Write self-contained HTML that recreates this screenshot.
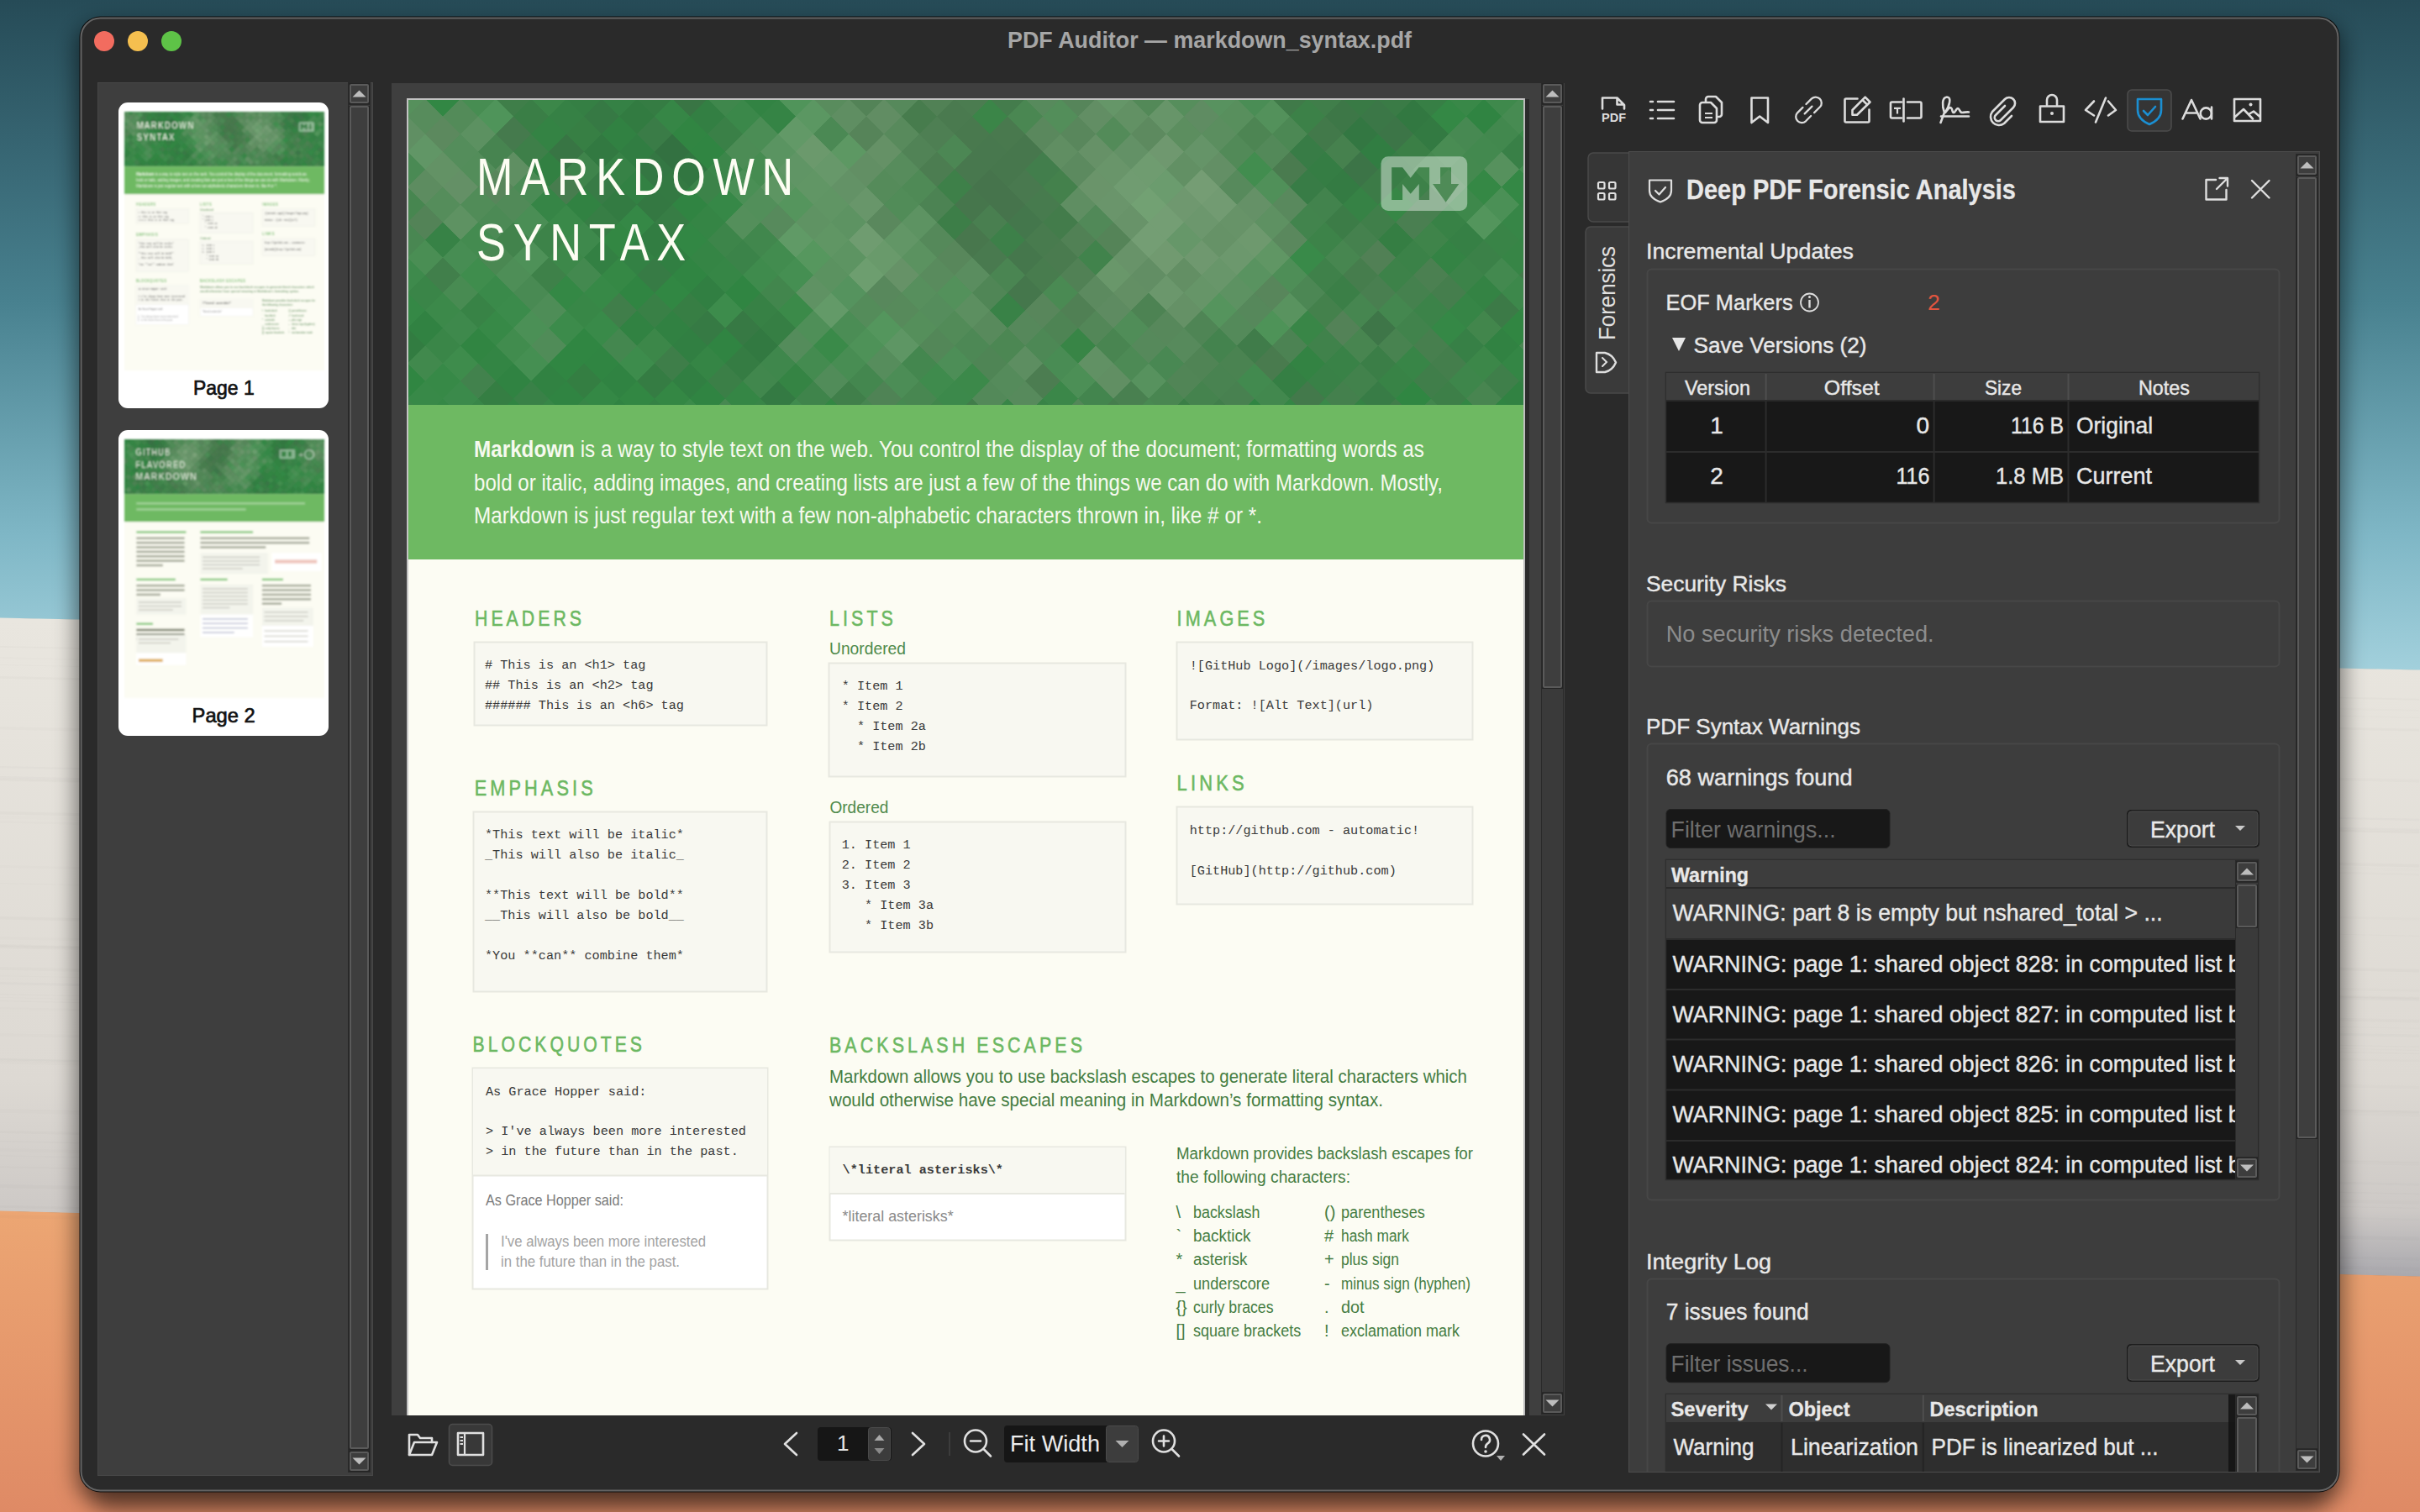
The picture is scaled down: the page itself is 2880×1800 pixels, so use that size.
<!DOCTYPE html><html><head><meta charset="utf-8"><style>html,body{margin:0;padding:0;width:2880px;height:1800px;overflow:hidden;background:#2a5562}svg{display:block;font-family:"Liberation Sans",sans-serif}</style></head><body>
<svg width="2880" height="1800" viewBox="0 0 2880 1800">
<defs>
<linearGradient id="wgTop" x1="0" y1="0" x2="0" y2="1">
<stop offset="0" stop-color="#264b57"/><stop offset="0.45" stop-color="#48818f"/><stop offset="0.8" stop-color="#7fb7c6"/><stop offset="1" stop-color="#a2d0dc"/></linearGradient>
<linearGradient id="wgMid" x1="0" y1="0" x2="0" y2="1">
<stop offset="0" stop-color="#e9e6df"/><stop offset="0.7" stop-color="#ddd9d3"/><stop offset="0.9" stop-color="#cdc9c6"/><stop offset="1" stop-color="#a9a8ad"/></linearGradient>
<linearGradient id="wgBot" x1="0" y1="0" x2="0" y2="1">
<stop offset="0" stop-color="#eca673"/><stop offset="1" stop-color="#df8a65"/></linearGradient>
<filter id="shadow" x="-10%" y="-10%" width="120%" height="120%"><feGaussianBlur stdDeviation="13"/></filter>
<filter id="thblur" x="-5%" y="-5%" width="110%" height="110%"><feGaussianBlur stdDeviation="4.5"/></filter>
<clipPath id="hdrclip"><rect x="0" y="0" width="1329" height="364"/></clipPath>
<clipPath id="viewclip"><rect x="485" y="118" width="1328" height="1567"/></clipPath>
<clipPath id="panelclip"><rect x="1939" y="181" width="822" height="1571"/></clipPath>
<clipPath id="th1"><rect x="0" y="0" width="238" height="308"/></clipPath>
<clipPath id="warnclip"><rect x="1983" y="1057" width="677" height="348"/></clipPath>
</defs>
<path d="M0 0H2880V798L0 736z" fill="url(#wgTop)"/>
<path d="M0 735.5L2880 797.5V1520L0 1442z" fill="url(#wgMid)"/>
<path d="M0 1441.5L2880 1519.5V1800H0z" fill="url(#wgBot)"/>
<rect x="0" y="927" width="2880" height="2.1" fill="#6a6060" fill-opacity="0.019" transform="rotate(1.25 0 927)"/>
<rect x="0" y="1183" width="2880" height="1.2" fill="#6a6060" fill-opacity="0.021" transform="rotate(1.25 0 1183)"/>
<rect x="0" y="769" width="2880" height="1.8" fill="#6a6060" fill-opacity="0.025" transform="rotate(1.25 0 769)"/>
<rect x="0" y="924" width="2880" height="2.4" fill="#6a6060" fill-opacity="0.028" transform="rotate(1.25 0 924)"/>
<rect x="0" y="1346" width="2880" height="2.9" fill="#6a6060" fill-opacity="0.018" transform="rotate(1.25 0 1346)"/>
<rect x="0" y="865" width="2880" height="3.6" fill="#6a6060" fill-opacity="0.021" transform="rotate(1.25 0 865)"/>
<rect x="0" y="1126" width="2880" height="3.0" fill="#6a6060" fill-opacity="0.023" transform="rotate(1.25 0 1126)"/>
<rect x="0" y="805" width="2880" height="2.8" fill="#6a6060" fill-opacity="0.023" transform="rotate(1.25 0 805)"/>
<rect x="0" y="971" width="2880" height="3.6" fill="#6a6060" fill-opacity="0.009" transform="rotate(1.25 0 971)"/>
<rect x="0" y="1091" width="2880" height="3.6" fill="#6a6060" fill-opacity="0.022" transform="rotate(1.25 0 1091)"/>
<rect x="0" y="1260" width="2880" height="2.2" fill="#6a6060" fill-opacity="0.026" transform="rotate(1.25 0 1260)"/>
<rect x="0" y="1321" width="2880" height="3.8" fill="#6a6060" fill-opacity="0.017" transform="rotate(1.25 0 1321)"/>
<rect x="0" y="1375" width="2880" height="1.4" fill="#6a6060" fill-opacity="0.010" transform="rotate(1.25 0 1375)"/>
<rect x="0" y="912" width="2880" height="2.3" fill="#6a6060" fill-opacity="0.027" transform="rotate(1.25 0 912)"/>
<rect x="0" y="1199" width="2880" height="2.5" fill="#6a6060" fill-opacity="0.014" transform="rotate(1.25 0 1199)"/>
<rect x="0" y="1030" width="2880" height="2.8" fill="#6a6060" fill-opacity="0.015" transform="rotate(1.25 0 1030)"/>
<rect x="0" y="1169" width="2880" height="3.0" fill="#6a6060" fill-opacity="0.026" transform="rotate(1.25 0 1169)"/>
<rect x="0" y="1410" width="2880" height="4.0" fill="#6a6060" fill-opacity="0.025" transform="rotate(1.25 0 1410)"/>
<rect x="0" y="1230" width="2880" height="3.6" fill="#6a6060" fill-opacity="0.011" transform="rotate(1.25 0 1230)"/>
<rect x="0" y="1435" width="2880" height="2.7" fill="#6a6060" fill-opacity="0.026" transform="rotate(1.25 0 1435)"/>
<rect x="0" y="1260" width="2880" height="3.5" fill="#6a6060" fill-opacity="0.012" transform="rotate(1.25 0 1260)"/>
<rect x="0" y="1161" width="2880" height="1.2" fill="#6a6060" fill-opacity="0.014" transform="rotate(1.25 0 1161)"/>
<rect x="0" y="1358" width="2880" height="1.3" fill="#6a6060" fill-opacity="0.028" transform="rotate(1.25 0 1358)"/>
<rect x="0" y="1320" width="2880" height="1.5" fill="#6a6060" fill-opacity="0.016" transform="rotate(1.25 0 1320)"/>
<rect x="0" y="966" width="2880" height="3.6" fill="#6a6060" fill-opacity="0.023" transform="rotate(1.25 0 966)"/>
<rect x="0" y="791" width="2880" height="1.1" fill="#6a6060" fill-opacity="0.020" transform="rotate(1.25 0 791)"/>
<rect x="0" y="1263" width="2880" height="3.6" fill="#6a6060" fill-opacity="0.015" transform="rotate(1.25 0 1263)"/>
<rect x="0" y="1446" width="2880" height="4.0" fill="#6a6060" fill-opacity="0.018" transform="rotate(1.25 0 1446)"/>
<rect x="0" y="977" width="2880" height="2.8" fill="#6a6060" fill-opacity="0.010" transform="rotate(1.25 0 977)"/>
<rect x="0" y="782" width="2880" height="2.2" fill="#6a6060" fill-opacity="0.012" transform="rotate(1.25 0 782)"/>
<rect x="0" y="1187" width="2880" height="1.1" fill="#6a6060" fill-opacity="0.011" transform="rotate(1.25 0 1187)"/>
<rect x="0" y="1367" width="2880" height="3.9" fill="#6a6060" fill-opacity="0.014" transform="rotate(1.25 0 1367)"/>
<rect x="0" y="1388" width="2880" height="2.4" fill="#6a6060" fill-opacity="0.016" transform="rotate(1.25 0 1388)"/>
<rect x="0" y="1124" width="2880" height="2.8" fill="#6a6060" fill-opacity="0.021" transform="rotate(1.25 0 1124)"/>
<rect x="0" y="1151" width="2880" height="3.8" fill="#6a6060" fill-opacity="0.020" transform="rotate(1.25 0 1151)"/>
<rect x="0" y="1115" width="2880" height="3.2" fill="#6a6060" fill-opacity="0.017" transform="rotate(1.25 0 1115)"/>
<rect x="0" y="926" width="2880" height="3.9" fill="#6a6060" fill-opacity="0.014" transform="rotate(1.25 0 926)"/>
<rect x="0" y="1125" width="2880" height="1.0" fill="#6a6060" fill-opacity="0.019" transform="rotate(1.25 0 1125)"/>
<rect x="0" y="1051" width="2880" height="1.1" fill="#6a6060" fill-opacity="0.020" transform="rotate(1.25 0 1051)"/>
<rect x="0" y="1191" width="2880" height="1.2" fill="#6a6060" fill-opacity="0.021" transform="rotate(1.25 0 1191)"/>
<rect x="90" y="28" width="2699" height="1758" rx="28" fill="#000" fill-opacity="0.5" filter="url(#shadow)"/>
<rect x="110" y="1740" width="2660" height="60" rx="20" fill="#000" fill-opacity="0.35" filter="url(#shadow)"/>
<defs><g id="pg1"><rect x="0" y="0" width="1329" height="1720" fill="#fcfcf3"/>
<g clip-path="url(#hdrclip)">
<rect x="0" y="0" width="1329" height="364" fill="#3a8546"/>
<path d="M-42 -21l21 -21l21 21l-21 21z" fill="#3e864b" stroke="#3e864b" stroke-width="0.8"/>
<path d="M0 -21l21 -21l21 21l-21 21z" fill="#3f894c" stroke="#3f894c" stroke-width="0.8"/>
<path d="M42 -21l21 -21l21 21l-21 21z" fill="#3b8648" stroke="#3b8648" stroke-width="0.8"/>
<path d="M84 -21l21 -21l21 21l-21 21z" fill="#498a53" stroke="#498a53" stroke-width="0.8"/>
<path d="M126 -21l21 -21l21 21l-21 21z" fill="#40884c" stroke="#40884c" stroke-width="0.8"/>
<path d="M168 -21l21 -21l21 21l-21 21z" fill="#348344" stroke="#348344" stroke-width="0.8"/>
<path d="M210 -21l21 -21l21 21l-21 21z" fill="#377544" stroke="#377544" stroke-width="0.8"/>
<path d="M252 -21l21 -21l21 21l-21 21z" fill="#347d43" stroke="#347d43" stroke-width="0.8"/>
<path d="M294 -21l21 -21l21 21l-21 21z" fill="#327641" stroke="#327641" stroke-width="0.8"/>
<path d="M336 -21l21 -21l21 21l-21 21z" fill="#317e42" stroke="#317e42" stroke-width="0.8"/>
<path d="M378 -21l21 -21l21 21l-21 21z" fill="#3c894a" stroke="#3c894a" stroke-width="0.8"/>
<path d="M420 -21l21 -21l21 21l-21 21z" fill="#478e53" stroke="#478e53" stroke-width="0.8"/>
<path d="M462 -21l21 -21l21 21l-21 21z" fill="#528d59" stroke="#528d59" stroke-width="0.8"/>
<path d="M504 -21l21 -21l21 21l-21 21z" fill="#568459" stroke="#568459" stroke-width="0.8"/>
<path d="M546 -21l21 -21l21 21l-21 21z" fill="#5a885d" stroke="#5a885d" stroke-width="0.8"/>
<path d="M588 -21l21 -21l21 21l-21 21z" fill="#45814e" stroke="#45814e" stroke-width="0.8"/>
<path d="M630 -21l21 -21l21 21l-21 21z" fill="#477e4e" stroke="#477e4e" stroke-width="0.8"/>
<path d="M672 -21l21 -21l21 21l-21 21z" fill="#4e8154" stroke="#4e8154" stroke-width="0.8"/>
<path d="M714 -21l21 -21l21 21l-21 21z" fill="#42824d" stroke="#42824d" stroke-width="0.8"/>
<path d="M756 -21l21 -21l21 21l-21 21z" fill="#548358" stroke="#548358" stroke-width="0.8"/>
<path d="M798 -21l21 -21l21 21l-21 21z" fill="#528758" stroke="#528758" stroke-width="0.8"/>
<path d="M840 -21l21 -21l21 21l-21 21z" fill="#54915c" stroke="#54915c" stroke-width="0.8"/>
<path d="M882 -21l21 -21l21 21l-21 21z" fill="#5c8a5f" stroke="#5c8a5f" stroke-width="0.8"/>
<path d="M924 -21l21 -21l21 21l-21 21z" fill="#40814b" stroke="#40814b" stroke-width="0.8"/>
<path d="M966 -21l21 -21l21 21l-21 21z" fill="#44874e" stroke="#44874e" stroke-width="0.8"/>
<path d="M1008 -21l21 -21l21 21l-21 21z" fill="#43844e" stroke="#43844e" stroke-width="0.8"/>
<path d="M1050 -21l21 -21l21 21l-21 21z" fill="#3e7748" stroke="#3e7748" stroke-width="0.8"/>
<path d="M1092 -21l21 -21l21 21l-21 21z" fill="#3f7c49" stroke="#3f7c49" stroke-width="0.8"/>
<path d="M1134 -21l21 -21l21 21l-21 21z" fill="#3a8147" stroke="#3a8147" stroke-width="0.8"/>
<path d="M1176 -21l21 -21l21 21l-21 21z" fill="#318242" stroke="#318242" stroke-width="0.8"/>
<path d="M1218 -21l21 -21l21 21l-21 21z" fill="#328744" stroke="#328744" stroke-width="0.8"/>
<path d="M1260 -21l21 -21l21 21l-21 21z" fill="#308442" stroke="#308442" stroke-width="0.8"/>
<path d="M1302 -21l21 -21l21 21l-21 21z" fill="#318242" stroke="#318242" stroke-width="0.8"/>
<path d="M1344 -21l21 -21l21 21l-21 21z" fill="#3c8b4b" stroke="#3c8b4b" stroke-width="0.8"/>
<path d="M-63 0l21 -21l21 21l-21 21z" fill="#368245" stroke="#368245" stroke-width="0.8"/>
<path d="M-21 0l21 -21l21 21l-21 21z" fill="#56905c" stroke="#56905c" stroke-width="0.8"/>
<path d="M21 0l21 -21l21 21l-21 21z" fill="#328744" stroke="#328744" stroke-width="0.8"/>
<path d="M63 0l21 -21l21 21l-21 21z" fill="#478d52" stroke="#478d52" stroke-width="0.8"/>
<path d="M105 0l21 -21l21 21l-21 21z" fill="#3f7e49" stroke="#3f7e49" stroke-width="0.8"/>
<path d="M147 0l21 -21l21 21l-21 21z" fill="#3c8749" stroke="#3c8749" stroke-width="0.8"/>
<path d="M189 0l21 -21l21 21l-21 21z" fill="#357f44" stroke="#357f44" stroke-width="0.8"/>
<path d="M231 0l21 -21l21 21l-21 21z" fill="#358145" stroke="#358145" stroke-width="0.8"/>
<path d="M273 0l21 -21l21 21l-21 21z" fill="#357c43" stroke="#357c43" stroke-width="0.8"/>
<path d="M315 0l21 -21l21 21l-21 21z" fill="#397544" stroke="#397544" stroke-width="0.8"/>
<path d="M357 0l21 -21l21 21l-21 21z" fill="#3f874c" stroke="#3f874c" stroke-width="0.8"/>
<path d="M399 0l21 -21l21 21l-21 21z" fill="#328343" stroke="#328343" stroke-width="0.8"/>
<path d="M441 0l21 -21l21 21l-21 21z" fill="#50945a" stroke="#50945a" stroke-width="0.8"/>
<path d="M483 0l21 -21l21 21l-21 21z" fill="#598c5d" stroke="#598c5d" stroke-width="0.8"/>
<path d="M525 0l21 -21l21 21l-21 21z" fill="#538357" stroke="#538357" stroke-width="0.8"/>
<path d="M567 0l21 -21l21 21l-21 21z" fill="#56895b" stroke="#56895b" stroke-width="0.8"/>
<path d="M609 0l21 -21l21 21l-21 21z" fill="#518155" stroke="#518155" stroke-width="0.8"/>
<path d="M651 0l21 -21l21 21l-21 21z" fill="#4b7c50" stroke="#4b7c50" stroke-width="0.8"/>
<path d="M693 0l21 -21l21 21l-21 21z" fill="#447c4c" stroke="#447c4c" stroke-width="0.8"/>
<path d="M735 0l21 -21l21 21l-21 21z" fill="#578a5c" stroke="#578a5c" stroke-width="0.8"/>
<path d="M777 0l21 -21l21 21l-21 21z" fill="#56855a" stroke="#56855a" stroke-width="0.8"/>
<path d="M819 0l21 -21l21 21l-21 21z" fill="#659668" stroke="#659668" stroke-width="0.8"/>
<path d="M861 0l21 -21l21 21l-21 21z" fill="#538958" stroke="#538958" stroke-width="0.8"/>
<path d="M903 0l21 -21l21 21l-21 21z" fill="#568e5c" stroke="#568e5c" stroke-width="0.8"/>
<path d="M945 0l21 -21l21 21l-21 21z" fill="#58925f" stroke="#58925f" stroke-width="0.8"/>
<path d="M987 0l21 -21l21 21l-21 21z" fill="#4a8d55" stroke="#4a8d55" stroke-width="0.8"/>
<path d="M1029 0l21 -21l21 21l-21 21z" fill="#407a49" stroke="#407a49" stroke-width="0.8"/>
<path d="M1071 0l21 -21l21 21l-21 21z" fill="#407e4a" stroke="#407e4a" stroke-width="0.8"/>
<path d="M1113 0l21 -21l21 21l-21 21z" fill="#397a45" stroke="#397a45" stroke-width="0.8"/>
<path d="M1155 0l21 -21l21 21l-21 21z" fill="#3a7b46" stroke="#3a7b46" stroke-width="0.8"/>
<path d="M1197 0l21 -21l21 21l-21 21z" fill="#377f45" stroke="#377f45" stroke-width="0.8"/>
<path d="M1239 0l21 -21l21 21l-21 21z" fill="#398848" stroke="#398848" stroke-width="0.8"/>
<path d="M1281 0l21 -21l21 21l-21 21z" fill="#3f894c" stroke="#3f894c" stroke-width="0.8"/>
<path d="M1323 0l21 -21l21 21l-21 21z" fill="#488e53" stroke="#488e53" stroke-width="0.8"/>
<path d="M-42 21l21 -21l21 21l-21 21z" fill="#438a4f" stroke="#438a4f" stroke-width="0.8"/>
<path d="M0 21l21 -21l21 21l-21 21z" fill="#578c5c" stroke="#578c5c" stroke-width="0.8"/>
<path d="M42 21l21 -21l21 21l-21 21z" fill="#538b59" stroke="#538b59" stroke-width="0.8"/>
<path d="M84 21l21 -21l21 21l-21 21z" fill="#4f945a" stroke="#4f945a" stroke-width="0.8"/>
<path d="M126 21l21 -21l21 21l-21 21z" fill="#3a7e46" stroke="#3a7e46" stroke-width="0.8"/>
<path d="M168 21l21 -21l21 21l-21 21z" fill="#368145" stroke="#368145" stroke-width="0.8"/>
<path d="M210 21l21 -21l21 21l-21 21z" fill="#367944" stroke="#367944" stroke-width="0.8"/>
<path d="M252 21l21 -21l21 21l-21 21z" fill="#327b41" stroke="#327b41" stroke-width="0.8"/>
<path d="M294 21l21 -21l21 21l-21 21z" fill="#368646" stroke="#368646" stroke-width="0.8"/>
<path d="M336 21l21 -21l21 21l-21 21z" fill="#337f43" stroke="#337f43" stroke-width="0.8"/>
<path d="M378 21l21 -21l21 21l-21 21z" fill="#3b884a" stroke="#3b884a" stroke-width="0.8"/>
<path d="M420 21l21 -21l21 21l-21 21z" fill="#358445" stroke="#358445" stroke-width="0.8"/>
<path d="M462 21l21 -21l21 21l-21 21z" fill="#5b9762" stroke="#5b9762" stroke-width="0.8"/>
<path d="M504 21l21 -21l21 21l-21 21z" fill="#5f8e62" stroke="#5f8e62" stroke-width="0.8"/>
<path d="M546 21l21 -21l21 21l-21 21z" fill="#618d63" stroke="#618d63" stroke-width="0.8"/>
<path d="M588 21l21 -21l21 21l-21 21z" fill="#477c4d" stroke="#477c4d" stroke-width="0.8"/>
<path d="M630 21l21 -21l21 21l-21 21z" fill="#4a7a4f" stroke="#4a7a4f" stroke-width="0.8"/>
<path d="M672 21l21 -21l21 21l-21 21z" fill="#3b8548" stroke="#3b8548" stroke-width="0.8"/>
<path d="M714 21l21 -21l21 21l-21 21z" fill="#4a8752" stroke="#4a8752" stroke-width="0.8"/>
<path d="M756 21l21 -21l21 21l-21 21z" fill="#538e5a" stroke="#538e5a" stroke-width="0.8"/>
<path d="M798 21l21 -21l21 21l-21 21z" fill="#628e64" stroke="#628e64" stroke-width="0.8"/>
<path d="M840 21l21 -21l21 21l-21 21z" fill="#629164" stroke="#629164" stroke-width="0.8"/>
<path d="M882 21l21 -21l21 21l-21 21z" fill="#679569" stroke="#679569" stroke-width="0.8"/>
<path d="M924 21l21 -21l21 21l-21 21z" fill="#5f8c62" stroke="#5f8c62" stroke-width="0.8"/>
<path d="M966 21l21 -21l21 21l-21 21z" fill="#588f5d" stroke="#588f5d" stroke-width="0.8"/>
<path d="M1008 21l21 -21l21 21l-21 21z" fill="#53915b" stroke="#53915b" stroke-width="0.8"/>
<path d="M1050 21l21 -21l21 21l-21 21z" fill="#3c8148" stroke="#3c8148" stroke-width="0.8"/>
<path d="M1092 21l21 -21l21 21l-21 21z" fill="#3d7747" stroke="#3d7747" stroke-width="0.8"/>
<path d="M1134 21l21 -21l21 21l-21 21z" fill="#3b7747" stroke="#3b7747" stroke-width="0.8"/>
<path d="M1176 21l21 -21l21 21l-21 21z" fill="#327841" stroke="#327841" stroke-width="0.8"/>
<path d="M1218 21l21 -21l21 21l-21 21z" fill="#348845" stroke="#348845" stroke-width="0.8"/>
<path d="M1260 21l21 -21l21 21l-21 21z" fill="#308442" stroke="#308442" stroke-width="0.8"/>
<path d="M1302 21l21 -21l21 21l-21 21z" fill="#478b52" stroke="#478b52" stroke-width="0.8"/>
<path d="M1344 21l21 -21l21 21l-21 21z" fill="#408d4e" stroke="#408d4e" stroke-width="0.8"/>
<path d="M-63 42l21 -21l21 21l-21 21z" fill="#3f8d4d" stroke="#3f8d4d" stroke-width="0.8"/>
<path d="M-21 42l21 -21l21 21l-21 21z" fill="#608f63" stroke="#608f63" stroke-width="0.8"/>
<path d="M21 42l21 -21l21 21l-21 21z" fill="#5c895e" stroke="#5c895e" stroke-width="0.8"/>
<path d="M63 42l21 -21l21 21l-21 21z" fill="#5c9161" stroke="#5c9161" stroke-width="0.8"/>
<path d="M105 42l21 -21l21 21l-21 21z" fill="#457a4d" stroke="#457a4d" stroke-width="0.8"/>
<path d="M147 42l21 -21l21 21l-21 21z" fill="#348344" stroke="#348344" stroke-width="0.8"/>
<path d="M189 42l21 -21l21 21l-21 21z" fill="#377f44" stroke="#377f44" stroke-width="0.8"/>
<path d="M231 42l21 -21l21 21l-21 21z" fill="#318142" stroke="#318142" stroke-width="0.8"/>
<path d="M273 42l21 -21l21 21l-21 21z" fill="#3a7c47" stroke="#3a7c47" stroke-width="0.8"/>
<path d="M315 42l21 -21l21 21l-21 21z" fill="#318542" stroke="#318542" stroke-width="0.8"/>
<path d="M357 42l21 -21l21 21l-21 21z" fill="#3a8047" stroke="#3a8047" stroke-width="0.8"/>
<path d="M399 42l21 -21l21 21l-21 21z" fill="#4b8d55" stroke="#4b8d55" stroke-width="0.8"/>
<path d="M441 42l21 -21l21 21l-21 21z" fill="#629967" stroke="#629967" stroke-width="0.8"/>
<path d="M483 42l21 -21l21 21l-21 21z" fill="#4b8954" stroke="#4b8954" stroke-width="0.8"/>
<path d="M525 42l21 -21l21 21l-21 21z" fill="#568459" stroke="#568459" stroke-width="0.8"/>
<path d="M567 42l21 -21l21 21l-21 21z" fill="#588a5c" stroke="#588a5c" stroke-width="0.8"/>
<path d="M609 42l21 -21l21 21l-21 21z" fill="#4e7f53" stroke="#4e7f53" stroke-width="0.8"/>
<path d="M651 42l21 -21l21 21l-21 21z" fill="#49794e" stroke="#49794e" stroke-width="0.8"/>
<path d="M693 42l21 -21l21 21l-21 21z" fill="#49794e" stroke="#49794e" stroke-width="0.8"/>
<path d="M735 42l21 -21l21 21l-21 21z" fill="#5a885d" stroke="#5a885d" stroke-width="0.8"/>
<path d="M777 42l21 -21l21 21l-21 21z" fill="#59875c" stroke="#59875c" stroke-width="0.8"/>
<path d="M819 42l21 -21l21 21l-21 21z" fill="#538b59" stroke="#538b59" stroke-width="0.8"/>
<path d="M861 42l21 -21l21 21l-21 21z" fill="#5d8a5f" stroke="#5d8a5f" stroke-width="0.8"/>
<path d="M903 42l21 -21l21 21l-21 21z" fill="#5c8e5f" stroke="#5c8e5f" stroke-width="0.8"/>
<path d="M945 42l21 -21l21 21l-21 21z" fill="#5b8e5f" stroke="#5b8e5f" stroke-width="0.8"/>
<path d="M987 42l21 -21l21 21l-21 21z" fill="#4d8553" stroke="#4d8553" stroke-width="0.8"/>
<path d="M1029 42l21 -21l21 21l-21 21z" fill="#4c8854" stroke="#4c8854" stroke-width="0.8"/>
<path d="M1071 42l21 -21l21 21l-21 21z" fill="#42794a" stroke="#42794a" stroke-width="0.8"/>
<path d="M1113 42l21 -21l21 21l-21 21z" fill="#337742" stroke="#337742" stroke-width="0.8"/>
<path d="M1155 42l21 -21l21 21l-21 21z" fill="#3c7547" stroke="#3c7547" stroke-width="0.8"/>
<path d="M1197 42l21 -21l21 21l-21 21z" fill="#337a42" stroke="#337a42" stroke-width="0.8"/>
<path d="M1239 42l21 -21l21 21l-21 21z" fill="#478952" stroke="#478952" stroke-width="0.8"/>
<path d="M1281 42l21 -21l21 21l-21 21z" fill="#42884e" stroke="#42884e" stroke-width="0.8"/>
<path d="M1323 42l21 -21l21 21l-21 21z" fill="#388a48" stroke="#388a48" stroke-width="0.8"/>
<path d="M-42 63l21 -21l21 21l-21 21z" fill="#40874d" stroke="#40874d" stroke-width="0.8"/>
<path d="M0 63l21 -21l21 21l-21 21z" fill="#619666" stroke="#619666" stroke-width="0.8"/>
<path d="M42 63l21 -21l21 21l-21 21z" fill="#548d5b" stroke="#548d5b" stroke-width="0.8"/>
<path d="M84 63l21 -21l21 21l-21 21z" fill="#478450" stroke="#478450" stroke-width="0.8"/>
<path d="M126 63l21 -21l21 21l-21 21z" fill="#3e7f49" stroke="#3e7f49" stroke-width="0.8"/>
<path d="M168 63l21 -21l21 21l-21 21z" fill="#387544" stroke="#387544" stroke-width="0.8"/>
<path d="M210 63l21 -21l21 21l-21 21z" fill="#327941" stroke="#327941" stroke-width="0.8"/>
<path d="M252 63l21 -21l21 21l-21 21z" fill="#317d42" stroke="#317d42" stroke-width="0.8"/>
<path d="M294 63l21 -21l21 21l-21 21z" fill="#337141" stroke="#337141" stroke-width="0.8"/>
<path d="M336 63l21 -21l21 21l-21 21z" fill="#308542" stroke="#308542" stroke-width="0.8"/>
<path d="M378 63l21 -21l21 21l-21 21z" fill="#4c8c55" stroke="#4c8c55" stroke-width="0.8"/>
<path d="M420 63l21 -21l21 21l-21 21z" fill="#5a9461" stroke="#5a9461" stroke-width="0.8"/>
<path d="M462 63l21 -21l21 21l-21 21z" fill="#6b996c" stroke="#6b996c" stroke-width="0.8"/>
<path d="M504 63l21 -21l21 21l-21 21z" fill="#5d9863" stroke="#5d9863" stroke-width="0.8"/>
<path d="M546 63l21 -21l21 21l-21 21z" fill="#659166" stroke="#659166" stroke-width="0.8"/>
<path d="M588 63l21 -21l21 21l-21 21z" fill="#518356" stroke="#518356" stroke-width="0.8"/>
<path d="M630 63l21 -21l21 21l-21 21z" fill="#4c8754" stroke="#4c8754" stroke-width="0.8"/>
<path d="M672 63l21 -21l21 21l-21 21z" fill="#48784e" stroke="#48784e" stroke-width="0.8"/>
<path d="M714 63l21 -21l21 21l-21 21z" fill="#47774d" stroke="#47774d" stroke-width="0.8"/>
<path d="M756 63l21 -21l21 21l-21 21z" fill="#608e62" stroke="#608e62" stroke-width="0.8"/>
<path d="M798 63l21 -21l21 21l-21 21z" fill="#669167" stroke="#669167" stroke-width="0.8"/>
<path d="M840 63l21 -21l21 21l-21 21z" fill="#639166" stroke="#639166" stroke-width="0.8"/>
<path d="M882 63l21 -21l21 21l-21 21z" fill="#6f986f" stroke="#6f986f" stroke-width="0.8"/>
<path d="M924 63l21 -21l21 21l-21 21z" fill="#659468" stroke="#659468" stroke-width="0.8"/>
<path d="M966 63l21 -21l21 21l-21 21z" fill="#528a58" stroke="#528a58" stroke-width="0.8"/>
<path d="M1008 63l21 -21l21 21l-21 21z" fill="#538959" stroke="#538959" stroke-width="0.8"/>
<path d="M1050 63l21 -21l21 21l-21 21z" fill="#387c46" stroke="#387c46" stroke-width="0.8"/>
<path d="M1092 63l21 -21l21 21l-21 21z" fill="#46814e" stroke="#46814e" stroke-width="0.8"/>
<path d="M1134 63l21 -21l21 21l-21 21z" fill="#317d42" stroke="#317d42" stroke-width="0.8"/>
<path d="M1176 63l21 -21l21 21l-21 21z" fill="#3b7f46" stroke="#3b7f46" stroke-width="0.8"/>
<path d="M1218 63l21 -21l21 21l-21 21z" fill="#498c53" stroke="#498c53" stroke-width="0.8"/>
<path d="M1260 63l21 -21l21 21l-21 21z" fill="#43894f" stroke="#43894f" stroke-width="0.8"/>
<path d="M1302 63l21 -21l21 21l-21 21z" fill="#398047" stroke="#398047" stroke-width="0.8"/>
<path d="M1344 63l21 -21l21 21l-21 21z" fill="#398a48" stroke="#398a48" stroke-width="0.8"/>
<path d="M-63 84l21 -21l21 21l-21 21z" fill="#5b8d5f" stroke="#5b8d5f" stroke-width="0.8"/>
<path d="M-21 84l21 -21l21 21l-21 21z" fill="#4a8a54" stroke="#4a8a54" stroke-width="0.8"/>
<path d="M21 84l21 -21l21 21l-21 21z" fill="#639265" stroke="#639265" stroke-width="0.8"/>
<path d="M63 84l21 -21l21 21l-21 21z" fill="#538d5a" stroke="#538d5a" stroke-width="0.8"/>
<path d="M105 84l21 -21l21 21l-21 21z" fill="#5f8f62" stroke="#5f8f62" stroke-width="0.8"/>
<path d="M147 84l21 -21l21 21l-21 21z" fill="#328042" stroke="#328042" stroke-width="0.8"/>
<path d="M189 84l21 -21l21 21l-21 21z" fill="#3f844b" stroke="#3f844b" stroke-width="0.8"/>
<path d="M231 84l21 -21l21 21l-21 21z" fill="#378246" stroke="#378246" stroke-width="0.8"/>
<path d="M273 84l21 -21l21 21l-21 21z" fill="#347743" stroke="#347743" stroke-width="0.8"/>
<path d="M315 84l21 -21l21 21l-21 21z" fill="#327641" stroke="#327641" stroke-width="0.8"/>
<path d="M357 84l21 -21l21 21l-21 21z" fill="#3c864a" stroke="#3c864a" stroke-width="0.8"/>
<path d="M399 84l21 -21l21 21l-21 21z" fill="#468c51" stroke="#468c51" stroke-width="0.8"/>
<path d="M441 84l21 -21l21 21l-21 21z" fill="#609565" stroke="#609565" stroke-width="0.8"/>
<path d="M483 84l21 -21l21 21l-21 21z" fill="#67986a" stroke="#67986a" stroke-width="0.8"/>
<path d="M525 84l21 -21l21 21l-21 21z" fill="#628f64" stroke="#628f64" stroke-width="0.8"/>
<path d="M567 84l21 -21l21 21l-21 21z" fill="#578c5c" stroke="#578c5c" stroke-width="0.8"/>
<path d="M609 84l21 -21l21 21l-21 21z" fill="#4c7d51" stroke="#4c7d51" stroke-width="0.8"/>
<path d="M651 84l21 -21l21 21l-21 21z" fill="#48784e" stroke="#48784e" stroke-width="0.8"/>
<path d="M693 84l21 -21l21 21l-21 21z" fill="#47774d" stroke="#47774d" stroke-width="0.8"/>
<path d="M735 84l21 -21l21 21l-21 21z" fill="#427e4c" stroke="#427e4c" stroke-width="0.8"/>
<path d="M777 84l21 -21l21 21l-21 21z" fill="#5c8a5f" stroke="#5c8a5f" stroke-width="0.8"/>
<path d="M819 84l21 -21l21 21l-21 21z" fill="#69956a" stroke="#69956a" stroke-width="0.8"/>
<path d="M861 84l21 -21l21 21l-21 21z" fill="#6f9c70" stroke="#6f9c70" stroke-width="0.8"/>
<path d="M903 84l21 -21l21 21l-21 21z" fill="#629064" stroke="#629064" stroke-width="0.8"/>
<path d="M945 84l21 -21l21 21l-21 21z" fill="#638f65" stroke="#638f65" stroke-width="0.8"/>
<path d="M987 84l21 -21l21 21l-21 21z" fill="#428d4f" stroke="#428d4f" stroke-width="0.8"/>
<path d="M1029 84l21 -21l21 21l-21 21z" fill="#4a7b4f" stroke="#4a7b4f" stroke-width="0.8"/>
<path d="M1071 84l21 -21l21 21l-21 21z" fill="#357d44" stroke="#357d44" stroke-width="0.8"/>
<path d="M1113 84l21 -21l21 21l-21 21z" fill="#3c7447" stroke="#3c7447" stroke-width="0.8"/>
<path d="M1155 84l21 -21l21 21l-21 21z" fill="#397d46" stroke="#397d46" stroke-width="0.8"/>
<path d="M1197 84l21 -21l21 21l-21 21z" fill="#468850" stroke="#468850" stroke-width="0.8"/>
<path d="M1239 84l21 -21l21 21l-21 21z" fill="#44894f" stroke="#44894f" stroke-width="0.8"/>
<path d="M1281 84l21 -21l21 21l-21 21z" fill="#56915d" stroke="#56915d" stroke-width="0.8"/>
<path d="M1323 84l21 -21l21 21l-21 21z" fill="#448f51" stroke="#448f51" stroke-width="0.8"/>
<path d="M-42 105l21 -21l21 21l-21 21z" fill="#518a58" stroke="#518a58" stroke-width="0.8"/>
<path d="M0 105l21 -21l21 21l-21 21z" fill="#5d8c60" stroke="#5d8c60" stroke-width="0.8"/>
<path d="M42 105l21 -21l21 21l-21 21z" fill="#649066" stroke="#649066" stroke-width="0.8"/>
<path d="M84 105l21 -21l21 21l-21 21z" fill="#58865b" stroke="#58865b" stroke-width="0.8"/>
<path d="M126 105l21 -21l21 21l-21 21z" fill="#4b8b55" stroke="#4b8b55" stroke-width="0.8"/>
<path d="M168 105l21 -21l21 21l-21 21z" fill="#477c4e" stroke="#477c4e" stroke-width="0.8"/>
<path d="M210 105l21 -21l21 21l-21 21z" fill="#387b46" stroke="#387b46" stroke-width="0.8"/>
<path d="M252 105l21 -21l21 21l-21 21z" fill="#328143" stroke="#328143" stroke-width="0.8"/>
<path d="M294 105l21 -21l21 21l-21 21z" fill="#347942" stroke="#347942" stroke-width="0.8"/>
<path d="M336 105l21 -21l21 21l-21 21z" fill="#3c8349" stroke="#3c8349" stroke-width="0.8"/>
<path d="M378 105l21 -21l21 21l-21 21z" fill="#4a8f55" stroke="#4a8f55" stroke-width="0.8"/>
<path d="M420 105l21 -21l21 21l-21 21z" fill="#5d9562" stroke="#5d9562" stroke-width="0.8"/>
<path d="M462 105l21 -21l21 21l-21 21z" fill="#619665" stroke="#619665" stroke-width="0.8"/>
<path d="M504 105l21 -21l21 21l-21 21z" fill="#639266" stroke="#639266" stroke-width="0.8"/>
<path d="M546 105l21 -21l21 21l-21 21z" fill="#558b5a" stroke="#558b5a" stroke-width="0.8"/>
<path d="M588 105l21 -21l21 21l-21 21z" fill="#4f8a56" stroke="#4f8a56" stroke-width="0.8"/>
<path d="M630 105l21 -21l21 21l-21 21z" fill="#3e8049" stroke="#3e8049" stroke-width="0.8"/>
<path d="M672 105l21 -21l21 21l-21 21z" fill="#46744c" stroke="#46744c" stroke-width="0.8"/>
<path d="M714 105l21 -21l21 21l-21 21z" fill="#49794f" stroke="#49794f" stroke-width="0.8"/>
<path d="M756 105l21 -21l21 21l-21 21z" fill="#44814c" stroke="#44814c" stroke-width="0.8"/>
<path d="M798 105l21 -21l21 21l-21 21z" fill="#6a946a" stroke="#6a946a" stroke-width="0.8"/>
<path d="M840 105l21 -21l21 21l-21 21z" fill="#709c71" stroke="#709c71" stroke-width="0.8"/>
<path d="M882 105l21 -21l21 21l-21 21z" fill="#6b9c6e" stroke="#6b9c6e" stroke-width="0.8"/>
<path d="M924 105l21 -21l21 21l-21 21z" fill="#759d74" stroke="#759d74" stroke-width="0.8"/>
<path d="M966 105l21 -21l21 21l-21 21z" fill="#578a5c" stroke="#578a5c" stroke-width="0.8"/>
<path d="M1008 105l21 -21l21 21l-21 21z" fill="#509059" stroke="#509059" stroke-width="0.8"/>
<path d="M1050 105l21 -21l21 21l-21 21z" fill="#387c46" stroke="#387c46" stroke-width="0.8"/>
<path d="M1092 105l21 -21l21 21l-21 21z" fill="#347b43" stroke="#347b43" stroke-width="0.8"/>
<path d="M1134 105l21 -21l21 21l-21 21z" fill="#3c7b47" stroke="#3c7b47" stroke-width="0.8"/>
<path d="M1176 105l21 -21l21 21l-21 21z" fill="#3d8149" stroke="#3d8149" stroke-width="0.8"/>
<path d="M1218 105l21 -21l21 21l-21 21z" fill="#4f8b57" stroke="#4f8b57" stroke-width="0.8"/>
<path d="M1260 105l21 -21l21 21l-21 21z" fill="#358845" stroke="#358845" stroke-width="0.8"/>
<path d="M1302 105l21 -21l21 21l-21 21z" fill="#348845" stroke="#348845" stroke-width="0.8"/>
<path d="M1344 105l21 -21l21 21l-21 21z" fill="#378847" stroke="#378847" stroke-width="0.8"/>
<path d="M-63 126l21 -21l21 21l-21 21z" fill="#418d4f" stroke="#418d4f" stroke-width="0.8"/>
<path d="M-21 126l21 -21l21 21l-21 21z" fill="#478650" stroke="#478650" stroke-width="0.8"/>
<path d="M21 126l21 -21l21 21l-21 21z" fill="#558d5b" stroke="#558d5b" stroke-width="0.8"/>
<path d="M63 126l21 -21l21 21l-21 21z" fill="#518c58" stroke="#518c58" stroke-width="0.8"/>
<path d="M105 126l21 -21l21 21l-21 21z" fill="#518a58" stroke="#518a58" stroke-width="0.8"/>
<path d="M147 126l21 -21l21 21l-21 21z" fill="#368546" stroke="#368546" stroke-width="0.8"/>
<path d="M189 126l21 -21l21 21l-21 21z" fill="#318242" stroke="#318242" stroke-width="0.8"/>
<path d="M231 126l21 -21l21 21l-21 21z" fill="#337b42" stroke="#337b42" stroke-width="0.8"/>
<path d="M273 126l21 -21l21 21l-21 21z" fill="#347842" stroke="#347842" stroke-width="0.8"/>
<path d="M315 126l21 -21l21 21l-21 21z" fill="#308442" stroke="#308442" stroke-width="0.8"/>
<path d="M357 126l21 -21l21 21l-21 21z" fill="#368847" stroke="#368847" stroke-width="0.8"/>
<path d="M399 126l21 -21l21 21l-21 21z" fill="#528f5a" stroke="#528f5a" stroke-width="0.8"/>
<path d="M441 126l21 -21l21 21l-21 21z" fill="#55955d" stroke="#55955d" stroke-width="0.8"/>
<path d="M483 126l21 -21l21 21l-21 21z" fill="#609564" stroke="#609564" stroke-width="0.8"/>
<path d="M525 126l21 -21l21 21l-21 21z" fill="#68966a" stroke="#68966a" stroke-width="0.8"/>
<path d="M567 126l21 -21l21 21l-21 21z" fill="#518c58" stroke="#518c58" stroke-width="0.8"/>
<path d="M609 126l21 -21l21 21l-21 21z" fill="#4c8353" stroke="#4c8353" stroke-width="0.8"/>
<path d="M651 126l21 -21l21 21l-21 21z" fill="#46764c" stroke="#46764c" stroke-width="0.8"/>
<path d="M693 126l21 -21l21 21l-21 21z" fill="#46744c" stroke="#46744c" stroke-width="0.8"/>
<path d="M735 126l21 -21l21 21l-21 21z" fill="#477b4e" stroke="#477b4e" stroke-width="0.8"/>
<path d="M777 126l21 -21l21 21l-21 21z" fill="#5f8e62" stroke="#5f8e62" stroke-width="0.8"/>
<path d="M819 126l21 -21l21 21l-21 21z" fill="#6a956b" stroke="#6a956b" stroke-width="0.8"/>
<path d="M861 126l21 -21l21 21l-21 21z" fill="#72a173" stroke="#72a173" stroke-width="0.8"/>
<path d="M903 126l21 -21l21 21l-21 21z" fill="#6f986f" stroke="#6f986f" stroke-width="0.8"/>
<path d="M945 126l21 -21l21 21l-21 21z" fill="#729b72" stroke="#729b72" stroke-width="0.8"/>
<path d="M987 126l21 -21l21 21l-21 21z" fill="#659167" stroke="#659167" stroke-width="0.8"/>
<path d="M1029 126l21 -21l21 21l-21 21z" fill="#59895d" stroke="#59895d" stroke-width="0.8"/>
<path d="M1071 126l21 -21l21 21l-21 21z" fill="#42834d" stroke="#42834d" stroke-width="0.8"/>
<path d="M1113 126l21 -21l21 21l-21 21z" fill="#368245" stroke="#368245" stroke-width="0.8"/>
<path d="M1155 126l21 -21l21 21l-21 21z" fill="#378746" stroke="#378746" stroke-width="0.8"/>
<path d="M1197 126l21 -21l21 21l-21 21z" fill="#488050" stroke="#488050" stroke-width="0.8"/>
<path d="M1239 126l21 -21l21 21l-21 21z" fill="#3e884b" stroke="#3e884b" stroke-width="0.8"/>
<path d="M1281 126l21 -21l21 21l-21 21z" fill="#4b9056" stroke="#4b9056" stroke-width="0.8"/>
<path d="M1323 126l21 -21l21 21l-21 21z" fill="#358545" stroke="#358545" stroke-width="0.8"/>
<path d="M-42 147l21 -21l21 21l-21 21z" fill="#4d8a55" stroke="#4d8a55" stroke-width="0.8"/>
<path d="M0 147l21 -21l21 21l-21 21z" fill="#538357" stroke="#538357" stroke-width="0.8"/>
<path d="M42 147l21 -21l21 21l-21 21z" fill="#5e9262" stroke="#5e9262" stroke-width="0.8"/>
<path d="M84 147l21 -21l21 21l-21 21z" fill="#4c8a55" stroke="#4c8a55" stroke-width="0.8"/>
<path d="M126 147l21 -21l21 21l-21 21z" fill="#4a8e55" stroke="#4a8e55" stroke-width="0.8"/>
<path d="M168 147l21 -21l21 21l-21 21z" fill="#3a8949" stroke="#3a8949" stroke-width="0.8"/>
<path d="M210 147l21 -21l21 21l-21 21z" fill="#377e45" stroke="#377e45" stroke-width="0.8"/>
<path d="M252 147l21 -21l21 21l-21 21z" fill="#358846" stroke="#358846" stroke-width="0.8"/>
<path d="M294 147l21 -21l21 21l-21 21z" fill="#377d45" stroke="#377d45" stroke-width="0.8"/>
<path d="M336 147l21 -21l21 21l-21 21z" fill="#358545" stroke="#358545" stroke-width="0.8"/>
<path d="M378 147l21 -21l21 21l-21 21z" fill="#548f5b" stroke="#548f5b" stroke-width="0.8"/>
<path d="M420 147l21 -21l21 21l-21 21z" fill="#578a5c" stroke="#578a5c" stroke-width="0.8"/>
<path d="M462 147l21 -21l21 21l-21 21z" fill="#5f9363" stroke="#5f9363" stroke-width="0.8"/>
<path d="M504 147l21 -21l21 21l-21 21z" fill="#5d9362" stroke="#5d9362" stroke-width="0.8"/>
<path d="M546 147l21 -21l21 21l-21 21z" fill="#5a885d" stroke="#5a885d" stroke-width="0.8"/>
<path d="M588 147l21 -21l21 21l-21 21z" fill="#5d9362" stroke="#5d9362" stroke-width="0.8"/>
<path d="M630 147l21 -21l21 21l-21 21z" fill="#3d7e48" stroke="#3d7e48" stroke-width="0.8"/>
<path d="M672 147l21 -21l21 21l-21 21z" fill="#497f50" stroke="#497f50" stroke-width="0.8"/>
<path d="M714 147l21 -21l21 21l-21 21z" fill="#44774c" stroke="#44774c" stroke-width="0.8"/>
<path d="M756 147l21 -21l21 21l-21 21z" fill="#437c4b" stroke="#437c4b" stroke-width="0.8"/>
<path d="M798 147l21 -21l21 21l-21 21z" fill="#518958" stroke="#518958" stroke-width="0.8"/>
<path d="M840 147l21 -21l21 21l-21 21z" fill="#689369" stroke="#689369" stroke-width="0.8"/>
<path d="M882 147l21 -21l21 21l-21 21z" fill="#749e74" stroke="#749e74" stroke-width="0.8"/>
<path d="M924 147l21 -21l21 21l-21 21z" fill="#6c976d" stroke="#6c976d" stroke-width="0.8"/>
<path d="M966 147l21 -21l21 21l-21 21z" fill="#679368" stroke="#679368" stroke-width="0.8"/>
<path d="M1008 147l21 -21l21 21l-21 21z" fill="#5e9162" stroke="#5e9162" stroke-width="0.8"/>
<path d="M1050 147l21 -21l21 21l-21 21z" fill="#42844d" stroke="#42844d" stroke-width="0.8"/>
<path d="M1092 147l21 -21l21 21l-21 21z" fill="#3c7c47" stroke="#3c7c47" stroke-width="0.8"/>
<path d="M1134 147l21 -21l21 21l-21 21z" fill="#407f4a" stroke="#407f4a" stroke-width="0.8"/>
<path d="M1176 147l21 -21l21 21l-21 21z" fill="#4a7f51" stroke="#4a7f51" stroke-width="0.8"/>
<path d="M1218 147l21 -21l21 21l-21 21z" fill="#388246" stroke="#388246" stroke-width="0.8"/>
<path d="M1260 147l21 -21l21 21l-21 21z" fill="#53955c" stroke="#53955c" stroke-width="0.8"/>
<path d="M1302 147l21 -21l21 21l-21 21z" fill="#378647" stroke="#378647" stroke-width="0.8"/>
<path d="M1344 147l21 -21l21 21l-21 21z" fill="#3a8648" stroke="#3a8648" stroke-width="0.8"/>
<path d="M-63 168l21 -21l21 21l-21 21z" fill="#3c8549" stroke="#3c8549" stroke-width="0.8"/>
<path d="M-21 168l21 -21l21 21l-21 21z" fill="#498752" stroke="#498752" stroke-width="0.8"/>
<path d="M21 168l21 -21l21 21l-21 21z" fill="#378246" stroke="#378246" stroke-width="0.8"/>
<path d="M63 168l21 -21l21 21l-21 21z" fill="#448b50" stroke="#448b50" stroke-width="0.8"/>
<path d="M105 168l21 -21l21 21l-21 21z" fill="#42834c" stroke="#42834c" stroke-width="0.8"/>
<path d="M147 168l21 -21l21 21l-21 21z" fill="#3d8349" stroke="#3d8349" stroke-width="0.8"/>
<path d="M189 168l21 -21l21 21l-21 21z" fill="#3e894c" stroke="#3e894c" stroke-width="0.8"/>
<path d="M231 168l21 -21l21 21l-21 21z" fill="#338743" stroke="#338743" stroke-width="0.8"/>
<path d="M273 168l21 -21l21 21l-21 21z" fill="#327d42" stroke="#327d42" stroke-width="0.8"/>
<path d="M315 168l21 -21l21 21l-21 21z" fill="#328744" stroke="#328744" stroke-width="0.8"/>
<path d="M357 168l21 -21l21 21l-21 21z" fill="#3d854a" stroke="#3d854a" stroke-width="0.8"/>
<path d="M399 168l21 -21l21 21l-21 21z" fill="#41874d" stroke="#41874d" stroke-width="0.8"/>
<path d="M441 168l21 -21l21 21l-21 21z" fill="#609a66" stroke="#609a66" stroke-width="0.8"/>
<path d="M483 168l21 -21l21 21l-21 21z" fill="#609664" stroke="#609664" stroke-width="0.8"/>
<path d="M525 168l21 -21l21 21l-21 21z" fill="#6f9c70" stroke="#6f9c70" stroke-width="0.8"/>
<path d="M567 168l21 -21l21 21l-21 21z" fill="#629666" stroke="#629666" stroke-width="0.8"/>
<path d="M609 168l21 -21l21 21l-21 21z" fill="#55895a" stroke="#55895a" stroke-width="0.8"/>
<path d="M651 168l21 -21l21 21l-21 21z" fill="#48774d" stroke="#48774d" stroke-width="0.8"/>
<path d="M693 168l21 -21l21 21l-21 21z" fill="#3d8049" stroke="#3d8049" stroke-width="0.8"/>
<path d="M735 168l21 -21l21 21l-21 21z" fill="#487b4e" stroke="#487b4e" stroke-width="0.8"/>
<path d="M777 168l21 -21l21 21l-21 21z" fill="#518155" stroke="#518155" stroke-width="0.8"/>
<path d="M819 168l21 -21l21 21l-21 21z" fill="#558458" stroke="#558458" stroke-width="0.8"/>
<path d="M861 168l21 -21l21 21l-21 21z" fill="#749e74" stroke="#749e74" stroke-width="0.8"/>
<path d="M903 168l21 -21l21 21l-21 21z" fill="#669769" stroke="#669769" stroke-width="0.8"/>
<path d="M945 168l21 -21l21 21l-21 21z" fill="#669267" stroke="#669267" stroke-width="0.8"/>
<path d="M987 168l21 -21l21 21l-21 21z" fill="#6e996e" stroke="#6e996e" stroke-width="0.8"/>
<path d="M1029 168l21 -21l21 21l-21 21z" fill="#5a885d" stroke="#5a885d" stroke-width="0.8"/>
<path d="M1071 168l21 -21l21 21l-21 21z" fill="#3d8349" stroke="#3d8349" stroke-width="0.8"/>
<path d="M1113 168l21 -21l21 21l-21 21z" fill="#45814e" stroke="#45814e" stroke-width="0.8"/>
<path d="M1155 168l21 -21l21 21l-21 21z" fill="#357e43" stroke="#357e43" stroke-width="0.8"/>
<path d="M1197 168l21 -21l21 21l-21 21z" fill="#3f844a" stroke="#3f844a" stroke-width="0.8"/>
<path d="M1239 168l21 -21l21 21l-21 21z" fill="#368045" stroke="#368045" stroke-width="0.8"/>
<path d="M1281 168l21 -21l21 21l-21 21z" fill="#398447" stroke="#398447" stroke-width="0.8"/>
<path d="M1323 168l21 -21l21 21l-21 21z" fill="#358645" stroke="#358645" stroke-width="0.8"/>
<path d="M-42 189l21 -21l21 21l-21 21z" fill="#3f824b" stroke="#3f824b" stroke-width="0.8"/>
<path d="M0 189l21 -21l21 21l-21 21z" fill="#4a8e54" stroke="#4a8e54" stroke-width="0.8"/>
<path d="M42 189l21 -21l21 21l-21 21z" fill="#478d53" stroke="#478d53" stroke-width="0.8"/>
<path d="M84 189l21 -21l21 21l-21 21z" fill="#4a8852" stroke="#4a8852" stroke-width="0.8"/>
<path d="M126 189l21 -21l21 21l-21 21z" fill="#4e9158" stroke="#4e9158" stroke-width="0.8"/>
<path d="M168 189l21 -21l21 21l-21 21z" fill="#3d884a" stroke="#3d884a" stroke-width="0.8"/>
<path d="M210 189l21 -21l21 21l-21 21z" fill="#338043" stroke="#338043" stroke-width="0.8"/>
<path d="M252 189l21 -21l21 21l-21 21z" fill="#338144" stroke="#338144" stroke-width="0.8"/>
<path d="M294 189l21 -21l21 21l-21 21z" fill="#317f42" stroke="#317f42" stroke-width="0.8"/>
<path d="M336 189l21 -21l21 21l-21 21z" fill="#358545" stroke="#358545" stroke-width="0.8"/>
<path d="M378 189l21 -21l21 21l-21 21z" fill="#3b8349" stroke="#3b8349" stroke-width="0.8"/>
<path d="M420 189l21 -21l21 21l-21 21z" fill="#428c4f" stroke="#428c4f" stroke-width="0.8"/>
<path d="M462 189l21 -21l21 21l-21 21z" fill="#56975e" stroke="#56975e" stroke-width="0.8"/>
<path d="M504 189l21 -21l21 21l-21 21z" fill="#5d9462" stroke="#5d9462" stroke-width="0.8"/>
<path d="M546 189l21 -21l21 21l-21 21z" fill="#699a6b" stroke="#699a6b" stroke-width="0.8"/>
<path d="M588 189l21 -21l21 21l-21 21z" fill="#5b9260" stroke="#5b9260" stroke-width="0.8"/>
<path d="M630 189l21 -21l21 21l-21 21z" fill="#58875b" stroke="#58875b" stroke-width="0.8"/>
<path d="M672 189l21 -21l21 21l-21 21z" fill="#497a4f" stroke="#497a4f" stroke-width="0.8"/>
<path d="M714 189l21 -21l21 21l-21 21z" fill="#45774c" stroke="#45774c" stroke-width="0.8"/>
<path d="M756 189l21 -21l21 21l-21 21z" fill="#4a7b4f" stroke="#4a7b4f" stroke-width="0.8"/>
<path d="M798 189l21 -21l21 21l-21 21z" fill="#41834c" stroke="#41834c" stroke-width="0.8"/>
<path d="M840 189l21 -21l21 21l-21 21z" fill="#689369" stroke="#689369" stroke-width="0.8"/>
<path d="M882 189l21 -21l21 21l-21 21z" fill="#719a70" stroke="#719a70" stroke-width="0.8"/>
<path d="M924 189l21 -21l21 21l-21 21z" fill="#6f986f" stroke="#6f986f" stroke-width="0.8"/>
<path d="M966 189l21 -21l21 21l-21 21z" fill="#6c986d" stroke="#6c986d" stroke-width="0.8"/>
<path d="M1008 189l21 -21l21 21l-21 21z" fill="#609664" stroke="#609664" stroke-width="0.8"/>
<path d="M1050 189l21 -21l21 21l-21 21z" fill="#398a49" stroke="#398a49" stroke-width="0.8"/>
<path d="M1092 189l21 -21l21 21l-21 21z" fill="#478650" stroke="#478650" stroke-width="0.8"/>
<path d="M1134 189l21 -21l21 21l-21 21z" fill="#518055" stroke="#518055" stroke-width="0.8"/>
<path d="M1176 189l21 -21l21 21l-21 21z" fill="#3b8248" stroke="#3b8248" stroke-width="0.8"/>
<path d="M1218 189l21 -21l21 21l-21 21z" fill="#348344" stroke="#348344" stroke-width="0.8"/>
<path d="M1260 189l21 -21l21 21l-21 21z" fill="#3b8148" stroke="#3b8148" stroke-width="0.8"/>
<path d="M1302 189l21 -21l21 21l-21 21z" fill="#378546" stroke="#378546" stroke-width="0.8"/>
<path d="M1344 189l21 -21l21 21l-21 21z" fill="#388346" stroke="#388346" stroke-width="0.8"/>
<path d="M-63 210l21 -21l21 21l-21 21z" fill="#388848" stroke="#388848" stroke-width="0.8"/>
<path d="M-21 210l21 -21l21 21l-21 21z" fill="#3e8a4c" stroke="#3e8a4c" stroke-width="0.8"/>
<path d="M21 210l21 -21l21 21l-21 21z" fill="#417f4b" stroke="#417f4b" stroke-width="0.8"/>
<path d="M63 210l21 -21l21 21l-21 21z" fill="#3f8d4d" stroke="#3f8d4d" stroke-width="0.8"/>
<path d="M105 210l21 -21l21 21l-21 21z" fill="#4e8e57" stroke="#4e8e57" stroke-width="0.8"/>
<path d="M147 210l21 -21l21 21l-21 21z" fill="#3e8149" stroke="#3e8149" stroke-width="0.8"/>
<path d="M189 210l21 -21l21 21l-21 21z" fill="#43894f" stroke="#43894f" stroke-width="0.8"/>
<path d="M231 210l21 -21l21 21l-21 21z" fill="#358845" stroke="#358845" stroke-width="0.8"/>
<path d="M273 210l21 -21l21 21l-21 21z" fill="#377b45" stroke="#377b45" stroke-width="0.8"/>
<path d="M315 210l21 -21l21 21l-21 21z" fill="#308542" stroke="#308542" stroke-width="0.8"/>
<path d="M357 210l21 -21l21 21l-21 21z" fill="#368646" stroke="#368646" stroke-width="0.8"/>
<path d="M399 210l21 -21l21 21l-21 21z" fill="#3f8b4d" stroke="#3f8b4d" stroke-width="0.8"/>
<path d="M441 210l21 -21l21 21l-21 21z" fill="#458f52" stroke="#458f52" stroke-width="0.8"/>
<path d="M483 210l21 -21l21 21l-21 21z" fill="#5b9260" stroke="#5b9260" stroke-width="0.8"/>
<path d="M525 210l21 -21l21 21l-21 21z" fill="#6d9e6f" stroke="#6d9e6f" stroke-width="0.8"/>
<path d="M567 210l21 -21l21 21l-21 21z" fill="#669267" stroke="#669267" stroke-width="0.8"/>
<path d="M609 210l21 -21l21 21l-21 21z" fill="#598b5d" stroke="#598b5d" stroke-width="0.8"/>
<path d="M651 210l21 -21l21 21l-21 21z" fill="#5a8d5f" stroke="#5a8d5f" stroke-width="0.8"/>
<path d="M693 210l21 -21l21 21l-21 21z" fill="#4a8552" stroke="#4a8552" stroke-width="0.8"/>
<path d="M735 210l21 -21l21 21l-21 21z" fill="#487c4e" stroke="#487c4e" stroke-width="0.8"/>
<path d="M777 210l21 -21l21 21l-21 21z" fill="#518155" stroke="#518155" stroke-width="0.8"/>
<path d="M819 210l21 -21l21 21l-21 21z" fill="#69976a" stroke="#69976a" stroke-width="0.8"/>
<path d="M861 210l21 -21l21 21l-21 21z" fill="#628e64" stroke="#628e64" stroke-width="0.8"/>
<path d="M903 210l21 -21l21 21l-21 21z" fill="#638f64" stroke="#638f64" stroke-width="0.8"/>
<path d="M945 210l21 -21l21 21l-21 21z" fill="#68966a" stroke="#68966a" stroke-width="0.8"/>
<path d="M987 210l21 -21l21 21l-21 21z" fill="#599360" stroke="#599360" stroke-width="0.8"/>
<path d="M1029 210l21 -21l21 21l-21 21z" fill="#4e8e57" stroke="#4e8e57" stroke-width="0.8"/>
<path d="M1071 210l21 -21l21 21l-21 21z" fill="#3f814a" stroke="#3f814a" stroke-width="0.8"/>
<path d="M1113 210l21 -21l21 21l-21 21z" fill="#467d4d" stroke="#467d4d" stroke-width="0.8"/>
<path d="M1155 210l21 -21l21 21l-21 21z" fill="#3d8249" stroke="#3d8249" stroke-width="0.8"/>
<path d="M1197 210l21 -21l21 21l-21 21z" fill="#4b8051" stroke="#4b8051" stroke-width="0.8"/>
<path d="M1239 210l21 -21l21 21l-21 21z" fill="#3c8349" stroke="#3c8349" stroke-width="0.8"/>
<path d="M1281 210l21 -21l21 21l-21 21z" fill="#43894f" stroke="#43894f" stroke-width="0.8"/>
<path d="M1323 210l21 -21l21 21l-21 21z" fill="#427a4a" stroke="#427a4a" stroke-width="0.8"/>
<path d="M-42 231l21 -21l21 21l-21 21z" fill="#469052" stroke="#469052" stroke-width="0.8"/>
<path d="M0 231l21 -21l21 21l-21 21z" fill="#3a8548" stroke="#3a8548" stroke-width="0.8"/>
<path d="M42 231l21 -21l21 21l-21 21z" fill="#488b52" stroke="#488b52" stroke-width="0.8"/>
<path d="M84 231l21 -21l21 21l-21 21z" fill="#3a8a4a" stroke="#3a8a4a" stroke-width="0.8"/>
<path d="M126 231l21 -21l21 21l-21 21z" fill="#498a53" stroke="#498a53" stroke-width="0.8"/>
<path d="M168 231l21 -21l21 21l-21 21z" fill="#348845" stroke="#348845" stroke-width="0.8"/>
<path d="M210 231l21 -21l21 21l-21 21z" fill="#378947" stroke="#378947" stroke-width="0.8"/>
<path d="M252 231l21 -21l21 21l-21 21z" fill="#308542" stroke="#308542" stroke-width="0.8"/>
<path d="M294 231l21 -21l21 21l-21 21z" fill="#318743" stroke="#318743" stroke-width="0.8"/>
<path d="M336 231l21 -21l21 21l-21 21z" fill="#317f42" stroke="#317f42" stroke-width="0.8"/>
<path d="M378 231l21 -21l21 21l-21 21z" fill="#308542" stroke="#308542" stroke-width="0.8"/>
<path d="M420 231l21 -21l21 21l-21 21z" fill="#42864d" stroke="#42864d" stroke-width="0.8"/>
<path d="M462 231l21 -21l21 21l-21 21z" fill="#5f9263" stroke="#5f9263" stroke-width="0.8"/>
<path d="M504 231l21 -21l21 21l-21 21z" fill="#55935e" stroke="#55935e" stroke-width="0.8"/>
<path d="M546 231l21 -21l21 21l-21 21z" fill="#58885c" stroke="#58885c" stroke-width="0.8"/>
<path d="M588 231l21 -21l21 21l-21 21z" fill="#578f5d" stroke="#578f5d" stroke-width="0.8"/>
<path d="M630 231l21 -21l21 21l-21 21z" fill="#53915b" stroke="#53915b" stroke-width="0.8"/>
<path d="M672 231l21 -21l21 21l-21 21z" fill="#508656" stroke="#508656" stroke-width="0.8"/>
<path d="M714 231l21 -21l21 21l-21 21z" fill="#45774c" stroke="#45774c" stroke-width="0.8"/>
<path d="M756 231l21 -21l21 21l-21 21z" fill="#4a8a53" stroke="#4a8a53" stroke-width="0.8"/>
<path d="M798 231l21 -21l21 21l-21 21z" fill="#5c8a5f" stroke="#5c8a5f" stroke-width="0.8"/>
<path d="M840 231l21 -21l21 21l-21 21z" fill="#638f64" stroke="#638f64" stroke-width="0.8"/>
<path d="M882 231l21 -21l21 21l-21 21z" fill="#6b976c" stroke="#6b976c" stroke-width="0.8"/>
<path d="M924 231l21 -21l21 21l-21 21z" fill="#669568" stroke="#669568" stroke-width="0.8"/>
<path d="M966 231l21 -21l21 21l-21 21z" fill="#5d9262" stroke="#5d9262" stroke-width="0.8"/>
<path d="M1008 231l21 -21l21 21l-21 21z" fill="#58865b" stroke="#58865b" stroke-width="0.8"/>
<path d="M1050 231l21 -21l21 21l-21 21z" fill="#4c8754" stroke="#4c8754" stroke-width="0.8"/>
<path d="M1092 231l21 -21l21 21l-21 21z" fill="#3b7f47" stroke="#3b7f47" stroke-width="0.8"/>
<path d="M1134 231l21 -21l21 21l-21 21z" fill="#497f50" stroke="#497f50" stroke-width="0.8"/>
<path d="M1176 231l21 -21l21 21l-21 21z" fill="#45814e" stroke="#45814e" stroke-width="0.8"/>
<path d="M1218 231l21 -21l21 21l-21 21z" fill="#457e4d" stroke="#457e4d" stroke-width="0.8"/>
<path d="M1260 231l21 -21l21 21l-21 21z" fill="#348344" stroke="#348344" stroke-width="0.8"/>
<path d="M1302 231l21 -21l21 21l-21 21z" fill="#3d884b" stroke="#3d884b" stroke-width="0.8"/>
<path d="M1344 231l21 -21l21 21l-21 21z" fill="#308542" stroke="#308542" stroke-width="0.8"/>
<path d="M-63 252l21 -21l21 21l-21 21z" fill="#358345" stroke="#358345" stroke-width="0.8"/>
<path d="M-21 252l21 -21l21 21l-21 21z" fill="#358846" stroke="#358846" stroke-width="0.8"/>
<path d="M21 252l21 -21l21 21l-21 21z" fill="#3c894a" stroke="#3c894a" stroke-width="0.8"/>
<path d="M63 252l21 -21l21 21l-21 21z" fill="#388346" stroke="#388346" stroke-width="0.8"/>
<path d="M105 252l21 -21l21 21l-21 21z" fill="#3b8b4b" stroke="#3b8b4b" stroke-width="0.8"/>
<path d="M147 252l21 -21l21 21l-21 21z" fill="#4e8d57" stroke="#4e8d57" stroke-width="0.8"/>
<path d="M189 252l21 -21l21 21l-21 21z" fill="#388747" stroke="#388747" stroke-width="0.8"/>
<path d="M231 252l21 -21l21 21l-21 21z" fill="#407e4a" stroke="#407e4a" stroke-width="0.8"/>
<path d="M273 252l21 -21l21 21l-21 21z" fill="#398046" stroke="#398046" stroke-width="0.8"/>
<path d="M315 252l21 -21l21 21l-21 21z" fill="#377e44" stroke="#377e44" stroke-width="0.8"/>
<path d="M357 252l21 -21l21 21l-21 21z" fill="#3d8c4c" stroke="#3d8c4c" stroke-width="0.8"/>
<path d="M399 252l21 -21l21 21l-21 21z" fill="#378145" stroke="#378145" stroke-width="0.8"/>
<path d="M441 252l21 -21l21 21l-21 21z" fill="#3b8a49" stroke="#3b8a49" stroke-width="0.8"/>
<path d="M483 252l21 -21l21 21l-21 21z" fill="#639a68" stroke="#639a68" stroke-width="0.8"/>
<path d="M525 252l21 -21l21 21l-21 21z" fill="#548c5a" stroke="#548c5a" stroke-width="0.8"/>
<path d="M567 252l21 -21l21 21l-21 21z" fill="#578a5b" stroke="#578a5b" stroke-width="0.8"/>
<path d="M609 252l21 -21l21 21l-21 21z" fill="#558d5c" stroke="#558d5c" stroke-width="0.8"/>
<path d="M651 252l21 -21l21 21l-21 21z" fill="#5c8f60" stroke="#5c8f60" stroke-width="0.8"/>
<path d="M693 252l21 -21l21 21l-21 21z" fill="#398247" stroke="#398247" stroke-width="0.8"/>
<path d="M735 252l21 -21l21 21l-21 21z" fill="#58865b" stroke="#58865b" stroke-width="0.8"/>
<path d="M777 252l21 -21l21 21l-21 21z" fill="#508054" stroke="#508054" stroke-width="0.8"/>
<path d="M819 252l21 -21l21 21l-21 21z" fill="#5e8b61" stroke="#5e8b61" stroke-width="0.8"/>
<path d="M861 252l21 -21l21 21l-21 21z" fill="#4d8353" stroke="#4d8353" stroke-width="0.8"/>
<path d="M903 252l21 -21l21 21l-21 21z" fill="#659166" stroke="#659166" stroke-width="0.8"/>
<path d="M945 252l21 -21l21 21l-21 21z" fill="#55945d" stroke="#55945d" stroke-width="0.8"/>
<path d="M987 252l21 -21l21 21l-21 21z" fill="#56885b" stroke="#56885b" stroke-width="0.8"/>
<path d="M1029 252l21 -21l21 21l-21 21z" fill="#59935f" stroke="#59935f" stroke-width="0.8"/>
<path d="M1071 252l21 -21l21 21l-21 21z" fill="#44814c" stroke="#44814c" stroke-width="0.8"/>
<path d="M1113 252l21 -21l21 21l-21 21z" fill="#468650" stroke="#468650" stroke-width="0.8"/>
<path d="M1155 252l21 -21l21 21l-21 21z" fill="#44874f" stroke="#44874f" stroke-width="0.8"/>
<path d="M1197 252l21 -21l21 21l-21 21z" fill="#3c8349" stroke="#3c8349" stroke-width="0.8"/>
<path d="M1239 252l21 -21l21 21l-21 21z" fill="#368546" stroke="#368546" stroke-width="0.8"/>
<path d="M1281 252l21 -21l21 21l-21 21z" fill="#3c7a47" stroke="#3c7a47" stroke-width="0.8"/>
<path d="M1323 252l21 -21l21 21l-21 21z" fill="#338744" stroke="#338744" stroke-width="0.8"/>
<path d="M-42 273l21 -21l21 21l-21 21z" fill="#3a8448" stroke="#3a8448" stroke-width="0.8"/>
<path d="M0 273l21 -21l21 21l-21 21z" fill="#318242" stroke="#318242" stroke-width="0.8"/>
<path d="M42 273l21 -21l21 21l-21 21z" fill="#3e894c" stroke="#3e894c" stroke-width="0.8"/>
<path d="M84 273l21 -21l21 21l-21 21z" fill="#378947" stroke="#378947" stroke-width="0.8"/>
<path d="M126 273l21 -21l21 21l-21 21z" fill="#4b9056" stroke="#4b9056" stroke-width="0.8"/>
<path d="M168 273l21 -21l21 21l-21 21z" fill="#3c8b4b" stroke="#3c8b4b" stroke-width="0.8"/>
<path d="M210 273l21 -21l21 21l-21 21z" fill="#398a49" stroke="#398a49" stroke-width="0.8"/>
<path d="M252 273l21 -21l21 21l-21 21z" fill="#318242" stroke="#318242" stroke-width="0.8"/>
<path d="M294 273l21 -21l21 21l-21 21z" fill="#318142" stroke="#318142" stroke-width="0.8"/>
<path d="M336 273l21 -21l21 21l-21 21z" fill="#367a44" stroke="#367a44" stroke-width="0.8"/>
<path d="M378 273l21 -21l21 21l-21 21z" fill="#377944" stroke="#377944" stroke-width="0.8"/>
<path d="M420 273l21 -21l21 21l-21 21z" fill="#367f44" stroke="#367f44" stroke-width="0.8"/>
<path d="M462 273l21 -21l21 21l-21 21z" fill="#4f8f58" stroke="#4f8f58" stroke-width="0.8"/>
<path d="M504 273l21 -21l21 21l-21 21z" fill="#4b8d55" stroke="#4b8d55" stroke-width="0.8"/>
<path d="M546 273l21 -21l21 21l-21 21z" fill="#54965d" stroke="#54965d" stroke-width="0.8"/>
<path d="M588 273l21 -21l21 21l-21 21z" fill="#558f5b" stroke="#558f5b" stroke-width="0.8"/>
<path d="M630 273l21 -21l21 21l-21 21z" fill="#528b58" stroke="#528b58" stroke-width="0.8"/>
<path d="M672 273l21 -21l21 21l-21 21z" fill="#588a5c" stroke="#588a5c" stroke-width="0.8"/>
<path d="M714 273l21 -21l21 21l-21 21z" fill="#56885b" stroke="#56885b" stroke-width="0.8"/>
<path d="M756 273l21 -21l21 21l-21 21z" fill="#4e8454" stroke="#4e8454" stroke-width="0.8"/>
<path d="M798 273l21 -21l21 21l-21 21z" fill="#538758" stroke="#538758" stroke-width="0.8"/>
<path d="M840 273l21 -21l21 21l-21 21z" fill="#508d58" stroke="#508d58" stroke-width="0.8"/>
<path d="M882 273l21 -21l21 21l-21 21z" fill="#57885b" stroke="#57885b" stroke-width="0.8"/>
<path d="M924 273l21 -21l21 21l-21 21z" fill="#4f8555" stroke="#4f8555" stroke-width="0.8"/>
<path d="M966 273l21 -21l21 21l-21 21z" fill="#548a5a" stroke="#548a5a" stroke-width="0.8"/>
<path d="M1008 273l21 -21l21 21l-21 21z" fill="#4e9358" stroke="#4e9358" stroke-width="0.8"/>
<path d="M1050 273l21 -21l21 21l-21 21z" fill="#398647" stroke="#398647" stroke-width="0.8"/>
<path d="M1092 273l21 -21l21 21l-21 21z" fill="#538257" stroke="#538257" stroke-width="0.8"/>
<path d="M1134 273l21 -21l21 21l-21 21z" fill="#3e7648" stroke="#3e7648" stroke-width="0.8"/>
<path d="M1176 273l21 -21l21 21l-21 21z" fill="#41834c" stroke="#41834c" stroke-width="0.8"/>
<path d="M1218 273l21 -21l21 21l-21 21z" fill="#358846" stroke="#358846" stroke-width="0.8"/>
<path d="M1260 273l21 -21l21 21l-21 21z" fill="#42864c" stroke="#42864c" stroke-width="0.8"/>
<path d="M1302 273l21 -21l21 21l-21 21z" fill="#318642" stroke="#318642" stroke-width="0.8"/>
<path d="M1344 273l21 -21l21 21l-21 21z" fill="#368946" stroke="#368946" stroke-width="0.8"/>
<path d="M-63 294l21 -21l21 21l-21 21z" fill="#328744" stroke="#328744" stroke-width="0.8"/>
<path d="M-21 294l21 -21l21 21l-21 21z" fill="#327c41" stroke="#327c41" stroke-width="0.8"/>
<path d="M21 294l21 -21l21 21l-21 21z" fill="#3a8648" stroke="#3a8648" stroke-width="0.8"/>
<path d="M63 294l21 -21l21 21l-21 21z" fill="#318542" stroke="#318542" stroke-width="0.8"/>
<path d="M105 294l21 -21l21 21l-21 21z" fill="#418c4e" stroke="#418c4e" stroke-width="0.8"/>
<path d="M147 294l21 -21l21 21l-21 21z" fill="#508c58" stroke="#508c58" stroke-width="0.8"/>
<path d="M189 294l21 -21l21 21l-21 21z" fill="#308642" stroke="#308642" stroke-width="0.8"/>
<path d="M231 294l21 -21l21 21l-21 21z" fill="#44874f" stroke="#44874f" stroke-width="0.8"/>
<path d="M273 294l21 -21l21 21l-21 21z" fill="#3c8749" stroke="#3c8749" stroke-width="0.8"/>
<path d="M315 294l21 -21l21 21l-21 21z" fill="#317f42" stroke="#317f42" stroke-width="0.8"/>
<path d="M357 294l21 -21l21 21l-21 21z" fill="#308442" stroke="#308442" stroke-width="0.8"/>
<path d="M399 294l21 -21l21 21l-21 21z" fill="#327941" stroke="#327941" stroke-width="0.8"/>
<path d="M441 294l21 -21l21 21l-21 21z" fill="#548c5b" stroke="#548c5b" stroke-width="0.8"/>
<path d="M483 294l21 -21l21 21l-21 21z" fill="#3a8a49" stroke="#3a8a49" stroke-width="0.8"/>
<path d="M525 294l21 -21l21 21l-21 21z" fill="#4e9258" stroke="#4e9258" stroke-width="0.8"/>
<path d="M567 294l21 -21l21 21l-21 21z" fill="#5e9664" stroke="#5e9664" stroke-width="0.8"/>
<path d="M609 294l21 -21l21 21l-21 21z" fill="#538758" stroke="#538758" stroke-width="0.8"/>
<path d="M651 294l21 -21l21 21l-21 21z" fill="#4d8855" stroke="#4d8855" stroke-width="0.8"/>
<path d="M693 294l21 -21l21 21l-21 21z" fill="#4c8753" stroke="#4c8753" stroke-width="0.8"/>
<path d="M735 294l21 -21l21 21l-21 21z" fill="#4d8855" stroke="#4d8855" stroke-width="0.8"/>
<path d="M777 294l21 -21l21 21l-21 21z" fill="#388546" stroke="#388546" stroke-width="0.8"/>
<path d="M819 294l21 -21l21 21l-21 21z" fill="#498551" stroke="#498551" stroke-width="0.8"/>
<path d="M861 294l21 -21l21 21l-21 21z" fill="#56895b" stroke="#56895b" stroke-width="0.8"/>
<path d="M903 294l21 -21l21 21l-21 21z" fill="#578a5c" stroke="#578a5c" stroke-width="0.8"/>
<path d="M945 294l21 -21l21 21l-21 21z" fill="#44834e" stroke="#44834e" stroke-width="0.8"/>
<path d="M987 294l21 -21l21 21l-21 21z" fill="#407c4a" stroke="#407c4a" stroke-width="0.8"/>
<path d="M1029 294l21 -21l21 21l-21 21z" fill="#4c8353" stroke="#4c8353" stroke-width="0.8"/>
<path d="M1071 294l21 -21l21 21l-21 21z" fill="#40824b" stroke="#40824b" stroke-width="0.8"/>
<path d="M1113 294l21 -21l21 21l-21 21z" fill="#488550" stroke="#488550" stroke-width="0.8"/>
<path d="M1155 294l21 -21l21 21l-21 21z" fill="#488350" stroke="#488350" stroke-width="0.8"/>
<path d="M1197 294l21 -21l21 21l-21 21z" fill="#477f4e" stroke="#477f4e" stroke-width="0.8"/>
<path d="M1239 294l21 -21l21 21l-21 21z" fill="#378046" stroke="#378046" stroke-width="0.8"/>
<path d="M1281 294l21 -21l21 21l-21 21z" fill="#318242" stroke="#318242" stroke-width="0.8"/>
<path d="M1323 294l21 -21l21 21l-21 21z" fill="#4b8753" stroke="#4b8753" stroke-width="0.8"/>
<path d="M-42 315l21 -21l21 21l-21 21z" fill="#348444" stroke="#348444" stroke-width="0.8"/>
<path d="M0 315l21 -21l21 21l-21 21z" fill="#41894d" stroke="#41894d" stroke-width="0.8"/>
<path d="M42 315l21 -21l21 21l-21 21z" fill="#3e8c4c" stroke="#3e8c4c" stroke-width="0.8"/>
<path d="M84 315l21 -21l21 21l-21 21z" fill="#338544" stroke="#338544" stroke-width="0.8"/>
<path d="M126 315l21 -21l21 21l-21 21z" fill="#458f52" stroke="#458f52" stroke-width="0.8"/>
<path d="M168 315l21 -21l21 21l-21 21z" fill="#308642" stroke="#308642" stroke-width="0.8"/>
<path d="M210 315l21 -21l21 21l-21 21z" fill="#308542" stroke="#308542" stroke-width="0.8"/>
<path d="M252 315l21 -21l21 21l-21 21z" fill="#3d8c4c" stroke="#3d8c4c" stroke-width="0.8"/>
<path d="M294 315l21 -21l21 21l-21 21z" fill="#3e7e49" stroke="#3e7e49" stroke-width="0.8"/>
<path d="M336 315l21 -21l21 21l-21 21z" fill="#358545" stroke="#358545" stroke-width="0.8"/>
<path d="M378 315l21 -21l21 21l-21 21z" fill="#357c43" stroke="#357c43" stroke-width="0.8"/>
<path d="M420 315l21 -21l21 21l-21 21z" fill="#3f874c" stroke="#3f874c" stroke-width="0.8"/>
<path d="M462 315l21 -21l21 21l-21 21z" fill="#448b50" stroke="#448b50" stroke-width="0.8"/>
<path d="M504 315l21 -21l21 21l-21 21z" fill="#488d53" stroke="#488d53" stroke-width="0.8"/>
<path d="M546 315l21 -21l21 21l-21 21z" fill="#568d5c" stroke="#568d5c" stroke-width="0.8"/>
<path d="M588 315l21 -21l21 21l-21 21z" fill="#44874f" stroke="#44874f" stroke-width="0.8"/>
<path d="M630 315l21 -21l21 21l-21 21z" fill="#4d8e57" stroke="#4d8e57" stroke-width="0.8"/>
<path d="M672 315l21 -21l21 21l-21 21z" fill="#4f8555" stroke="#4f8555" stroke-width="0.8"/>
<path d="M714 315l21 -21l21 21l-21 21z" fill="#5d8e61" stroke="#5d8e61" stroke-width="0.8"/>
<path d="M756 315l21 -21l21 21l-21 21z" fill="#498c54" stroke="#498c54" stroke-width="0.8"/>
<path d="M798 315l21 -21l21 21l-21 21z" fill="#619164" stroke="#619164" stroke-width="0.8"/>
<path d="M840 315l21 -21l21 21l-21 21z" fill="#4d8a55" stroke="#4d8a55" stroke-width="0.8"/>
<path d="M882 315l21 -21l21 21l-21 21z" fill="#498853" stroke="#498853" stroke-width="0.8"/>
<path d="M924 315l21 -21l21 21l-21 21z" fill="#508455" stroke="#508455" stroke-width="0.8"/>
<path d="M966 315l21 -21l21 21l-21 21z" fill="#4a8351" stroke="#4a8351" stroke-width="0.8"/>
<path d="M1008 315l21 -21l21 21l-21 21z" fill="#497b4e" stroke="#497b4e" stroke-width="0.8"/>
<path d="M1050 315l21 -21l21 21l-21 21z" fill="#338343" stroke="#338343" stroke-width="0.8"/>
<path d="M1092 315l21 -21l21 21l-21 21z" fill="#398247" stroke="#398247" stroke-width="0.8"/>
<path d="M1134 315l21 -21l21 21l-21 21z" fill="#3b7e47" stroke="#3b7e47" stroke-width="0.8"/>
<path d="M1176 315l21 -21l21 21l-21 21z" fill="#388547" stroke="#388547" stroke-width="0.8"/>
<path d="M1218 315l21 -21l21 21l-21 21z" fill="#447e4c" stroke="#447e4c" stroke-width="0.8"/>
<path d="M1260 315l21 -21l21 21l-21 21z" fill="#3c8749" stroke="#3c8749" stroke-width="0.8"/>
<path d="M1302 315l21 -21l21 21l-21 21z" fill="#348645" stroke="#348645" stroke-width="0.8"/>
<path d="M1344 315l21 -21l21 21l-21 21z" fill="#378346" stroke="#378346" stroke-width="0.8"/>
<path d="M-63 336l21 -21l21 21l-21 21z" fill="#308642" stroke="#308642" stroke-width="0.8"/>
<path d="M-21 336l21 -21l21 21l-21 21z" fill="#308642" stroke="#308642" stroke-width="0.8"/>
<path d="M21 336l21 -21l21 21l-21 21z" fill="#378947" stroke="#378947" stroke-width="0.8"/>
<path d="M63 336l21 -21l21 21l-21 21z" fill="#42824d" stroke="#42824d" stroke-width="0.8"/>
<path d="M105 336l21 -21l21 21l-21 21z" fill="#308342" stroke="#308342" stroke-width="0.8"/>
<path d="M147 336l21 -21l21 21l-21 21z" fill="#318242" stroke="#318242" stroke-width="0.8"/>
<path d="M189 336l21 -21l21 21l-21 21z" fill="#347e42" stroke="#347e42" stroke-width="0.8"/>
<path d="M231 336l21 -21l21 21l-21 21z" fill="#308342" stroke="#308342" stroke-width="0.8"/>
<path d="M273 336l21 -21l21 21l-21 21z" fill="#357c43" stroke="#357c43" stroke-width="0.8"/>
<path d="M315 336l21 -21l21 21l-21 21z" fill="#317f42" stroke="#317f42" stroke-width="0.8"/>
<path d="M357 336l21 -21l21 21l-21 21z" fill="#3b7f47" stroke="#3b7f47" stroke-width="0.8"/>
<path d="M399 336l21 -21l21 21l-21 21z" fill="#41874d" stroke="#41874d" stroke-width="0.8"/>
<path d="M441 336l21 -21l21 21l-21 21z" fill="#358444" stroke="#358444" stroke-width="0.8"/>
<path d="M483 336l21 -21l21 21l-21 21z" fill="#518c59" stroke="#518c59" stroke-width="0.8"/>
<path d="M525 336l21 -21l21 21l-21 21z" fill="#44874f" stroke="#44874f" stroke-width="0.8"/>
<path d="M567 336l21 -21l21 21l-21 21z" fill="#4c8d56" stroke="#4c8d56" stroke-width="0.8"/>
<path d="M609 336l21 -21l21 21l-21 21z" fill="#3f8b4d" stroke="#3f8b4d" stroke-width="0.8"/>
<path d="M651 336l21 -21l21 21l-21 21z" fill="#3c894a" stroke="#3c894a" stroke-width="0.8"/>
<path d="M693 336l21 -21l21 21l-21 21z" fill="#558b5b" stroke="#558b5b" stroke-width="0.8"/>
<path d="M735 336l21 -21l21 21l-21 21z" fill="#4c7d51" stroke="#4c7d51" stroke-width="0.8"/>
<path d="M777 336l21 -21l21 21l-21 21z" fill="#4c8f56" stroke="#4c8f56" stroke-width="0.8"/>
<path d="M819 336l21 -21l21 21l-21 21z" fill="#618f63" stroke="#618f63" stroke-width="0.8"/>
<path d="M861 336l21 -21l21 21l-21 21z" fill="#57925e" stroke="#57925e" stroke-width="0.8"/>
<path d="M903 336l21 -21l21 21l-21 21z" fill="#518556" stroke="#518556" stroke-width="0.8"/>
<path d="M945 336l21 -21l21 21l-21 21z" fill="#498351" stroke="#498351" stroke-width="0.8"/>
<path d="M987 336l21 -21l21 21l-21 21z" fill="#428a4f" stroke="#428a4f" stroke-width="0.8"/>
<path d="M1029 336l21 -21l21 21l-21 21z" fill="#357f44" stroke="#357f44" stroke-width="0.8"/>
<path d="M1071 336l21 -21l21 21l-21 21z" fill="#398147" stroke="#398147" stroke-width="0.8"/>
<path d="M1113 336l21 -21l21 21l-21 21z" fill="#42824c" stroke="#42824c" stroke-width="0.8"/>
<path d="M1155 336l21 -21l21 21l-21 21z" fill="#388346" stroke="#388346" stroke-width="0.8"/>
<path d="M1197 336l21 -21l21 21l-21 21z" fill="#407e4a" stroke="#407e4a" stroke-width="0.8"/>
<path d="M1239 336l21 -21l21 21l-21 21z" fill="#3e864b" stroke="#3e864b" stroke-width="0.8"/>
<path d="M1281 336l21 -21l21 21l-21 21z" fill="#3f7f4a" stroke="#3f7f4a" stroke-width="0.8"/>
<path d="M1323 336l21 -21l21 21l-21 21z" fill="#378046" stroke="#378046" stroke-width="0.8"/>
<path d="M-42 357l21 -21l21 21l-21 21z" fill="#3a8b4a" stroke="#3a8b4a" stroke-width="0.8"/>
<path d="M0 357l21 -21l21 21l-21 21z" fill="#388948" stroke="#388948" stroke-width="0.8"/>
<path d="M42 357l21 -21l21 21l-21 21z" fill="#3b8a4b" stroke="#3b8a4b" stroke-width="0.8"/>
<path d="M84 357l21 -21l21 21l-21 21z" fill="#357e43" stroke="#357e43" stroke-width="0.8"/>
<path d="M126 357l21 -21l21 21l-21 21z" fill="#398147" stroke="#398147" stroke-width="0.8"/>
<path d="M168 357l21 -21l21 21l-21 21z" fill="#308442" stroke="#308442" stroke-width="0.8"/>
<path d="M210 357l21 -21l21 21l-21 21z" fill="#348845" stroke="#348845" stroke-width="0.8"/>
<path d="M252 357l21 -21l21 21l-21 21z" fill="#328743" stroke="#328743" stroke-width="0.8"/>
<path d="M294 357l21 -21l21 21l-21 21z" fill="#348744" stroke="#348744" stroke-width="0.8"/>
<path d="M336 357l21 -21l21 21l-21 21z" fill="#308442" stroke="#308442" stroke-width="0.8"/>
<path d="M378 357l21 -21l21 21l-21 21z" fill="#358645" stroke="#358645" stroke-width="0.8"/>
<path d="M420 357l21 -21l21 21l-21 21z" fill="#347a43" stroke="#347a43" stroke-width="0.8"/>
<path d="M462 357l21 -21l21 21l-21 21z" fill="#3f844b" stroke="#3f844b" stroke-width="0.8"/>
<path d="M504 357l21 -21l21 21l-21 21z" fill="#407f4a" stroke="#407f4a" stroke-width="0.8"/>
<path d="M546 357l21 -21l21 21l-21 21z" fill="#4f8355" stroke="#4f8355" stroke-width="0.8"/>
<path d="M588 357l21 -21l21 21l-21 21z" fill="#488751" stroke="#488751" stroke-width="0.8"/>
<path d="M630 357l21 -21l21 21l-21 21z" fill="#3c894b" stroke="#3c894b" stroke-width="0.8"/>
<path d="M672 357l21 -21l21 21l-21 21z" fill="#538959" stroke="#538959" stroke-width="0.8"/>
<path d="M714 357l21 -21l21 21l-21 21z" fill="#578a5c" stroke="#578a5c" stroke-width="0.8"/>
<path d="M756 357l21 -21l21 21l-21 21z" fill="#3b8749" stroke="#3b8749" stroke-width="0.8"/>
<path d="M798 357l21 -21l21 21l-21 21z" fill="#43854e" stroke="#43854e" stroke-width="0.8"/>
<path d="M840 357l21 -21l21 21l-21 21z" fill="#498050" stroke="#498050" stroke-width="0.8"/>
<path d="M882 357l21 -21l21 21l-21 21z" fill="#498651" stroke="#498651" stroke-width="0.8"/>
<path d="M924 357l21 -21l21 21l-21 21z" fill="#45834e" stroke="#45834e" stroke-width="0.8"/>
<path d="M966 357l21 -21l21 21l-21 21z" fill="#488150" stroke="#488150" stroke-width="0.8"/>
<path d="M1008 357l21 -21l21 21l-21 21z" fill="#42884e" stroke="#42884e" stroke-width="0.8"/>
<path d="M1050 357l21 -21l21 21l-21 21z" fill="#43794b" stroke="#43794b" stroke-width="0.8"/>
<path d="M1092 357l21 -21l21 21l-21 21z" fill="#44804d" stroke="#44804d" stroke-width="0.8"/>
<path d="M1134 357l21 -21l21 21l-21 21z" fill="#387c46" stroke="#387c46" stroke-width="0.8"/>
<path d="M1176 357l21 -21l21 21l-21 21z" fill="#308642" stroke="#308642" stroke-width="0.8"/>
<path d="M1218 357l21 -21l21 21l-21 21z" fill="#3d7f48" stroke="#3d7f48" stroke-width="0.8"/>
<path d="M1260 357l21 -21l21 21l-21 21z" fill="#488550" stroke="#488550" stroke-width="0.8"/>
<path d="M1302 357l21 -21l21 21l-21 21z" fill="#318242" stroke="#318242" stroke-width="0.8"/>
<path d="M1344 357l21 -21l21 21l-21 21z" fill="#3c8549" stroke="#3c8549" stroke-width="0.8"/>
<path d="M-63 378l21 -21l21 21l-21 21z" fill="#328743" stroke="#328743" stroke-width="0.8"/>
<path d="M-21 378l21 -21l21 21l-21 21z" fill="#3c874a" stroke="#3c874a" stroke-width="0.8"/>
<path d="M21 378l21 -21l21 21l-21 21z" fill="#358846" stroke="#358846" stroke-width="0.8"/>
<path d="M63 378l21 -21l21 21l-21 21z" fill="#388648" stroke="#388648" stroke-width="0.8"/>
<path d="M105 378l21 -21l21 21l-21 21z" fill="#308442" stroke="#308442" stroke-width="0.8"/>
<path d="M147 378l21 -21l21 21l-21 21z" fill="#378747" stroke="#378747" stroke-width="0.8"/>
<path d="M189 378l21 -21l21 21l-21 21z" fill="#378546" stroke="#378546" stroke-width="0.8"/>
<path d="M231 378l21 -21l21 21l-21 21z" fill="#308342" stroke="#308342" stroke-width="0.8"/>
<path d="M273 378l21 -21l21 21l-21 21z" fill="#348244" stroke="#348244" stroke-width="0.8"/>
<path d="M315 378l21 -21l21 21l-21 21z" fill="#3b8b4a" stroke="#3b8b4a" stroke-width="0.8"/>
<path d="M357 378l21 -21l21 21l-21 21z" fill="#478851" stroke="#478851" stroke-width="0.8"/>
<path d="M399 378l21 -21l21 21l-21 21z" fill="#388547" stroke="#388547" stroke-width="0.8"/>
<path d="M441 378l21 -21l21 21l-21 21z" fill="#408b4e" stroke="#408b4e" stroke-width="0.8"/>
<path d="M483 378l21 -21l21 21l-21 21z" fill="#328743" stroke="#328743" stroke-width="0.8"/>
<path d="M525 378l21 -21l21 21l-21 21z" fill="#478651" stroke="#478651" stroke-width="0.8"/>
<path d="M567 378l21 -21l21 21l-21 21z" fill="#468951" stroke="#468951" stroke-width="0.8"/>
<path d="M609 378l21 -21l21 21l-21 21z" fill="#41864c" stroke="#41864c" stroke-width="0.8"/>
<path d="M651 378l21 -21l21 21l-21 21z" fill="#417d4a" stroke="#417d4a" stroke-width="0.8"/>
<path d="M693 378l21 -21l21 21l-21 21z" fill="#388547" stroke="#388547" stroke-width="0.8"/>
<path d="M735 378l21 -21l21 21l-21 21z" fill="#398347" stroke="#398347" stroke-width="0.8"/>
<path d="M777 378l21 -21l21 21l-21 21z" fill="#538758" stroke="#538758" stroke-width="0.8"/>
<path d="M819 378l21 -21l21 21l-21 21z" fill="#457d4d" stroke="#457d4d" stroke-width="0.8"/>
<path d="M861 378l21 -21l21 21l-21 21z" fill="#498952" stroke="#498952" stroke-width="0.8"/>
<path d="M903 378l21 -21l21 21l-21 21z" fill="#3a7e46" stroke="#3a7e46" stroke-width="0.8"/>
<path d="M945 378l21 -21l21 21l-21 21z" fill="#417e4b" stroke="#417e4b" stroke-width="0.8"/>
<path d="M987 378l21 -21l21 21l-21 21z" fill="#308542" stroke="#308542" stroke-width="0.8"/>
<path d="M1029 378l21 -21l21 21l-21 21z" fill="#348645" stroke="#348645" stroke-width="0.8"/>
<path d="M1071 378l21 -21l21 21l-21 21z" fill="#3a8949" stroke="#3a8949" stroke-width="0.8"/>
<path d="M1113 378l21 -21l21 21l-21 21z" fill="#348244" stroke="#348244" stroke-width="0.8"/>
<path d="M1155 378l21 -21l21 21l-21 21z" fill="#417d4a" stroke="#417d4a" stroke-width="0.8"/>
<path d="M1197 378l21 -21l21 21l-21 21z" fill="#42864d" stroke="#42864d" stroke-width="0.8"/>
<path d="M1239 378l21 -21l21 21l-21 21z" fill="#338744" stroke="#338744" stroke-width="0.8"/>
<path d="M1281 378l21 -21l21 21l-21 21z" fill="#308442" stroke="#308442" stroke-width="0.8"/>
<path d="M1323 378l21 -21l21 21l-21 21z" fill="#358044" stroke="#358044" stroke-width="0.8"/>
</g>
<g transform="translate(0,113.6) scale(1,1.308) translate(0,-113.6)"><text x="82.0" y="113.6" font-size="48" fill="#fdfdf3" textLength="386.0" lengthAdjust="spacingAndGlyphs" letter-spacing="8">MARKDOWN</text></g>
<g transform="translate(0,192) scale(1,1.308) translate(0,-192)"><text x="82.0" y="192.0" font-size="48" fill="#fdfdf3" textLength="258.0" lengthAdjust="spacingAndGlyphs" letter-spacing="8">SYNTAX</text></g>
<g transform="translate(1158.5,68.19999999999999)"><path fill="#ffffff" fill-opacity="0.42" fill-rule="evenodd" d="M8.5 0h85.7a8.5 8.5 0 0 1 8.5 8.5v47.7a8.5 8.5 0 0 1 -8.5 8.5h-85.7a8.5 8.5 0 0 1 -8.5 -8.5v-47.7a8.5 8.5 0 0 1 8.5 -8.5z M12.7 13v38.8h12.9v-19.1l9.6 11.8l10.1 -11.8v19.1h12.3v-38.8h-12.6l-9.8 12.6l-9.6 -12.6z M70.6 13v19.7h-9l15.5 21.9l15.7 -21.9h-9.3v-19.7z"/></g>
<rect x="0" y="364" width="1329" height="184" fill="#6eb962"/>
<text x="79.0" y="426.0" font-size="27" fill="#f6f9ef" textLength="1131" lengthAdjust="spacingAndGlyphs"><tspan font-weight="bold">Markdown</tspan> is a way to style text on the web. You control the display of the document; formatting words as</text>
<text x="79.0" y="466.0" font-size="27" fill="#f6f9ef" textLength="1153.0" lengthAdjust="spacingAndGlyphs">bold or italic, adding images, and creating lists are just a few of the things we can do with Markdown. Mostly,</text>
<text x="79.0" y="505.0" font-size="27" fill="#f6f9ef" textLength="938.0" lengthAdjust="spacingAndGlyphs">Markdown is just regular text with a few non-alphabetic characters thrown in, like # or *.</text>
<text x="80.0" y="627.0" font-size="26.5" fill="#6cb862" textLength="131.0" lengthAdjust="spacingAndGlyphs" letter-spacing="5" stroke="#6cb862" stroke-width="0.6">HEADERS</text>
<rect x="79.5" y="646.5" width="348" height="99" fill="#f8f8f1" stroke="#e7e8e0" stroke-width="2"/>
<text x="92.0" y="677.5" font-size="15.2" fill="#3a3a3a" font-family="'Liberation Mono', monospace"># This is an &lt;h1&gt; tag</text>
<text x="92.0" y="701.5" font-size="15.2" fill="#3a3a3a" font-family="'Liberation Mono', monospace">## This is an &lt;h2&gt; tag</text>
<text x="92.0" y="725.5" font-size="15.2" fill="#3a3a3a" font-family="'Liberation Mono', monospace">###### This is an &lt;h6&gt; tag</text>
<text x="79.8" y="829.0" font-size="26.5" fill="#6cb862" textLength="144.9" lengthAdjust="spacingAndGlyphs" letter-spacing="5" stroke="#6cb862" stroke-width="0.6">EMPHASIS</text>
<rect x="78.5" y="848.5" width="349" height="214" fill="#f8f8f1" stroke="#e7e8e0" stroke-width="2"/>
<text x="92.0" y="880.0" font-size="15.2" fill="#3a3a3a" font-family="'Liberation Mono', monospace">*This text will be italic*</text>
<text x="92.0" y="904.0" font-size="15.2" fill="#3a3a3a" font-family="'Liberation Mono', monospace">_This will also be italic_</text>
<text x="92.0" y="952.0" font-size="15.2" fill="#3a3a3a" font-family="'Liberation Mono', monospace">**This text will be bold**</text>
<text x="92.0" y="976.0" font-size="15.2" fill="#3a3a3a" font-family="'Liberation Mono', monospace">__This will also be bold__</text>
<text x="92.0" y="1024.0" font-size="15.2" fill="#3a3a3a" font-family="'Liberation Mono', monospace">*You **can** combine them*</text>
<text x="77.6" y="1134.0" font-size="26.5" fill="#6cb862" textLength="205.4" lengthAdjust="spacingAndGlyphs" letter-spacing="5" stroke="#6cb862" stroke-width="0.6">BLOCKQUOTES</text>
<rect x="77.5" y="1153.5" width="351" height="263" fill="#ffffff" stroke="#e7e8e0" stroke-width="2"/>
<rect x="78" y="1154.4" width="350" height="127" fill="#f8f8f1"/>
<rect x="78" y="1280.5" width="350" height="2" fill="#e7e8e0"/>
<text x="93.0" y="1185.6" font-size="15.2" fill="#3a3a3a" font-family="'Liberation Mono', monospace">As Grace Hopper said:</text>
<text x="93.0" y="1233.0" font-size="15.2" fill="#3a3a3a" font-family="'Liberation Mono', monospace">&gt; I've always been more interested</text>
<text x="93.0" y="1257.0" font-size="15.2" fill="#3a3a3a" font-family="'Liberation Mono', monospace">&gt; in the future than in the past.</text>
<text x="93.0" y="1316.5" font-size="18.5" fill="#7b7b7b" textLength="164.0" lengthAdjust="spacingAndGlyphs">As Grace Hopper said:</text>
<rect x="93" y="1351" width="3" height="43" fill="#a5a5a5"/>
<text x="111.0" y="1366.0" font-size="18.5" fill="#a3a3a3" textLength="244.0" lengthAdjust="spacingAndGlyphs">I've always been more interested</text>
<text x="111.0" y="1390.0" font-size="18.5" fill="#a3a3a3" textLength="213.0" lengthAdjust="spacingAndGlyphs">in the future than in the past.</text>
<text x="502.0" y="627.0" font-size="26.5" fill="#6cb862" textLength="80.0" lengthAdjust="spacingAndGlyphs" letter-spacing="5" stroke="#6cb862" stroke-width="0.6">LISTS</text>
<text x="502.0" y="661.0" font-size="21" fill="#4f8a4b" textLength="91.0" lengthAdjust="spacingAndGlyphs">Unordered</text>
<rect x="501.5" y="671.5" width="353" height="135" fill="#f8f8f1" stroke="#e7e8e0" stroke-width="2"/>
<text x="516.7" y="703.0" font-size="15.2" fill="#3a3a3a" font-family="'Liberation Mono', monospace" xml:space="preserve">* Item 1</text>
<text x="516.7" y="727.0" font-size="15.2" fill="#3a3a3a" font-family="'Liberation Mono', monospace" xml:space="preserve">* Item 2</text>
<text x="516.7" y="751.0" font-size="15.2" fill="#3a3a3a" font-family="'Liberation Mono', monospace" xml:space="preserve">  * Item 2a</text>
<text x="516.7" y="775.0" font-size="15.2" fill="#3a3a3a" font-family="'Liberation Mono', monospace" xml:space="preserve">  * Item 2b</text>
<text x="502.4" y="850.0" font-size="21" fill="#4f8a4b" textLength="70.0" lengthAdjust="spacingAndGlyphs">Ordered</text>
<rect x="502.5" y="860.5" width="352" height="155" fill="#f8f8f1" stroke="#e7e8e0" stroke-width="2"/>
<text x="516.7" y="892.0" font-size="15.2" fill="#3a3a3a" font-family="'Liberation Mono', monospace" xml:space="preserve">1. Item 1</text>
<text x="516.7" y="916.0" font-size="15.2" fill="#3a3a3a" font-family="'Liberation Mono', monospace" xml:space="preserve">2. Item 2</text>
<text x="516.7" y="940.0" font-size="15.2" fill="#3a3a3a" font-family="'Liberation Mono', monospace" xml:space="preserve">3. Item 3</text>
<text x="516.7" y="964.0" font-size="15.2" fill="#3a3a3a" font-family="'Liberation Mono', monospace" xml:space="preserve">   * Item 3a</text>
<text x="516.7" y="988.0" font-size="15.2" fill="#3a3a3a" font-family="'Liberation Mono', monospace" xml:space="preserve">   * Item 3b</text>
<text x="915.6" y="627.0" font-size="26.5" fill="#6cb862" textLength="108.8" lengthAdjust="spacingAndGlyphs" letter-spacing="5" stroke="#6cb862" stroke-width="0.6">IMAGES</text>
<rect x="915.5" y="646.5" width="352" height="116" fill="#f8f8f1" stroke="#e7e8e0" stroke-width="2"/>
<text x="930.7" y="678.5" font-size="15.2" fill="#3a3a3a" font-family="'Liberation Mono', monospace">![GitHub Logo](/images/logo.png)</text>
<text x="930.7" y="726.0" font-size="15.2" fill="#3a3a3a" font-family="'Liberation Mono', monospace">Format: ![Alt Text](url)</text>
<text x="915.6" y="823.0" font-size="26.5" fill="#6cb862" textLength="84.2" lengthAdjust="spacingAndGlyphs" letter-spacing="5" stroke="#6cb862" stroke-width="0.6">LINKS</text>
<rect x="915.5" y="842.5" width="352" height="116" fill="#f8f8f1" stroke="#e7e8e0" stroke-width="2"/>
<text x="930.7" y="875.0" font-size="15.2" fill="#3a3a3a" font-family="'Liberation Mono', monospace">http://github.com - automatic!</text>
<text x="930.7" y="922.6" font-size="15.2" fill="#3a3a3a" font-family="'Liberation Mono', monospace">[GitHub](http://github.com)</text>
<text x="502.0" y="1134.9" font-size="26.5" fill="#6cb862" textLength="305.0" lengthAdjust="spacingAndGlyphs" letter-spacing="5" stroke="#6cb862" stroke-width="0.6">BACKSLASH ESCAPES</text>
<text x="502.0" y="1171.0" font-size="22" fill="#457d42" textLength="759.0" lengthAdjust="spacingAndGlyphs">Markdown allows you to use backslash escapes to generate literal characters which</text>
<text x="502.0" y="1199.0" font-size="22" fill="#457d42" textLength="659.0" lengthAdjust="spacingAndGlyphs">would otherwise have special meaning in Markdown’s formatting syntax.</text>
<rect x="502.5" y="1247.5" width="352" height="111" fill="#ffffff" stroke="#e7e8e0" stroke-width="2"/>
<rect x="502.5" y="1248" width="351" height="55" fill="#f8f8f1"/>
<rect x="502.5" y="1302" width="351" height="2" fill="#e7e8e0"/>
<text x="517.6" y="1279.0" font-size="15.2" fill="#3a3a3a" font-family="'Liberation Mono', monospace" font-weight="bold">\*literal asterisks\*</text>
<text x="517.6" y="1336.0" font-size="18.5" fill="#8a8a8a" textLength="132.0" lengthAdjust="spacingAndGlyphs">*literal asterisks*</text>
<text x="915.0" y="1262.0" font-size="20" fill="#457d42" textLength="353.0" lengthAdjust="spacingAndGlyphs">Markdown provides backslash escapes for</text>
<text x="915.0" y="1290.0" font-size="20" fill="#457d42" textLength="207.0" lengthAdjust="spacingAndGlyphs">the following characters:</text>
<text x="914.4" y="1331.6" font-size="20" fill="#457d42">\</text>
<text x="935.0" y="1331.6" font-size="20" fill="#457d42" textLength="79.5" lengthAdjust="spacingAndGlyphs">backslash</text>
<text x="1091.0" y="1331.6" font-size="20" fill="#457d42">()</text>
<text x="1111.0" y="1331.6" font-size="20" fill="#457d42" textLength="99.8" lengthAdjust="spacingAndGlyphs">parentheses</text>
<text x="914.4" y="1359.9" font-size="20" fill="#457d42">`</text>
<text x="935.0" y="1359.9" font-size="20" fill="#457d42" textLength="68.4" lengthAdjust="spacingAndGlyphs">backtick</text>
<text x="1091.0" y="1359.9" font-size="20" fill="#457d42">#</text>
<text x="1111.0" y="1359.9" font-size="20" fill="#457d42" textLength="81.0" lengthAdjust="spacingAndGlyphs">hash mark</text>
<text x="914.4" y="1388.2" font-size="20" fill="#457d42">*</text>
<text x="935.0" y="1388.2" font-size="20" fill="#457d42" textLength="64.3" lengthAdjust="spacingAndGlyphs">asterisk</text>
<text x="1091.0" y="1388.2" font-size="20" fill="#457d42">+</text>
<text x="1111.0" y="1388.2" font-size="20" fill="#457d42" textLength="69.0" lengthAdjust="spacingAndGlyphs">plus sign</text>
<text x="914.4" y="1416.5" font-size="20" fill="#457d42">_</text>
<text x="935.0" y="1416.5" font-size="20" fill="#457d42" textLength="91.0" lengthAdjust="spacingAndGlyphs">underscore</text>
<text x="1091.0" y="1416.5" font-size="20" fill="#457d42">-</text>
<text x="1111.0" y="1416.5" font-size="20" fill="#457d42" textLength="154.0" lengthAdjust="spacingAndGlyphs">minus sign (hyphen)</text>
<text x="914.4" y="1444.8" font-size="20" fill="#457d42">{}</text>
<text x="935.0" y="1444.8" font-size="20" fill="#457d42" textLength="95.6" lengthAdjust="spacingAndGlyphs">curly braces</text>
<text x="1091.0" y="1444.8" font-size="20" fill="#457d42">.</text>
<text x="1111.0" y="1444.8" font-size="20" fill="#457d42" textLength="27.6" lengthAdjust="spacingAndGlyphs">dot</text>
<text x="914.4" y="1473.1" font-size="20" fill="#457d42">[]</text>
<text x="935.0" y="1473.1" font-size="20" fill="#457d42" textLength="128.2" lengthAdjust="spacingAndGlyphs">square brackets</text>
<text x="1091.0" y="1473.1" font-size="20" fill="#457d42">!</text>
<text x="1111.0" y="1473.1" font-size="20" fill="#457d42" textLength="141.0" lengthAdjust="spacingAndGlyphs">exclamation mark</text></g><g id="pg2"><rect x="0" y="0" width="1329" height="1720" fill="#fcfcf3"/>
<g clip-path="url(#hdrclip)">
<rect x="0" y="0" width="1329" height="364" fill="#3a8546"/>
<g transform="translate(1329,0) scale(-1,1)"><path d="M-42 -21l21 -21l21 21l-21 21z" fill="#378246" stroke="#378246" stroke-width="0.8"/>
<path d="M0 -21l21 -21l21 21l-21 21z" fill="#488f54" stroke="#488f54" stroke-width="0.8"/>
<path d="M42 -21l21 -21l21 21l-21 21z" fill="#388346" stroke="#388346" stroke-width="0.8"/>
<path d="M84 -21l21 -21l21 21l-21 21z" fill="#488752" stroke="#488752" stroke-width="0.8"/>
<path d="M126 -21l21 -21l21 21l-21 21z" fill="#318042" stroke="#318042" stroke-width="0.8"/>
<path d="M168 -21l21 -21l21 21l-21 21z" fill="#368445" stroke="#368445" stroke-width="0.8"/>
<path d="M210 -21l21 -21l21 21l-21 21z" fill="#388346" stroke="#388346" stroke-width="0.8"/>
<path d="M252 -21l21 -21l21 21l-21 21z" fill="#317c42" stroke="#317c42" stroke-width="0.8"/>
<path d="M294 -21l21 -21l21 21l-21 21z" fill="#388a48" stroke="#388a48" stroke-width="0.8"/>
<path d="M336 -21l21 -21l21 21l-21 21z" fill="#317f42" stroke="#317f42" stroke-width="0.8"/>
<path d="M378 -21l21 -21l21 21l-21 21z" fill="#3b874a" stroke="#3b874a" stroke-width="0.8"/>
<path d="M420 -21l21 -21l21 21l-21 21z" fill="#43894f" stroke="#43894f" stroke-width="0.8"/>
<path d="M462 -21l21 -21l21 21l-21 21z" fill="#548c5a" stroke="#548c5a" stroke-width="0.8"/>
<path d="M504 -21l21 -21l21 21l-21 21z" fill="#5b8f5f" stroke="#5b8f5f" stroke-width="0.8"/>
<path d="M546 -21l21 -21l21 21l-21 21z" fill="#497d4f" stroke="#497d4f" stroke-width="0.8"/>
<path d="M588 -21l21 -21l21 21l-21 21z" fill="#457d4c" stroke="#457d4c" stroke-width="0.8"/>
<path d="M630 -21l21 -21l21 21l-21 21z" fill="#46794c" stroke="#46794c" stroke-width="0.8"/>
<path d="M672 -21l21 -21l21 21l-21 21z" fill="#477b4e" stroke="#477b4e" stroke-width="0.8"/>
<path d="M714 -21l21 -21l21 21l-21 21z" fill="#629265" stroke="#629265" stroke-width="0.8"/>
<path d="M756 -21l21 -21l21 21l-21 21z" fill="#518e59" stroke="#518e59" stroke-width="0.8"/>
<path d="M798 -21l21 -21l21 21l-21 21z" fill="#58895c" stroke="#58895c" stroke-width="0.8"/>
<path d="M840 -21l21 -21l21 21l-21 21z" fill="#598c5d" stroke="#598c5d" stroke-width="0.8"/>
<path d="M882 -21l21 -21l21 21l-21 21z" fill="#528e59" stroke="#528e59" stroke-width="0.8"/>
<path d="M924 -21l21 -21l21 21l-21 21z" fill="#518e59" stroke="#518e59" stroke-width="0.8"/>
<path d="M966 -21l21 -21l21 21l-21 21z" fill="#558f5c" stroke="#558f5c" stroke-width="0.8"/>
<path d="M1008 -21l21 -21l21 21l-21 21z" fill="#45854f" stroke="#45854f" stroke-width="0.8"/>
<path d="M1050 -21l21 -21l21 21l-21 21z" fill="#388347" stroke="#388347" stroke-width="0.8"/>
<path d="M1092 -21l21 -21l21 21l-21 21z" fill="#388046" stroke="#388046" stroke-width="0.8"/>
<path d="M1134 -21l21 -21l21 21l-21 21z" fill="#3b8048" stroke="#3b8048" stroke-width="0.8"/>
<path d="M1176 -21l21 -21l21 21l-21 21z" fill="#318242" stroke="#318242" stroke-width="0.8"/>
<path d="M1218 -21l21 -21l21 21l-21 21z" fill="#3b8549" stroke="#3b8549" stroke-width="0.8"/>
<path d="M1260 -21l21 -21l21 21l-21 21z" fill="#3f8d4e" stroke="#3f8d4e" stroke-width="0.8"/>
<path d="M1302 -21l21 -21l21 21l-21 21z" fill="#3b874a" stroke="#3b874a" stroke-width="0.8"/>
<path d="M1344 -21l21 -21l21 21l-21 21z" fill="#368645" stroke="#368645" stroke-width="0.8"/>
<path d="M-63 0l21 -21l21 21l-21 21z" fill="#3b8b4a" stroke="#3b8b4a" stroke-width="0.8"/>
<path d="M-21 0l21 -21l21 21l-21 21z" fill="#3c874a" stroke="#3c874a" stroke-width="0.8"/>
<path d="M21 0l21 -21l21 21l-21 21z" fill="#588b5d" stroke="#588b5d" stroke-width="0.8"/>
<path d="M63 0l21 -21l21 21l-21 21z" fill="#558b5b" stroke="#558b5b" stroke-width="0.8"/>
<path d="M105 0l21 -21l21 21l-21 21z" fill="#488752" stroke="#488752" stroke-width="0.8"/>
<path d="M147 0l21 -21l21 21l-21 21z" fill="#3a8147" stroke="#3a8147" stroke-width="0.8"/>
<path d="M189 0l21 -21l21 21l-21 21z" fill="#338845" stroke="#338845" stroke-width="0.8"/>
<path d="M231 0l21 -21l21 21l-21 21z" fill="#3b7546" stroke="#3b7546" stroke-width="0.8"/>
<path d="M273 0l21 -21l21 21l-21 21z" fill="#387a45" stroke="#387a45" stroke-width="0.8"/>
<path d="M315 0l21 -21l21 21l-21 21z" fill="#308342" stroke="#308342" stroke-width="0.8"/>
<path d="M357 0l21 -21l21 21l-21 21z" fill="#518b59" stroke="#518b59" stroke-width="0.8"/>
<path d="M399 0l21 -21l21 21l-21 21z" fill="#498a53" stroke="#498a53" stroke-width="0.8"/>
<path d="M441 0l21 -21l21 21l-21 21z" fill="#4c9057" stroke="#4c9057" stroke-width="0.8"/>
<path d="M483 0l21 -21l21 21l-21 21z" fill="#578d5c" stroke="#578d5c" stroke-width="0.8"/>
<path d="M525 0l21 -21l21 21l-21 21z" fill="#618f64" stroke="#618f64" stroke-width="0.8"/>
<path d="M567 0l21 -21l21 21l-21 21z" fill="#56855a" stroke="#56855a" stroke-width="0.8"/>
<path d="M609 0l21 -21l21 21l-21 21z" fill="#4b7c50" stroke="#4b7c50" stroke-width="0.8"/>
<path d="M651 0l21 -21l21 21l-21 21z" fill="#4d8253" stroke="#4d8253" stroke-width="0.8"/>
<path d="M693 0l21 -21l21 21l-21 21z" fill="#407849" stroke="#407849" stroke-width="0.8"/>
<path d="M735 0l21 -21l21 21l-21 21z" fill="#548459" stroke="#548459" stroke-width="0.8"/>
<path d="M777 0l21 -21l21 21l-21 21z" fill="#5f9363" stroke="#5f9363" stroke-width="0.8"/>
<path d="M819 0l21 -21l21 21l-21 21z" fill="#5f8e62" stroke="#5f8e62" stroke-width="0.8"/>
<path d="M861 0l21 -21l21 21l-21 21z" fill="#51925a" stroke="#51925a" stroke-width="0.8"/>
<path d="M903 0l21 -21l21 21l-21 21z" fill="#648f65" stroke="#648f65" stroke-width="0.8"/>
<path d="M945 0l21 -21l21 21l-21 21z" fill="#55905c" stroke="#55905c" stroke-width="0.8"/>
<path d="M987 0l21 -21l21 21l-21 21z" fill="#46834f" stroke="#46834f" stroke-width="0.8"/>
<path d="M1029 0l21 -21l21 21l-21 21z" fill="#518958" stroke="#518958" stroke-width="0.8"/>
<path d="M1071 0l21 -21l21 21l-21 21z" fill="#43784b" stroke="#43784b" stroke-width="0.8"/>
<path d="M1113 0l21 -21l21 21l-21 21z" fill="#417549" stroke="#417549" stroke-width="0.8"/>
<path d="M1155 0l21 -21l21 21l-21 21z" fill="#357943" stroke="#357943" stroke-width="0.8"/>
<path d="M1197 0l21 -21l21 21l-21 21z" fill="#3f814a" stroke="#3f814a" stroke-width="0.8"/>
<path d="M1239 0l21 -21l21 21l-21 21z" fill="#3c874a" stroke="#3c874a" stroke-width="0.8"/>
<path d="M1281 0l21 -21l21 21l-21 21z" fill="#317f42" stroke="#317f42" stroke-width="0.8"/>
<path d="M1323 0l21 -21l21 21l-21 21z" fill="#308442" stroke="#308442" stroke-width="0.8"/>
<path d="M-42 21l21 -21l21 21l-21 21z" fill="#4b8f55" stroke="#4b8f55" stroke-width="0.8"/>
<path d="M0 21l21 -21l21 21l-21 21z" fill="#59915f" stroke="#59915f" stroke-width="0.8"/>
<path d="M42 21l21 -21l21 21l-21 21z" fill="#518b58" stroke="#518b58" stroke-width="0.8"/>
<path d="M84 21l21 -21l21 21l-21 21z" fill="#528958" stroke="#528958" stroke-width="0.8"/>
<path d="M126 21l21 -21l21 21l-21 21z" fill="#378246" stroke="#378246" stroke-width="0.8"/>
<path d="M168 21l21 -21l21 21l-21 21z" fill="#3c7647" stroke="#3c7647" stroke-width="0.8"/>
<path d="M210 21l21 -21l21 21l-21 21z" fill="#318342" stroke="#318342" stroke-width="0.8"/>
<path d="M252 21l21 -21l21 21l-21 21z" fill="#327741" stroke="#327741" stroke-width="0.8"/>
<path d="M294 21l21 -21l21 21l-21 21z" fill="#347c42" stroke="#347c42" stroke-width="0.8"/>
<path d="M336 21l21 -21l21 21l-21 21z" fill="#408a4d" stroke="#408a4d" stroke-width="0.8"/>
<path d="M378 21l21 -21l21 21l-21 21z" fill="#338744" stroke="#338744" stroke-width="0.8"/>
<path d="M420 21l21 -21l21 21l-21 21z" fill="#5b9461" stroke="#5b9461" stroke-width="0.8"/>
<path d="M462 21l21 -21l21 21l-21 21z" fill="#4c8a55" stroke="#4c8a55" stroke-width="0.8"/>
<path d="M504 21l21 -21l21 21l-21 21z" fill="#57855a" stroke="#57855a" stroke-width="0.8"/>
<path d="M546 21l21 -21l21 21l-21 21z" fill="#638f64" stroke="#638f64" stroke-width="0.8"/>
<path d="M588 21l21 -21l21 21l-21 21z" fill="#45874f" stroke="#45874f" stroke-width="0.8"/>
<path d="M630 21l21 -21l21 21l-21 21z" fill="#417f4b" stroke="#417f4b" stroke-width="0.8"/>
<path d="M672 21l21 -21l21 21l-21 21z" fill="#3c8148" stroke="#3c8148" stroke-width="0.8"/>
<path d="M714 21l21 -21l21 21l-21 21z" fill="#4a7a4f" stroke="#4a7a4f" stroke-width="0.8"/>
<path d="M756 21l21 -21l21 21l-21 21z" fill="#5c9160" stroke="#5c9160" stroke-width="0.8"/>
<path d="M798 21l21 -21l21 21l-21 21z" fill="#57865b" stroke="#57865b" stroke-width="0.8"/>
<path d="M840 21l21 -21l21 21l-21 21z" fill="#659768" stroke="#659768" stroke-width="0.8"/>
<path d="M882 21l21 -21l21 21l-21 21z" fill="#5a8f5f" stroke="#5a8f5f" stroke-width="0.8"/>
<path d="M924 21l21 -21l21 21l-21 21z" fill="#508a57" stroke="#508a57" stroke-width="0.8"/>
<path d="M966 21l21 -21l21 21l-21 21z" fill="#5e8e61" stroke="#5e8e61" stroke-width="0.8"/>
<path d="M1008 21l21 -21l21 21l-21 21z" fill="#538c5a" stroke="#538c5a" stroke-width="0.8"/>
<path d="M1050 21l21 -21l21 21l-21 21z" fill="#377d45" stroke="#377d45" stroke-width="0.8"/>
<path d="M1092 21l21 -21l21 21l-21 21z" fill="#337942" stroke="#337942" stroke-width="0.8"/>
<path d="M1134 21l21 -21l21 21l-21 21z" fill="#396f44" stroke="#396f44" stroke-width="0.8"/>
<path d="M1176 21l21 -21l21 21l-21 21z" fill="#3c8248" stroke="#3c8248" stroke-width="0.8"/>
<path d="M1218 21l21 -21l21 21l-21 21z" fill="#40894c" stroke="#40894c" stroke-width="0.8"/>
<path d="M1260 21l21 -21l21 21l-21 21z" fill="#348544" stroke="#348544" stroke-width="0.8"/>
<path d="M1302 21l21 -21l21 21l-21 21z" fill="#328744" stroke="#328744" stroke-width="0.8"/>
<path d="M1344 21l21 -21l21 21l-21 21z" fill="#317f42" stroke="#317f42" stroke-width="0.8"/>
<path d="M-63 42l21 -21l21 21l-21 21z" fill="#468a51" stroke="#468a51" stroke-width="0.8"/>
<path d="M-21 42l21 -21l21 21l-21 21z" fill="#578a5c" stroke="#578a5c" stroke-width="0.8"/>
<path d="M21 42l21 -21l21 21l-21 21z" fill="#5f9062" stroke="#5f9062" stroke-width="0.8"/>
<path d="M63 42l21 -21l21 21l-21 21z" fill="#5b9461" stroke="#5b9461" stroke-width="0.8"/>
<path d="M105 42l21 -21l21 21l-21 21z" fill="#427c4b" stroke="#427c4b" stroke-width="0.8"/>
<path d="M147 42l21 -21l21 21l-21 21z" fill="#407c4a" stroke="#407c4a" stroke-width="0.8"/>
<path d="M189 42l21 -21l21 21l-21 21z" fill="#3a7d46" stroke="#3a7d46" stroke-width="0.8"/>
<path d="M231 42l21 -21l21 21l-21 21z" fill="#317e42" stroke="#317e42" stroke-width="0.8"/>
<path d="M273 42l21 -21l21 21l-21 21z" fill="#317d42" stroke="#317d42" stroke-width="0.8"/>
<path d="M315 42l21 -21l21 21l-21 21z" fill="#327b41" stroke="#327b41" stroke-width="0.8"/>
<path d="M357 42l21 -21l21 21l-21 21z" fill="#42874e" stroke="#42874e" stroke-width="0.8"/>
<path d="M399 42l21 -21l21 21l-21 21z" fill="#4d9358" stroke="#4d9358" stroke-width="0.8"/>
<path d="M441 42l21 -21l21 21l-21 21z" fill="#4b9257" stroke="#4b9257" stroke-width="0.8"/>
<path d="M483 42l21 -21l21 21l-21 21z" fill="#609164" stroke="#609164" stroke-width="0.8"/>
<path d="M525 42l21 -21l21 21l-21 21z" fill="#5a8b5e" stroke="#5a8b5e" stroke-width="0.8"/>
<path d="M567 42l21 -21l21 21l-21 21z" fill="#5b895e" stroke="#5b895e" stroke-width="0.8"/>
<path d="M609 42l21 -21l21 21l-21 21z" fill="#457d4e" stroke="#457d4e" stroke-width="0.8"/>
<path d="M651 42l21 -21l21 21l-21 21z" fill="#47764d" stroke="#47764d" stroke-width="0.8"/>
<path d="M693 42l21 -21l21 21l-21 21z" fill="#4b7d50" stroke="#4b7d50" stroke-width="0.8"/>
<path d="M735 42l21 -21l21 21l-21 21z" fill="#518256" stroke="#518256" stroke-width="0.8"/>
<path d="M777 42l21 -21l21 21l-21 21z" fill="#5c8c5f" stroke="#5c8c5f" stroke-width="0.8"/>
<path d="M819 42l21 -21l21 21l-21 21z" fill="#5d9262" stroke="#5d9262" stroke-width="0.8"/>
<path d="M861 42l21 -21l21 21l-21 21z" fill="#659166" stroke="#659166" stroke-width="0.8"/>
<path d="M903 42l21 -21l21 21l-21 21z" fill="#69966a" stroke="#69966a" stroke-width="0.8"/>
<path d="M945 42l21 -21l21 21l-21 21z" fill="#5b8d5f" stroke="#5b8d5f" stroke-width="0.8"/>
<path d="M987 42l21 -21l21 21l-21 21z" fill="#4f8b56" stroke="#4f8b56" stroke-width="0.8"/>
<path d="M1029 42l21 -21l21 21l-21 21z" fill="#41804b" stroke="#41804b" stroke-width="0.8"/>
<path d="M1071 42l21 -21l21 21l-21 21z" fill="#377744" stroke="#377744" stroke-width="0.8"/>
<path d="M1113 42l21 -21l21 21l-21 21z" fill="#347342" stroke="#347342" stroke-width="0.8"/>
<path d="M1155 42l21 -21l21 21l-21 21z" fill="#318042" stroke="#318042" stroke-width="0.8"/>
<path d="M1197 42l21 -21l21 21l-21 21z" fill="#328143" stroke="#328143" stroke-width="0.8"/>
<path d="M1239 42l21 -21l21 21l-21 21z" fill="#368444" stroke="#368444" stroke-width="0.8"/>
<path d="M1281 42l21 -21l21 21l-21 21z" fill="#478e53" stroke="#478e53" stroke-width="0.8"/>
<path d="M1323 42l21 -21l21 21l-21 21z" fill="#358846" stroke="#358846" stroke-width="0.8"/>
<path d="M-42 63l21 -21l21 21l-21 21z" fill="#538b5a" stroke="#538b5a" stroke-width="0.8"/>
<path d="M0 63l21 -21l21 21l-21 21z" fill="#55915c" stroke="#55915c" stroke-width="0.8"/>
<path d="M42 63l21 -21l21 21l-21 21z" fill="#508c58" stroke="#508c58" stroke-width="0.8"/>
<path d="M84 63l21 -21l21 21l-21 21z" fill="#508154" stroke="#508154" stroke-width="0.8"/>
<path d="M126 63l21 -21l21 21l-21 21z" fill="#42864e" stroke="#42864e" stroke-width="0.8"/>
<path d="M168 63l21 -21l21 21l-21 21z" fill="#378747" stroke="#378747" stroke-width="0.8"/>
<path d="M210 63l21 -21l21 21l-21 21z" fill="#387e45" stroke="#387e45" stroke-width="0.8"/>
<path d="M252 63l21 -21l21 21l-21 21z" fill="#337241" stroke="#337241" stroke-width="0.8"/>
<path d="M294 63l21 -21l21 21l-21 21z" fill="#377644" stroke="#377644" stroke-width="0.8"/>
<path d="M336 63l21 -21l21 21l-21 21z" fill="#378947" stroke="#378947" stroke-width="0.8"/>
<path d="M378 63l21 -21l21 21l-21 21z" fill="#488f54" stroke="#488f54" stroke-width="0.8"/>
<path d="M420 63l21 -21l21 21l-21 21z" fill="#4e9058" stroke="#4e9058" stroke-width="0.8"/>
<path d="M462 63l21 -21l21 21l-21 21z" fill="#54965e" stroke="#54965e" stroke-width="0.8"/>
<path d="M504 63l21 -21l21 21l-21 21z" fill="#55905c" stroke="#55905c" stroke-width="0.8"/>
<path d="M546 63l21 -21l21 21l-21 21z" fill="#638f64" stroke="#638f64" stroke-width="0.8"/>
<path d="M588 63l21 -21l21 21l-21 21z" fill="#659267" stroke="#659267" stroke-width="0.8"/>
<path d="M630 63l21 -21l21 21l-21 21z" fill="#45744b" stroke="#45744b" stroke-width="0.8"/>
<path d="M672 63l21 -21l21 21l-21 21z" fill="#45734b" stroke="#45734b" stroke-width="0.8"/>
<path d="M714 63l21 -21l21 21l-21 21z" fill="#467e4d" stroke="#467e4d" stroke-width="0.8"/>
<path d="M756 63l21 -21l21 21l-21 21z" fill="#5b895e" stroke="#5b895e" stroke-width="0.8"/>
<path d="M798 63l21 -21l21 21l-21 21z" fill="#548859" stroke="#548859" stroke-width="0.8"/>
<path d="M840 63l21 -21l21 21l-21 21z" fill="#689469" stroke="#689469" stroke-width="0.8"/>
<path d="M882 63l21 -21l21 21l-21 21z" fill="#6b986c" stroke="#6b986c" stroke-width="0.8"/>
<path d="M924 63l21 -21l21 21l-21 21z" fill="#669668" stroke="#669668" stroke-width="0.8"/>
<path d="M966 63l21 -21l21 21l-21 21z" fill="#5a885d" stroke="#5a885d" stroke-width="0.8"/>
<path d="M1008 63l21 -21l21 21l-21 21z" fill="#518657" stroke="#518657" stroke-width="0.8"/>
<path d="M1050 63l21 -21l21 21l-21 21z" fill="#3c7746" stroke="#3c7746" stroke-width="0.8"/>
<path d="M1092 63l21 -21l21 21l-21 21z" fill="#347e43" stroke="#347e43" stroke-width="0.8"/>
<path d="M1134 63l21 -21l21 21l-21 21z" fill="#377d45" stroke="#377d45" stroke-width="0.8"/>
<path d="M1176 63l21 -21l21 21l-21 21z" fill="#368044" stroke="#368044" stroke-width="0.8"/>
<path d="M1218 63l21 -21l21 21l-21 21z" fill="#42844d" stroke="#42844d" stroke-width="0.8"/>
<path d="M1260 63l21 -21l21 21l-21 21z" fill="#468650" stroke="#468650" stroke-width="0.8"/>
<path d="M1302 63l21 -21l21 21l-21 21z" fill="#358846" stroke="#358846" stroke-width="0.8"/>
<path d="M1344 63l21 -21l21 21l-21 21z" fill="#3c8b4b" stroke="#3c8b4b" stroke-width="0.8"/>
<path d="M-63 84l21 -21l21 21l-21 21z" fill="#4a8853" stroke="#4a8853" stroke-width="0.8"/>
<path d="M-21 84l21 -21l21 21l-21 21z" fill="#5a9762" stroke="#5a9762" stroke-width="0.8"/>
<path d="M21 84l21 -21l21 21l-21 21z" fill="#679268" stroke="#679268" stroke-width="0.8"/>
<path d="M63 84l21 -21l21 21l-21 21z" fill="#629365" stroke="#629365" stroke-width="0.8"/>
<path d="M105 84l21 -21l21 21l-21 21z" fill="#45854f" stroke="#45854f" stroke-width="0.8"/>
<path d="M147 84l21 -21l21 21l-21 21z" fill="#387e45" stroke="#387e45" stroke-width="0.8"/>
<path d="M189 84l21 -21l21 21l-21 21z" fill="#347e43" stroke="#347e43" stroke-width="0.8"/>
<path d="M231 84l21 -21l21 21l-21 21z" fill="#318242" stroke="#318242" stroke-width="0.8"/>
<path d="M273 84l21 -21l21 21l-21 21z" fill="#377343" stroke="#377343" stroke-width="0.8"/>
<path d="M315 84l21 -21l21 21l-21 21z" fill="#327b41" stroke="#327b41" stroke-width="0.8"/>
<path d="M357 84l21 -21l21 21l-21 21z" fill="#368846" stroke="#368846" stroke-width="0.8"/>
<path d="M399 84l21 -21l21 21l-21 21z" fill="#438b4f" stroke="#438b4f" stroke-width="0.8"/>
<path d="M441 84l21 -21l21 21l-21 21z" fill="#6b9e6e" stroke="#6b9e6e" stroke-width="0.8"/>
<path d="M483 84l21 -21l21 21l-21 21z" fill="#659367" stroke="#659367" stroke-width="0.8"/>
<path d="M525 84l21 -21l21 21l-21 21z" fill="#69946a" stroke="#69946a" stroke-width="0.8"/>
<path d="M567 84l21 -21l21 21l-21 21z" fill="#58915e" stroke="#58915e" stroke-width="0.8"/>
<path d="M609 84l21 -21l21 21l-21 21z" fill="#4b7c50" stroke="#4b7c50" stroke-width="0.8"/>
<path d="M651 84l21 -21l21 21l-21 21z" fill="#4a7a4f" stroke="#4a7a4f" stroke-width="0.8"/>
<path d="M693 84l21 -21l21 21l-21 21z" fill="#48784e" stroke="#48784e" stroke-width="0.8"/>
<path d="M735 84l21 -21l21 21l-21 21z" fill="#4a7d4f" stroke="#4a7d4f" stroke-width="0.8"/>
<path d="M777 84l21 -21l21 21l-21 21z" fill="#5b895e" stroke="#5b895e" stroke-width="0.8"/>
<path d="M819 84l21 -21l21 21l-21 21z" fill="#619264" stroke="#619264" stroke-width="0.8"/>
<path d="M861 84l21 -21l21 21l-21 21z" fill="#69946a" stroke="#69946a" stroke-width="0.8"/>
<path d="M903 84l21 -21l21 21l-21 21z" fill="#779f76" stroke="#779f76" stroke-width="0.8"/>
<path d="M945 84l21 -21l21 21l-21 21z" fill="#6e986e" stroke="#6e986e" stroke-width="0.8"/>
<path d="M987 84l21 -21l21 21l-21 21z" fill="#5c8b5f" stroke="#5c8b5f" stroke-width="0.8"/>
<path d="M1029 84l21 -21l21 21l-21 21z" fill="#407f4a" stroke="#407f4a" stroke-width="0.8"/>
<path d="M1071 84l21 -21l21 21l-21 21z" fill="#407749" stroke="#407749" stroke-width="0.8"/>
<path d="M1113 84l21 -21l21 21l-21 21z" fill="#397645" stroke="#397645" stroke-width="0.8"/>
<path d="M1155 84l21 -21l21 21l-21 21z" fill="#407a49" stroke="#407a49" stroke-width="0.8"/>
<path d="M1197 84l21 -21l21 21l-21 21z" fill="#318142" stroke="#318142" stroke-width="0.8"/>
<path d="M1239 84l21 -21l21 21l-21 21z" fill="#438f51" stroke="#438f51" stroke-width="0.8"/>
<path d="M1281 84l21 -21l21 21l-21 21z" fill="#458f52" stroke="#458f52" stroke-width="0.8"/>
<path d="M1323 84l21 -21l21 21l-21 21z" fill="#398a49" stroke="#398a49" stroke-width="0.8"/>
<path d="M-42 105l21 -21l21 21l-21 21z" fill="#51905a" stroke="#51905a" stroke-width="0.8"/>
<path d="M0 105l21 -21l21 21l-21 21z" fill="#5b895e" stroke="#5b895e" stroke-width="0.8"/>
<path d="M42 105l21 -21l21 21l-21 21z" fill="#659166" stroke="#659166" stroke-width="0.8"/>
<path d="M84 105l21 -21l21 21l-21 21z" fill="#548c5b" stroke="#548c5b" stroke-width="0.8"/>
<path d="M126 105l21 -21l21 21l-21 21z" fill="#4e8153" stroke="#4e8153" stroke-width="0.8"/>
<path d="M168 105l21 -21l21 21l-21 21z" fill="#3a8047" stroke="#3a8047" stroke-width="0.8"/>
<path d="M210 105l21 -21l21 21l-21 21z" fill="#318242" stroke="#318242" stroke-width="0.8"/>
<path d="M252 105l21 -21l21 21l-21 21z" fill="#317e42" stroke="#317e42" stroke-width="0.8"/>
<path d="M294 105l21 -21l21 21l-21 21z" fill="#377744" stroke="#377744" stroke-width="0.8"/>
<path d="M336 105l21 -21l21 21l-21 21z" fill="#388748" stroke="#388748" stroke-width="0.8"/>
<path d="M378 105l21 -21l21 21l-21 21z" fill="#378948" stroke="#378948" stroke-width="0.8"/>
<path d="M420 105l21 -21l21 21l-21 21z" fill="#57945f" stroke="#57945f" stroke-width="0.8"/>
<path d="M462 105l21 -21l21 21l-21 21z" fill="#528e59" stroke="#528e59" stroke-width="0.8"/>
<path d="M504 105l21 -21l21 21l-21 21z" fill="#578e5d" stroke="#578e5d" stroke-width="0.8"/>
<path d="M546 105l21 -21l21 21l-21 21z" fill="#629064" stroke="#629064" stroke-width="0.8"/>
<path d="M588 105l21 -21l21 21l-21 21z" fill="#59875c" stroke="#59875c" stroke-width="0.8"/>
<path d="M630 105l21 -21l21 21l-21 21z" fill="#47794d" stroke="#47794d" stroke-width="0.8"/>
<path d="M672 105l21 -21l21 21l-21 21z" fill="#45754c" stroke="#45754c" stroke-width="0.8"/>
<path d="M714 105l21 -21l21 21l-21 21z" fill="#48784e" stroke="#48784e" stroke-width="0.8"/>
<path d="M756 105l21 -21l21 21l-21 21z" fill="#4b8b54" stroke="#4b8b54" stroke-width="0.8"/>
<path d="M798 105l21 -21l21 21l-21 21z" fill="#608e62" stroke="#608e62" stroke-width="0.8"/>
<path d="M840 105l21 -21l21 21l-21 21z" fill="#7aa178" stroke="#7aa178" stroke-width="0.8"/>
<path d="M882 105l21 -21l21 21l-21 21z" fill="#689369" stroke="#689369" stroke-width="0.8"/>
<path d="M924 105l21 -21l21 21l-21 21z" fill="#6d976d" stroke="#6d976d" stroke-width="0.8"/>
<path d="M966 105l21 -21l21 21l-21 21z" fill="#5c8e60" stroke="#5c8e60" stroke-width="0.8"/>
<path d="M1008 105l21 -21l21 21l-21 21z" fill="#538959" stroke="#538959" stroke-width="0.8"/>
<path d="M1050 105l21 -21l21 21l-21 21z" fill="#348344" stroke="#348344" stroke-width="0.8"/>
<path d="M1092 105l21 -21l21 21l-21 21z" fill="#437b4c" stroke="#437b4c" stroke-width="0.8"/>
<path d="M1134 105l21 -21l21 21l-21 21z" fill="#347d43" stroke="#347d43" stroke-width="0.8"/>
<path d="M1176 105l21 -21l21 21l-21 21z" fill="#3c7f48" stroke="#3c7f48" stroke-width="0.8"/>
<path d="M1218 105l21 -21l21 21l-21 21z" fill="#3b8649" stroke="#3b8649" stroke-width="0.8"/>
<path d="M1260 105l21 -21l21 21l-21 21z" fill="#4d9358" stroke="#4d9358" stroke-width="0.8"/>
<path d="M1302 105l21 -21l21 21l-21 21z" fill="#398a49" stroke="#398a49" stroke-width="0.8"/>
<path d="M1344 105l21 -21l21 21l-21 21z" fill="#308642" stroke="#308642" stroke-width="0.8"/>
<path d="M-63 126l21 -21l21 21l-21 21z" fill="#378747" stroke="#378747" stroke-width="0.8"/>
<path d="M-21 126l21 -21l21 21l-21 21z" fill="#5e9463" stroke="#5e9463" stroke-width="0.8"/>
<path d="M21 126l21 -21l21 21l-21 21z" fill="#5d8a5f" stroke="#5d8a5f" stroke-width="0.8"/>
<path d="M63 126l21 -21l21 21l-21 21z" fill="#4b8d56" stroke="#4b8d56" stroke-width="0.8"/>
<path d="M105 126l21 -21l21 21l-21 21z" fill="#488b52" stroke="#488b52" stroke-width="0.8"/>
<path d="M147 126l21 -21l21 21l-21 21z" fill="#428e50" stroke="#428e50" stroke-width="0.8"/>
<path d="M189 126l21 -21l21 21l-21 21z" fill="#318142" stroke="#318142" stroke-width="0.8"/>
<path d="M231 126l21 -21l21 21l-21 21z" fill="#318142" stroke="#318142" stroke-width="0.8"/>
<path d="M273 126l21 -21l21 21l-21 21z" fill="#317f42" stroke="#317f42" stroke-width="0.8"/>
<path d="M315 126l21 -21l21 21l-21 21z" fill="#387e45" stroke="#387e45" stroke-width="0.8"/>
<path d="M357 126l21 -21l21 21l-21 21z" fill="#438c50" stroke="#438c50" stroke-width="0.8"/>
<path d="M399 126l21 -21l21 21l-21 21z" fill="#3e8c4d" stroke="#3e8c4d" stroke-width="0.8"/>
<path d="M441 126l21 -21l21 21l-21 21z" fill="#659166" stroke="#659166" stroke-width="0.8"/>
<path d="M483 126l21 -21l21 21l-21 21z" fill="#5a9561" stroke="#5a9561" stroke-width="0.8"/>
<path d="M525 126l21 -21l21 21l-21 21z" fill="#57925e" stroke="#57925e" stroke-width="0.8"/>
<path d="M567 126l21 -21l21 21l-21 21z" fill="#548959" stroke="#548959" stroke-width="0.8"/>
<path d="M609 126l21 -21l21 21l-21 21z" fill="#5c8b5f" stroke="#5c8b5f" stroke-width="0.8"/>
<path d="M651 126l21 -21l21 21l-21 21z" fill="#3f7c49" stroke="#3f7c49" stroke-width="0.8"/>
<path d="M693 126l21 -21l21 21l-21 21z" fill="#47774d" stroke="#47774d" stroke-width="0.8"/>
<path d="M735 126l21 -21l21 21l-21 21z" fill="#407649" stroke="#407649" stroke-width="0.8"/>
<path d="M777 126l21 -21l21 21l-21 21z" fill="#528156" stroke="#528156" stroke-width="0.8"/>
<path d="M819 126l21 -21l21 21l-21 21z" fill="#679368" stroke="#679368" stroke-width="0.8"/>
<path d="M861 126l21 -21l21 21l-21 21z" fill="#6e986e" stroke="#6e986e" stroke-width="0.8"/>
<path d="M903 126l21 -21l21 21l-21 21z" fill="#739c73" stroke="#739c73" stroke-width="0.8"/>
<path d="M945 126l21 -21l21 21l-21 21z" fill="#649467" stroke="#649467" stroke-width="0.8"/>
<path d="M987 126l21 -21l21 21l-21 21z" fill="#67976a" stroke="#67976a" stroke-width="0.8"/>
<path d="M1029 126l21 -21l21 21l-21 21z" fill="#598e5e" stroke="#598e5e" stroke-width="0.8"/>
<path d="M1071 126l21 -21l21 21l-21 21z" fill="#3d8149" stroke="#3d8149" stroke-width="0.8"/>
<path d="M1113 126l21 -21l21 21l-21 21z" fill="#367944" stroke="#367944" stroke-width="0.8"/>
<path d="M1155 126l21 -21l21 21l-21 21z" fill="#4a8752" stroke="#4a8752" stroke-width="0.8"/>
<path d="M1197 126l21 -21l21 21l-21 21z" fill="#44844e" stroke="#44844e" stroke-width="0.8"/>
<path d="M1239 126l21 -21l21 21l-21 21z" fill="#4b8954" stroke="#4b8954" stroke-width="0.8"/>
<path d="M1281 126l21 -21l21 21l-21 21z" fill="#3d8a4b" stroke="#3d8a4b" stroke-width="0.8"/>
<path d="M1323 126l21 -21l21 21l-21 21z" fill="#418e4f" stroke="#418e4f" stroke-width="0.8"/>
<path d="M-42 147l21 -21l21 21l-21 21z" fill="#398347" stroke="#398347" stroke-width="0.8"/>
<path d="M0 147l21 -21l21 21l-21 21z" fill="#4d8655" stroke="#4d8655" stroke-width="0.8"/>
<path d="M42 147l21 -21l21 21l-21 21z" fill="#468951" stroke="#468951" stroke-width="0.8"/>
<path d="M84 147l21 -21l21 21l-21 21z" fill="#538457" stroke="#538457" stroke-width="0.8"/>
<path d="M126 147l21 -21l21 21l-21 21z" fill="#43864e" stroke="#43864e" stroke-width="0.8"/>
<path d="M168 147l21 -21l21 21l-21 21z" fill="#398448" stroke="#398448" stroke-width="0.8"/>
<path d="M210 147l21 -21l21 21l-21 21z" fill="#40844b" stroke="#40844b" stroke-width="0.8"/>
<path d="M252 147l21 -21l21 21l-21 21z" fill="#397745" stroke="#397745" stroke-width="0.8"/>
<path d="M294 147l21 -21l21 21l-21 21z" fill="#308342" stroke="#308342" stroke-width="0.8"/>
<path d="M336 147l21 -21l21 21l-21 21z" fill="#489054" stroke="#489054" stroke-width="0.8"/>
<path d="M378 147l21 -21l21 21l-21 21z" fill="#56915d" stroke="#56915d" stroke-width="0.8"/>
<path d="M420 147l21 -21l21 21l-21 21z" fill="#498a53" stroke="#498a53" stroke-width="0.8"/>
<path d="M462 147l21 -21l21 21l-21 21z" fill="#619866" stroke="#619866" stroke-width="0.8"/>
<path d="M504 147l21 -21l21 21l-21 21z" fill="#4f8b57" stroke="#4f8b57" stroke-width="0.8"/>
<path d="M546 147l21 -21l21 21l-21 21z" fill="#5a9360" stroke="#5a9360" stroke-width="0.8"/>
<path d="M588 147l21 -21l21 21l-21 21z" fill="#649467" stroke="#649467" stroke-width="0.8"/>
<path d="M630 147l21 -21l21 21l-21 21z" fill="#4a8051" stroke="#4a8051" stroke-width="0.8"/>
<path d="M672 147l21 -21l21 21l-21 21z" fill="#42784a" stroke="#42784a" stroke-width="0.8"/>
<path d="M714 147l21 -21l21 21l-21 21z" fill="#47764d" stroke="#47764d" stroke-width="0.8"/>
<path d="M756 147l21 -21l21 21l-21 21z" fill="#47784e" stroke="#47784e" stroke-width="0.8"/>
<path d="M798 147l21 -21l21 21l-21 21z" fill="#4f8054" stroke="#4f8054" stroke-width="0.8"/>
<path d="M840 147l21 -21l21 21l-21 21z" fill="#649065" stroke="#649065" stroke-width="0.8"/>
<path d="M882 147l21 -21l21 21l-21 21z" fill="#6b976c" stroke="#6b976c" stroke-width="0.8"/>
<path d="M924 147l21 -21l21 21l-21 21z" fill="#709e71" stroke="#709e71" stroke-width="0.8"/>
<path d="M966 147l21 -21l21 21l-21 21z" fill="#79a278" stroke="#79a278" stroke-width="0.8"/>
<path d="M1008 147l21 -21l21 21l-21 21z" fill="#558e5c" stroke="#558e5c" stroke-width="0.8"/>
<path d="M1050 147l21 -21l21 21l-21 21z" fill="#5c8a5f" stroke="#5c8a5f" stroke-width="0.8"/>
<path d="M1092 147l21 -21l21 21l-21 21z" fill="#378546" stroke="#378546" stroke-width="0.8"/>
<path d="M1134 147l21 -21l21 21l-21 21z" fill="#407c4a" stroke="#407c4a" stroke-width="0.8"/>
<path d="M1176 147l21 -21l21 21l-21 21z" fill="#328243" stroke="#328243" stroke-width="0.8"/>
<path d="M1218 147l21 -21l21 21l-21 21z" fill="#328243" stroke="#328243" stroke-width="0.8"/>
<path d="M1260 147l21 -21l21 21l-21 21z" fill="#3b8a49" stroke="#3b8a49" stroke-width="0.8"/>
<path d="M1302 147l21 -21l21 21l-21 21z" fill="#4c8352" stroke="#4c8352" stroke-width="0.8"/>
<path d="M1344 147l21 -21l21 21l-21 21z" fill="#448f51" stroke="#448f51" stroke-width="0.8"/>
<path d="M-63 168l21 -21l21 21l-21 21z" fill="#3f884c" stroke="#3f884c" stroke-width="0.8"/>
<path d="M-21 168l21 -21l21 21l-21 21z" fill="#498552" stroke="#498552" stroke-width="0.8"/>
<path d="M21 168l21 -21l21 21l-21 21z" fill="#458850" stroke="#458850" stroke-width="0.8"/>
<path d="M63 168l21 -21l21 21l-21 21z" fill="#478751" stroke="#478751" stroke-width="0.8"/>
<path d="M105 168l21 -21l21 21l-21 21z" fill="#548c5a" stroke="#548c5a" stroke-width="0.8"/>
<path d="M147 168l21 -21l21 21l-21 21z" fill="#338344" stroke="#338344" stroke-width="0.8"/>
<path d="M189 168l21 -21l21 21l-21 21z" fill="#388146" stroke="#388146" stroke-width="0.8"/>
<path d="M231 168l21 -21l21 21l-21 21z" fill="#378346" stroke="#378346" stroke-width="0.8"/>
<path d="M273 168l21 -21l21 21l-21 21z" fill="#308342" stroke="#308342" stroke-width="0.8"/>
<path d="M315 168l21 -21l21 21l-21 21z" fill="#358646" stroke="#358646" stroke-width="0.8"/>
<path d="M357 168l21 -21l21 21l-21 21z" fill="#3a8b4a" stroke="#3a8b4a" stroke-width="0.8"/>
<path d="M399 168l21 -21l21 21l-21 21z" fill="#418e4f" stroke="#418e4f" stroke-width="0.8"/>
<path d="M441 168l21 -21l21 21l-21 21z" fill="#4f8d57" stroke="#4f8d57" stroke-width="0.8"/>
<path d="M483 168l21 -21l21 21l-21 21z" fill="#5f9864" stroke="#5f9864" stroke-width="0.8"/>
<path d="M525 168l21 -21l21 21l-21 21z" fill="#4b9257" stroke="#4b9257" stroke-width="0.8"/>
<path d="M567 168l21 -21l21 21l-21 21z" fill="#5f8c61" stroke="#5f8c61" stroke-width="0.8"/>
<path d="M609 168l21 -21l21 21l-21 21z" fill="#498d53" stroke="#498d53" stroke-width="0.8"/>
<path d="M651 168l21 -21l21 21l-21 21z" fill="#4a7a4f" stroke="#4a7a4f" stroke-width="0.8"/>
<path d="M693 168l21 -21l21 21l-21 21z" fill="#4e7e53" stroke="#4e7e53" stroke-width="0.8"/>
<path d="M735 168l21 -21l21 21l-21 21z" fill="#49794e" stroke="#49794e" stroke-width="0.8"/>
<path d="M777 168l21 -21l21 21l-21 21z" fill="#477b4d" stroke="#477b4d" stroke-width="0.8"/>
<path d="M819 168l21 -21l21 21l-21 21z" fill="#598c5d" stroke="#598c5d" stroke-width="0.8"/>
<path d="M861 168l21 -21l21 21l-21 21z" fill="#6b976c" stroke="#6b976c" stroke-width="0.8"/>
<path d="M903 168l21 -21l21 21l-21 21z" fill="#749c73" stroke="#749c73" stroke-width="0.8"/>
<path d="M945 168l21 -21l21 21l-21 21z" fill="#739c72" stroke="#739c72" stroke-width="0.8"/>
<path d="M987 168l21 -21l21 21l-21 21z" fill="#599360" stroke="#599360" stroke-width="0.8"/>
<path d="M1029 168l21 -21l21 21l-21 21z" fill="#55885a" stroke="#55885a" stroke-width="0.8"/>
<path d="M1071 168l21 -21l21 21l-21 21z" fill="#487c4e" stroke="#487c4e" stroke-width="0.8"/>
<path d="M1113 168l21 -21l21 21l-21 21z" fill="#407e4a" stroke="#407e4a" stroke-width="0.8"/>
<path d="M1155 168l21 -21l21 21l-21 21z" fill="#348244" stroke="#348244" stroke-width="0.8"/>
<path d="M1197 168l21 -21l21 21l-21 21z" fill="#458e52" stroke="#458e52" stroke-width="0.8"/>
<path d="M1239 168l21 -21l21 21l-21 21z" fill="#408b4e" stroke="#408b4e" stroke-width="0.8"/>
<path d="M1281 168l21 -21l21 21l-21 21z" fill="#388a48" stroke="#388a48" stroke-width="0.8"/>
<path d="M1323 168l21 -21l21 21l-21 21z" fill="#398347" stroke="#398347" stroke-width="0.8"/>
<path d="M-42 189l21 -21l21 21l-21 21z" fill="#479053" stroke="#479053" stroke-width="0.8"/>
<path d="M0 189l21 -21l21 21l-21 21z" fill="#468550" stroke="#468550" stroke-width="0.8"/>
<path d="M42 189l21 -21l21 21l-21 21z" fill="#44834e" stroke="#44834e" stroke-width="0.8"/>
<path d="M84 189l21 -21l21 21l-21 21z" fill="#42844d" stroke="#42844d" stroke-width="0.8"/>
<path d="M126 189l21 -21l21 21l-21 21z" fill="#4c8a55" stroke="#4c8a55" stroke-width="0.8"/>
<path d="M168 189l21 -21l21 21l-21 21z" fill="#3d8c4c" stroke="#3d8c4c" stroke-width="0.8"/>
<path d="M210 189l21 -21l21 21l-21 21z" fill="#398a49" stroke="#398a49" stroke-width="0.8"/>
<path d="M252 189l21 -21l21 21l-21 21z" fill="#40854c" stroke="#40854c" stroke-width="0.8"/>
<path d="M294 189l21 -21l21 21l-21 21z" fill="#338744" stroke="#338744" stroke-width="0.8"/>
<path d="M336 189l21 -21l21 21l-21 21z" fill="#3e8a4c" stroke="#3e8a4c" stroke-width="0.8"/>
<path d="M378 189l21 -21l21 21l-21 21z" fill="#318443" stroke="#318443" stroke-width="0.8"/>
<path d="M420 189l21 -21l21 21l-21 21z" fill="#52935b" stroke="#52935b" stroke-width="0.8"/>
<path d="M462 189l21 -21l21 21l-21 21z" fill="#56945e" stroke="#56945e" stroke-width="0.8"/>
<path d="M504 189l21 -21l21 21l-21 21z" fill="#53915a" stroke="#53915a" stroke-width="0.8"/>
<path d="M546 189l21 -21l21 21l-21 21z" fill="#669769" stroke="#669769" stroke-width="0.8"/>
<path d="M588 189l21 -21l21 21l-21 21z" fill="#50925a" stroke="#50925a" stroke-width="0.8"/>
<path d="M630 189l21 -21l21 21l-21 21z" fill="#5e8b60" stroke="#5e8b60" stroke-width="0.8"/>
<path d="M672 189l21 -21l21 21l-21 21z" fill="#528156" stroke="#528156" stroke-width="0.8"/>
<path d="M714 189l21 -21l21 21l-21 21z" fill="#42784b" stroke="#42784b" stroke-width="0.8"/>
<path d="M756 189l21 -21l21 21l-21 21z" fill="#4b7c50" stroke="#4b7c50" stroke-width="0.8"/>
<path d="M798 189l21 -21l21 21l-21 21z" fill="#497d4f" stroke="#497d4f" stroke-width="0.8"/>
<path d="M840 189l21 -21l21 21l-21 21z" fill="#608c62" stroke="#608c62" stroke-width="0.8"/>
<path d="M882 189l21 -21l21 21l-21 21z" fill="#759e74" stroke="#759e74" stroke-width="0.8"/>
<path d="M924 189l21 -21l21 21l-21 21z" fill="#659266" stroke="#659266" stroke-width="0.8"/>
<path d="M966 189l21 -21l21 21l-21 21z" fill="#5d9462" stroke="#5d9462" stroke-width="0.8"/>
<path d="M1008 189l21 -21l21 21l-21 21z" fill="#5d9261" stroke="#5d9261" stroke-width="0.8"/>
<path d="M1050 189l21 -21l21 21l-21 21z" fill="#4a8c54" stroke="#4a8c54" stroke-width="0.8"/>
<path d="M1092 189l21 -21l21 21l-21 21z" fill="#428a4f" stroke="#428a4f" stroke-width="0.8"/>
<path d="M1134 189l21 -21l21 21l-21 21z" fill="#3b894a" stroke="#3b894a" stroke-width="0.8"/>
<path d="M1176 189l21 -21l21 21l-21 21z" fill="#45884f" stroke="#45884f" stroke-width="0.8"/>
<path d="M1218 189l21 -21l21 21l-21 21z" fill="#387d45" stroke="#387d45" stroke-width="0.8"/>
<path d="M1260 189l21 -21l21 21l-21 21z" fill="#368947" stroke="#368947" stroke-width="0.8"/>
<path d="M1302 189l21 -21l21 21l-21 21z" fill="#368345" stroke="#368345" stroke-width="0.8"/>
<path d="M1344 189l21 -21l21 21l-21 21z" fill="#308642" stroke="#308642" stroke-width="0.8"/>
<path d="M-63 210l21 -21l21 21l-21 21z" fill="#368345" stroke="#368345" stroke-width="0.8"/>
<path d="M-21 210l21 -21l21 21l-21 21z" fill="#42854d" stroke="#42854d" stroke-width="0.8"/>
<path d="M21 210l21 -21l21 21l-21 21z" fill="#497e4f" stroke="#497e4f" stroke-width="0.8"/>
<path d="M63 210l21 -21l21 21l-21 21z" fill="#498c54" stroke="#498c54" stroke-width="0.8"/>
<path d="M105 210l21 -21l21 21l-21 21z" fill="#518e59" stroke="#518e59" stroke-width="0.8"/>
<path d="M147 210l21 -21l21 21l-21 21z" fill="#3f8d4d" stroke="#3f8d4d" stroke-width="0.8"/>
<path d="M189 210l21 -21l21 21l-21 21z" fill="#468d52" stroke="#468d52" stroke-width="0.8"/>
<path d="M231 210l21 -21l21 21l-21 21z" fill="#317e42" stroke="#317e42" stroke-width="0.8"/>
<path d="M273 210l21 -21l21 21l-21 21z" fill="#358645" stroke="#358645" stroke-width="0.8"/>
<path d="M315 210l21 -21l21 21l-21 21z" fill="#368445" stroke="#368445" stroke-width="0.8"/>
<path d="M357 210l21 -21l21 21l-21 21z" fill="#3e824a" stroke="#3e824a" stroke-width="0.8"/>
<path d="M399 210l21 -21l21 21l-21 21z" fill="#338745" stroke="#338745" stroke-width="0.8"/>
<path d="M441 210l21 -21l21 21l-21 21z" fill="#508e59" stroke="#508e59" stroke-width="0.8"/>
<path d="M483 210l21 -21l21 21l-21 21z" fill="#669669" stroke="#669669" stroke-width="0.8"/>
<path d="M525 210l21 -21l21 21l-21 21z" fill="#649467" stroke="#649467" stroke-width="0.8"/>
<path d="M567 210l21 -21l21 21l-21 21z" fill="#619865" stroke="#619865" stroke-width="0.8"/>
<path d="M609 210l21 -21l21 21l-21 21z" fill="#5e8b60" stroke="#5e8b60" stroke-width="0.8"/>
<path d="M651 210l21 -21l21 21l-21 21z" fill="#528958" stroke="#528958" stroke-width="0.8"/>
<path d="M693 210l21 -21l21 21l-21 21z" fill="#3e7548" stroke="#3e7548" stroke-width="0.8"/>
<path d="M735 210l21 -21l21 21l-21 21z" fill="#46794d" stroke="#46794d" stroke-width="0.8"/>
<path d="M777 210l21 -21l21 21l-21 21z" fill="#5f8c61" stroke="#5f8c61" stroke-width="0.8"/>
<path d="M819 210l21 -21l21 21l-21 21z" fill="#598d5e" stroke="#598d5e" stroke-width="0.8"/>
<path d="M861 210l21 -21l21 21l-21 21z" fill="#5d8c60" stroke="#5d8c60" stroke-width="0.8"/>
<path d="M903 210l21 -21l21 21l-21 21z" fill="#679268" stroke="#679268" stroke-width="0.8"/>
<path d="M945 210l21 -21l21 21l-21 21z" fill="#609263" stroke="#609263" stroke-width="0.8"/>
<path d="M987 210l21 -21l21 21l-21 21z" fill="#649366" stroke="#649366" stroke-width="0.8"/>
<path d="M1029 210l21 -21l21 21l-21 21z" fill="#4f7f54" stroke="#4f7f54" stroke-width="0.8"/>
<path d="M1071 210l21 -21l21 21l-21 21z" fill="#3c8549" stroke="#3c8549" stroke-width="0.8"/>
<path d="M1113 210l21 -21l21 21l-21 21z" fill="#47814f" stroke="#47814f" stroke-width="0.8"/>
<path d="M1155 210l21 -21l21 21l-21 21z" fill="#427e4c" stroke="#427e4c" stroke-width="0.8"/>
<path d="M1197 210l21 -21l21 21l-21 21z" fill="#3d884b" stroke="#3d884b" stroke-width="0.8"/>
<path d="M1239 210l21 -21l21 21l-21 21z" fill="#317d42" stroke="#317d42" stroke-width="0.8"/>
<path d="M1281 210l21 -21l21 21l-21 21z" fill="#3e8149" stroke="#3e8149" stroke-width="0.8"/>
<path d="M1323 210l21 -21l21 21l-21 21z" fill="#45864f" stroke="#45864f" stroke-width="0.8"/>
<path d="M-42 231l21 -21l21 21l-21 21z" fill="#458d51" stroke="#458d51" stroke-width="0.8"/>
<path d="M0 231l21 -21l21 21l-21 21z" fill="#3d8c4c" stroke="#3d8c4c" stroke-width="0.8"/>
<path d="M42 231l21 -21l21 21l-21 21z" fill="#448a50" stroke="#448a50" stroke-width="0.8"/>
<path d="M84 231l21 -21l21 21l-21 21z" fill="#3c8b4c" stroke="#3c8b4c" stroke-width="0.8"/>
<path d="M126 231l21 -21l21 21l-21 21z" fill="#398848" stroke="#398848" stroke-width="0.8"/>
<path d="M168 231l21 -21l21 21l-21 21z" fill="#499155" stroke="#499155" stroke-width="0.8"/>
<path d="M210 231l21 -21l21 21l-21 21z" fill="#3c8b4b" stroke="#3c8b4b" stroke-width="0.8"/>
<path d="M252 231l21 -21l21 21l-21 21z" fill="#338845" stroke="#338845" stroke-width="0.8"/>
<path d="M294 231l21 -21l21 21l-21 21z" fill="#318642" stroke="#318642" stroke-width="0.8"/>
<path d="M336 231l21 -21l21 21l-21 21z" fill="#308542" stroke="#308542" stroke-width="0.8"/>
<path d="M378 231l21 -21l21 21l-21 21z" fill="#328042" stroke="#328042" stroke-width="0.8"/>
<path d="M420 231l21 -21l21 21l-21 21z" fill="#4e8956" stroke="#4e8956" stroke-width="0.8"/>
<path d="M462 231l21 -21l21 21l-21 21z" fill="#4f8c57" stroke="#4f8c57" stroke-width="0.8"/>
<path d="M504 231l21 -21l21 21l-21 21z" fill="#659868" stroke="#659868" stroke-width="0.8"/>
<path d="M546 231l21 -21l21 21l-21 21z" fill="#57905d" stroke="#57905d" stroke-width="0.8"/>
<path d="M588 231l21 -21l21 21l-21 21z" fill="#5b8c5f" stroke="#5b8c5f" stroke-width="0.8"/>
<path d="M630 231l21 -21l21 21l-21 21z" fill="#5d8e61" stroke="#5d8e61" stroke-width="0.8"/>
<path d="M672 231l21 -21l21 21l-21 21z" fill="#46784d" stroke="#46784d" stroke-width="0.8"/>
<path d="M714 231l21 -21l21 21l-21 21z" fill="#45854f" stroke="#45854f" stroke-width="0.8"/>
<path d="M756 231l21 -21l21 21l-21 21z" fill="#538558" stroke="#538558" stroke-width="0.8"/>
<path d="M798 231l21 -21l21 21l-21 21z" fill="#518657" stroke="#518657" stroke-width="0.8"/>
<path d="M840 231l21 -21l21 21l-21 21z" fill="#56895b" stroke="#56895b" stroke-width="0.8"/>
<path d="M882 231l21 -21l21 21l-21 21z" fill="#789f76" stroke="#789f76" stroke-width="0.8"/>
<path d="M924 231l21 -21l21 21l-21 21z" fill="#619364" stroke="#619364" stroke-width="0.8"/>
<path d="M966 231l21 -21l21 21l-21 21z" fill="#558b5a" stroke="#558b5a" stroke-width="0.8"/>
<path d="M1008 231l21 -21l21 21l-21 21z" fill="#528256" stroke="#528256" stroke-width="0.8"/>
<path d="M1050 231l21 -21l21 21l-21 21z" fill="#4d8153" stroke="#4d8153" stroke-width="0.8"/>
<path d="M1092 231l21 -21l21 21l-21 21z" fill="#457a4d" stroke="#457a4d" stroke-width="0.8"/>
<path d="M1134 231l21 -21l21 21l-21 21z" fill="#457e4d" stroke="#457e4d" stroke-width="0.8"/>
<path d="M1176 231l21 -21l21 21l-21 21z" fill="#398346" stroke="#398346" stroke-width="0.8"/>
<path d="M1218 231l21 -21l21 21l-21 21z" fill="#43884e" stroke="#43884e" stroke-width="0.8"/>
<path d="M1260 231l21 -21l21 21l-21 21z" fill="#328543" stroke="#328543" stroke-width="0.8"/>
<path d="M1302 231l21 -21l21 21l-21 21z" fill="#348645" stroke="#348645" stroke-width="0.8"/>
<path d="M1344 231l21 -21l21 21l-21 21z" fill="#388546" stroke="#388546" stroke-width="0.8"/>
<path d="M-63 252l21 -21l21 21l-21 21z" fill="#308342" stroke="#308342" stroke-width="0.8"/>
<path d="M-21 252l21 -21l21 21l-21 21z" fill="#3d864a" stroke="#3d864a" stroke-width="0.8"/>
<path d="M21 252l21 -21l21 21l-21 21z" fill="#3a8b4a" stroke="#3a8b4a" stroke-width="0.8"/>
<path d="M63 252l21 -21l21 21l-21 21z" fill="#428b4f" stroke="#428b4f" stroke-width="0.8"/>
<path d="M105 252l21 -21l21 21l-21 21z" fill="#448c51" stroke="#448c51" stroke-width="0.8"/>
<path d="M147 252l21 -21l21 21l-21 21z" fill="#3f8b4c" stroke="#3f8b4c" stroke-width="0.8"/>
<path d="M189 252l21 -21l21 21l-21 21z" fill="#438f51" stroke="#438f51" stroke-width="0.8"/>
<path d="M231 252l21 -21l21 21l-21 21z" fill="#318142" stroke="#318142" stroke-width="0.8"/>
<path d="M273 252l21 -21l21 21l-21 21z" fill="#308642" stroke="#308642" stroke-width="0.8"/>
<path d="M315 252l21 -21l21 21l-21 21z" fill="#357e44" stroke="#357e44" stroke-width="0.8"/>
<path d="M357 252l21 -21l21 21l-21 21z" fill="#338143" stroke="#338143" stroke-width="0.8"/>
<path d="M399 252l21 -21l21 21l-21 21z" fill="#387c46" stroke="#387c46" stroke-width="0.8"/>
<path d="M441 252l21 -21l21 21l-21 21z" fill="#4d9157" stroke="#4d9157" stroke-width="0.8"/>
<path d="M483 252l21 -21l21 21l-21 21z" fill="#458f52" stroke="#458f52" stroke-width="0.8"/>
<path d="M525 252l21 -21l21 21l-21 21z" fill="#649968" stroke="#649968" stroke-width="0.8"/>
<path d="M567 252l21 -21l21 21l-21 21z" fill="#5d8f61" stroke="#5d8f61" stroke-width="0.8"/>
<path d="M609 252l21 -21l21 21l-21 21z" fill="#619364" stroke="#619364" stroke-width="0.8"/>
<path d="M651 252l21 -21l21 21l-21 21z" fill="#44824e" stroke="#44824e" stroke-width="0.8"/>
<path d="M693 252l21 -21l21 21l-21 21z" fill="#4a8953" stroke="#4a8953" stroke-width="0.8"/>
<path d="M735 252l21 -21l21 21l-21 21z" fill="#56855a" stroke="#56855a" stroke-width="0.8"/>
<path d="M777 252l21 -21l21 21l-21 21z" fill="#568b5b" stroke="#568b5b" stroke-width="0.8"/>
<path d="M819 252l21 -21l21 21l-21 21z" fill="#57855a" stroke="#57855a" stroke-width="0.8"/>
<path d="M861 252l21 -21l21 21l-21 21z" fill="#659167" stroke="#659167" stroke-width="0.8"/>
<path d="M903 252l21 -21l21 21l-21 21z" fill="#659367" stroke="#659367" stroke-width="0.8"/>
<path d="M945 252l21 -21l21 21l-21 21z" fill="#4e8d56" stroke="#4e8d56" stroke-width="0.8"/>
<path d="M987 252l21 -21l21 21l-21 21z" fill="#5d8a60" stroke="#5d8a60" stroke-width="0.8"/>
<path d="M1029 252l21 -21l21 21l-21 21z" fill="#45844f" stroke="#45844f" stroke-width="0.8"/>
<path d="M1071 252l21 -21l21 21l-21 21z" fill="#4c8553" stroke="#4c8553" stroke-width="0.8"/>
<path d="M1113 252l21 -21l21 21l-21 21z" fill="#3b7d47" stroke="#3b7d47" stroke-width="0.8"/>
<path d="M1155 252l21 -21l21 21l-21 21z" fill="#48784e" stroke="#48784e" stroke-width="0.8"/>
<path d="M1197 252l21 -21l21 21l-21 21z" fill="#427c4b" stroke="#427c4b" stroke-width="0.8"/>
<path d="M1239 252l21 -21l21 21l-21 21z" fill="#548759" stroke="#548759" stroke-width="0.8"/>
<path d="M1281 252l21 -21l21 21l-21 21z" fill="#4c8754" stroke="#4c8754" stroke-width="0.8"/>
<path d="M1323 252l21 -21l21 21l-21 21z" fill="#328043" stroke="#328043" stroke-width="0.8"/>
<path d="M-42 273l21 -21l21 21l-21 21z" fill="#308342" stroke="#308342" stroke-width="0.8"/>
<path d="M0 273l21 -21l21 21l-21 21z" fill="#4a9155" stroke="#4a9155" stroke-width="0.8"/>
<path d="M42 273l21 -21l21 21l-21 21z" fill="#3a8a4a" stroke="#3a8a4a" stroke-width="0.8"/>
<path d="M84 273l21 -21l21 21l-21 21z" fill="#4e8d56" stroke="#4e8d56" stroke-width="0.8"/>
<path d="M126 273l21 -21l21 21l-21 21z" fill="#468450" stroke="#468450" stroke-width="0.8"/>
<path d="M168 273l21 -21l21 21l-21 21z" fill="#448950" stroke="#448950" stroke-width="0.8"/>
<path d="M210 273l21 -21l21 21l-21 21z" fill="#3a8a49" stroke="#3a8a49" stroke-width="0.8"/>
<path d="M252 273l21 -21l21 21l-21 21z" fill="#308542" stroke="#308542" stroke-width="0.8"/>
<path d="M294 273l21 -21l21 21l-21 21z" fill="#338544" stroke="#338544" stroke-width="0.8"/>
<path d="M336 273l21 -21l21 21l-21 21z" fill="#3c8b4b" stroke="#3c8b4b" stroke-width="0.8"/>
<path d="M378 273l21 -21l21 21l-21 21z" fill="#317f42" stroke="#317f42" stroke-width="0.8"/>
<path d="M420 273l21 -21l21 21l-21 21z" fill="#318242" stroke="#318242" stroke-width="0.8"/>
<path d="M462 273l21 -21l21 21l-21 21z" fill="#40844b" stroke="#40844b" stroke-width="0.8"/>
<path d="M504 273l21 -21l21 21l-21 21z" fill="#519159" stroke="#519159" stroke-width="0.8"/>
<path d="M546 273l21 -21l21 21l-21 21z" fill="#609364" stroke="#609364" stroke-width="0.8"/>
<path d="M588 273l21 -21l21 21l-21 21z" fill="#619364" stroke="#619364" stroke-width="0.8"/>
<path d="M630 273l21 -21l21 21l-21 21z" fill="#4f8b57" stroke="#4f8b57" stroke-width="0.8"/>
<path d="M672 273l21 -21l21 21l-21 21z" fill="#498551" stroke="#498551" stroke-width="0.8"/>
<path d="M714 273l21 -21l21 21l-21 21z" fill="#45814e" stroke="#45814e" stroke-width="0.8"/>
<path d="M756 273l21 -21l21 21l-21 21z" fill="#4e8555" stroke="#4e8555" stroke-width="0.8"/>
<path d="M798 273l21 -21l21 21l-21 21z" fill="#528857" stroke="#528857" stroke-width="0.8"/>
<path d="M840 273l21 -21l21 21l-21 21z" fill="#619164" stroke="#619164" stroke-width="0.8"/>
<path d="M882 273l21 -21l21 21l-21 21z" fill="#548558" stroke="#548558" stroke-width="0.8"/>
<path d="M924 273l21 -21l21 21l-21 21z" fill="#498752" stroke="#498752" stroke-width="0.8"/>
<path d="M966 273l21 -21l21 21l-21 21z" fill="#498b53" stroke="#498b53" stroke-width="0.8"/>
<path d="M1008 273l21 -21l21 21l-21 21z" fill="#41764a" stroke="#41764a" stroke-width="0.8"/>
<path d="M1050 273l21 -21l21 21l-21 21z" fill="#448b50" stroke="#448b50" stroke-width="0.8"/>
<path d="M1092 273l21 -21l21 21l-21 21z" fill="#447c4c" stroke="#447c4c" stroke-width="0.8"/>
<path d="M1134 273l21 -21l21 21l-21 21z" fill="#397a45" stroke="#397a45" stroke-width="0.8"/>
<path d="M1176 273l21 -21l21 21l-21 21z" fill="#3d7c48" stroke="#3d7c48" stroke-width="0.8"/>
<path d="M1218 273l21 -21l21 21l-21 21z" fill="#3f7748" stroke="#3f7748" stroke-width="0.8"/>
<path d="M1260 273l21 -21l21 21l-21 21z" fill="#3a8147" stroke="#3a8147" stroke-width="0.8"/>
<path d="M1302 273l21 -21l21 21l-21 21z" fill="#308442" stroke="#308442" stroke-width="0.8"/>
<path d="M1344 273l21 -21l21 21l-21 21z" fill="#308542" stroke="#308542" stroke-width="0.8"/>
<path d="M-63 294l21 -21l21 21l-21 21z" fill="#308642" stroke="#308642" stroke-width="0.8"/>
<path d="M-21 294l21 -21l21 21l-21 21z" fill="#308542" stroke="#308542" stroke-width="0.8"/>
<path d="M21 294l21 -21l21 21l-21 21z" fill="#3f884c" stroke="#3f884c" stroke-width="0.8"/>
<path d="M63 294l21 -21l21 21l-21 21z" fill="#318442" stroke="#318442" stroke-width="0.8"/>
<path d="M105 294l21 -21l21 21l-21 21z" fill="#4a8f55" stroke="#4a8f55" stroke-width="0.8"/>
<path d="M147 294l21 -21l21 21l-21 21z" fill="#348845" stroke="#348845" stroke-width="0.8"/>
<path d="M189 294l21 -21l21 21l-21 21z" fill="#3b8648" stroke="#3b8648" stroke-width="0.8"/>
<path d="M231 294l21 -21l21 21l-21 21z" fill="#368646" stroke="#368646" stroke-width="0.8"/>
<path d="M273 294l21 -21l21 21l-21 21z" fill="#428e4f" stroke="#428e4f" stroke-width="0.8"/>
<path d="M315 294l21 -21l21 21l-21 21z" fill="#317d42" stroke="#317d42" stroke-width="0.8"/>
<path d="M357 294l21 -21l21 21l-21 21z" fill="#377644" stroke="#377644" stroke-width="0.8"/>
<path d="M399 294l21 -21l21 21l-21 21z" fill="#3d7e48" stroke="#3d7e48" stroke-width="0.8"/>
<path d="M441 294l21 -21l21 21l-21 21z" fill="#317d42" stroke="#317d42" stroke-width="0.8"/>
<path d="M483 294l21 -21l21 21l-21 21z" fill="#558f5c" stroke="#558f5c" stroke-width="0.8"/>
<path d="M525 294l21 -21l21 21l-21 21z" fill="#5a9260" stroke="#5a9260" stroke-width="0.8"/>
<path d="M567 294l21 -21l21 21l-21 21z" fill="#54905c" stroke="#54905c" stroke-width="0.8"/>
<path d="M609 294l21 -21l21 21l-21 21z" fill="#588d5d" stroke="#588d5d" stroke-width="0.8"/>
<path d="M651 294l21 -21l21 21l-21 21z" fill="#518957" stroke="#518957" stroke-width="0.8"/>
<path d="M693 294l21 -21l21 21l-21 21z" fill="#528f5a" stroke="#528f5a" stroke-width="0.8"/>
<path d="M735 294l21 -21l21 21l-21 21z" fill="#4d8152" stroke="#4d8152" stroke-width="0.8"/>
<path d="M777 294l21 -21l21 21l-21 21z" fill="#508657" stroke="#508657" stroke-width="0.8"/>
<path d="M819 294l21 -21l21 21l-21 21z" fill="#669368" stroke="#669368" stroke-width="0.8"/>
<path d="M861 294l21 -21l21 21l-21 21z" fill="#57855a" stroke="#57855a" stroke-width="0.8"/>
<path d="M903 294l21 -21l21 21l-21 21z" fill="#609564" stroke="#609564" stroke-width="0.8"/>
<path d="M945 294l21 -21l21 21l-21 21z" fill="#4b8252" stroke="#4b8252" stroke-width="0.8"/>
<path d="M987 294l21 -21l21 21l-21 21z" fill="#4e7e52" stroke="#4e7e52" stroke-width="0.8"/>
<path d="M1029 294l21 -21l21 21l-21 21z" fill="#478650" stroke="#478650" stroke-width="0.8"/>
<path d="M1071 294l21 -21l21 21l-21 21z" fill="#41854c" stroke="#41854c" stroke-width="0.8"/>
<path d="M1113 294l21 -21l21 21l-21 21z" fill="#3f7e4a" stroke="#3f7e4a" stroke-width="0.8"/>
<path d="M1155 294l21 -21l21 21l-21 21z" fill="#469052" stroke="#469052" stroke-width="0.8"/>
<path d="M1197 294l21 -21l21 21l-21 21z" fill="#498050" stroke="#498050" stroke-width="0.8"/>
<path d="M1239 294l21 -21l21 21l-21 21z" fill="#4c8252" stroke="#4c8252" stroke-width="0.8"/>
<path d="M1281 294l21 -21l21 21l-21 21z" fill="#3b8549" stroke="#3b8549" stroke-width="0.8"/>
<path d="M1323 294l21 -21l21 21l-21 21z" fill="#308542" stroke="#308542" stroke-width="0.8"/>
<path d="M-42 315l21 -21l21 21l-21 21z" fill="#3f8d4d" stroke="#3f8d4d" stroke-width="0.8"/>
<path d="M0 315l21 -21l21 21l-21 21z" fill="#308642" stroke="#308642" stroke-width="0.8"/>
<path d="M42 315l21 -21l21 21l-21 21z" fill="#308442" stroke="#308442" stroke-width="0.8"/>
<path d="M84 315l21 -21l21 21l-21 21z" fill="#338745" stroke="#338745" stroke-width="0.8"/>
<path d="M126 315l21 -21l21 21l-21 21z" fill="#3e884b" stroke="#3e884b" stroke-width="0.8"/>
<path d="M168 315l21 -21l21 21l-21 21z" fill="#368846" stroke="#368846" stroke-width="0.8"/>
<path d="M210 315l21 -21l21 21l-21 21z" fill="#3b8749" stroke="#3b8749" stroke-width="0.8"/>
<path d="M252 315l21 -21l21 21l-21 21z" fill="#318242" stroke="#318242" stroke-width="0.8"/>
<path d="M294 315l21 -21l21 21l-21 21z" fill="#387c45" stroke="#387c45" stroke-width="0.8"/>
<path d="M336 315l21 -21l21 21l-21 21z" fill="#308642" stroke="#308642" stroke-width="0.8"/>
<path d="M378 315l21 -21l21 21l-21 21z" fill="#387e45" stroke="#387e45" stroke-width="0.8"/>
<path d="M420 315l21 -21l21 21l-21 21z" fill="#368947" stroke="#368947" stroke-width="0.8"/>
<path d="M462 315l21 -21l21 21l-21 21z" fill="#40824a" stroke="#40824a" stroke-width="0.8"/>
<path d="M504 315l21 -21l21 21l-21 21z" fill="#5f9363" stroke="#5f9363" stroke-width="0.8"/>
<path d="M546 315l21 -21l21 21l-21 21z" fill="#458850" stroke="#458850" stroke-width="0.8"/>
<path d="M588 315l21 -21l21 21l-21 21z" fill="#4d8c56" stroke="#4d8c56" stroke-width="0.8"/>
<path d="M630 315l21 -21l21 21l-21 21z" fill="#478951" stroke="#478951" stroke-width="0.8"/>
<path d="M672 315l21 -21l21 21l-21 21z" fill="#568459" stroke="#568459" stroke-width="0.8"/>
<path d="M714 315l21 -21l21 21l-21 21z" fill="#548859" stroke="#548859" stroke-width="0.8"/>
<path d="M756 315l21 -21l21 21l-21 21z" fill="#4b8954" stroke="#4b8954" stroke-width="0.8"/>
<path d="M798 315l21 -21l21 21l-21 21z" fill="#57855a" stroke="#57855a" stroke-width="0.8"/>
<path d="M840 315l21 -21l21 21l-21 21z" fill="#5d8a60" stroke="#5d8a60" stroke-width="0.8"/>
<path d="M882 315l21 -21l21 21l-21 21z" fill="#518758" stroke="#518758" stroke-width="0.8"/>
<path d="M924 315l21 -21l21 21l-21 21z" fill="#457c4d" stroke="#457c4d" stroke-width="0.8"/>
<path d="M966 315l21 -21l21 21l-21 21z" fill="#49794e" stroke="#49794e" stroke-width="0.8"/>
<path d="M1008 315l21 -21l21 21l-21 21z" fill="#40804a" stroke="#40804a" stroke-width="0.8"/>
<path d="M1050 315l21 -21l21 21l-21 21z" fill="#3b7d47" stroke="#3b7d47" stroke-width="0.8"/>
<path d="M1092 315l21 -21l21 21l-21 21z" fill="#447b4d" stroke="#447b4d" stroke-width="0.8"/>
<path d="M1134 315l21 -21l21 21l-21 21z" fill="#388547" stroke="#388547" stroke-width="0.8"/>
<path d="M1176 315l21 -21l21 21l-21 21z" fill="#3b7947" stroke="#3b7947" stroke-width="0.8"/>
<path d="M1218 315l21 -21l21 21l-21 21z" fill="#338344" stroke="#338344" stroke-width="0.8"/>
<path d="M1260 315l21 -21l21 21l-21 21z" fill="#3b8649" stroke="#3b8649" stroke-width="0.8"/>
<path d="M1302 315l21 -21l21 21l-21 21z" fill="#318643" stroke="#318643" stroke-width="0.8"/>
<path d="M1344 315l21 -21l21 21l-21 21z" fill="#308342" stroke="#308342" stroke-width="0.8"/>
<path d="M-63 336l21 -21l21 21l-21 21z" fill="#347d43" stroke="#347d43" stroke-width="0.8"/>
<path d="M-21 336l21 -21l21 21l-21 21z" fill="#348845" stroke="#348845" stroke-width="0.8"/>
<path d="M21 336l21 -21l21 21l-21 21z" fill="#3a8447" stroke="#3a8447" stroke-width="0.8"/>
<path d="M63 336l21 -21l21 21l-21 21z" fill="#3d854a" stroke="#3d854a" stroke-width="0.8"/>
<path d="M105 336l21 -21l21 21l-21 21z" fill="#328744" stroke="#328744" stroke-width="0.8"/>
<path d="M147 336l21 -21l21 21l-21 21z" fill="#318242" stroke="#318242" stroke-width="0.8"/>
<path d="M189 336l21 -21l21 21l-21 21z" fill="#317f42" stroke="#317f42" stroke-width="0.8"/>
<path d="M231 336l21 -21l21 21l-21 21z" fill="#378646" stroke="#378646" stroke-width="0.8"/>
<path d="M273 336l21 -21l21 21l-21 21z" fill="#398949" stroke="#398949" stroke-width="0.8"/>
<path d="M315 336l21 -21l21 21l-21 21z" fill="#347d43" stroke="#347d43" stroke-width="0.8"/>
<path d="M357 336l21 -21l21 21l-21 21z" fill="#3d7c48" stroke="#3d7c48" stroke-width="0.8"/>
<path d="M399 336l21 -21l21 21l-21 21z" fill="#41874d" stroke="#41874d" stroke-width="0.8"/>
<path d="M441 336l21 -21l21 21l-21 21z" fill="#317f42" stroke="#317f42" stroke-width="0.8"/>
<path d="M483 336l21 -21l21 21l-21 21z" fill="#388a48" stroke="#388a48" stroke-width="0.8"/>
<path d="M525 336l21 -21l21 21l-21 21z" fill="#4b8b55" stroke="#4b8b55" stroke-width="0.8"/>
<path d="M567 336l21 -21l21 21l-21 21z" fill="#518f59" stroke="#518f59" stroke-width="0.8"/>
<path d="M609 336l21 -21l21 21l-21 21z" fill="#3f894c" stroke="#3f894c" stroke-width="0.8"/>
<path d="M651 336l21 -21l21 21l-21 21z" fill="#508556" stroke="#508556" stroke-width="0.8"/>
<path d="M693 336l21 -21l21 21l-21 21z" fill="#598c5d" stroke="#598c5d" stroke-width="0.8"/>
<path d="M735 336l21 -21l21 21l-21 21z" fill="#528657" stroke="#528657" stroke-width="0.8"/>
<path d="M777 336l21 -21l21 21l-21 21z" fill="#5b895e" stroke="#5b895e" stroke-width="0.8"/>
<path d="M819 336l21 -21l21 21l-21 21z" fill="#4e8e58" stroke="#4e8e58" stroke-width="0.8"/>
<path d="M861 336l21 -21l21 21l-21 21z" fill="#578a5b" stroke="#578a5b" stroke-width="0.8"/>
<path d="M903 336l21 -21l21 21l-21 21z" fill="#4a8151" stroke="#4a8151" stroke-width="0.8"/>
<path d="M945 336l21 -21l21 21l-21 21z" fill="#488451" stroke="#488451" stroke-width="0.8"/>
<path d="M987 336l21 -21l21 21l-21 21z" fill="#3f7b49" stroke="#3f7b49" stroke-width="0.8"/>
<path d="M1029 336l21 -21l21 21l-21 21z" fill="#44854e" stroke="#44854e" stroke-width="0.8"/>
<path d="M1071 336l21 -21l21 21l-21 21z" fill="#3f7a49" stroke="#3f7a49" stroke-width="0.8"/>
<path d="M1113 336l21 -21l21 21l-21 21z" fill="#44844e" stroke="#44844e" stroke-width="0.8"/>
<path d="M1155 336l21 -21l21 21l-21 21z" fill="#3d844a" stroke="#3d844a" stroke-width="0.8"/>
<path d="M1197 336l21 -21l21 21l-21 21z" fill="#3d7e48" stroke="#3d7e48" stroke-width="0.8"/>
<path d="M1239 336l21 -21l21 21l-21 21z" fill="#398147" stroke="#398147" stroke-width="0.8"/>
<path d="M1281 336l21 -21l21 21l-21 21z" fill="#54905c" stroke="#54905c" stroke-width="0.8"/>
<path d="M1323 336l21 -21l21 21l-21 21z" fill="#318743" stroke="#318743" stroke-width="0.8"/>
<path d="M-42 357l21 -21l21 21l-21 21z" fill="#368446" stroke="#368446" stroke-width="0.8"/>
<path d="M0 357l21 -21l21 21l-21 21z" fill="#308342" stroke="#308342" stroke-width="0.8"/>
<path d="M42 357l21 -21l21 21l-21 21z" fill="#357b43" stroke="#357b43" stroke-width="0.8"/>
<path d="M84 357l21 -21l21 21l-21 21z" fill="#358244" stroke="#358244" stroke-width="0.8"/>
<path d="M126 357l21 -21l21 21l-21 21z" fill="#3f8d4e" stroke="#3f8d4e" stroke-width="0.8"/>
<path d="M168 357l21 -21l21 21l-21 21z" fill="#3d8a4c" stroke="#3d8a4c" stroke-width="0.8"/>
<path d="M210 357l21 -21l21 21l-21 21z" fill="#308642" stroke="#308642" stroke-width="0.8"/>
<path d="M252 357l21 -21l21 21l-21 21z" fill="#397f46" stroke="#397f46" stroke-width="0.8"/>
<path d="M294 357l21 -21l21 21l-21 21z" fill="#348845" stroke="#348845" stroke-width="0.8"/>
<path d="M336 357l21 -21l21 21l-21 21z" fill="#318643" stroke="#318643" stroke-width="0.8"/>
<path d="M378 357l21 -21l21 21l-21 21z" fill="#397845" stroke="#397845" stroke-width="0.8"/>
<path d="M420 357l21 -21l21 21l-21 21z" fill="#3a7a45" stroke="#3a7a45" stroke-width="0.8"/>
<path d="M462 357l21 -21l21 21l-21 21z" fill="#3c8349" stroke="#3c8349" stroke-width="0.8"/>
<path d="M504 357l21 -21l21 21l-21 21z" fill="#478751" stroke="#478751" stroke-width="0.8"/>
<path d="M546 357l21 -21l21 21l-21 21z" fill="#488952" stroke="#488952" stroke-width="0.8"/>
<path d="M588 357l21 -21l21 21l-21 21z" fill="#4d8855" stroke="#4d8855" stroke-width="0.8"/>
<path d="M630 357l21 -21l21 21l-21 21z" fill="#498451" stroke="#498451" stroke-width="0.8"/>
<path d="M672 357l21 -21l21 21l-21 21z" fill="#518d59" stroke="#518d59" stroke-width="0.8"/>
<path d="M714 357l21 -21l21 21l-21 21z" fill="#468851" stroke="#468851" stroke-width="0.8"/>
<path d="M756 357l21 -21l21 21l-21 21z" fill="#498351" stroke="#498351" stroke-width="0.8"/>
<path d="M798 357l21 -21l21 21l-21 21z" fill="#45874f" stroke="#45874f" stroke-width="0.8"/>
<path d="M840 357l21 -21l21 21l-21 21z" fill="#4c8553" stroke="#4c8553" stroke-width="0.8"/>
<path d="M882 357l21 -21l21 21l-21 21z" fill="#4e8455" stroke="#4e8455" stroke-width="0.8"/>
<path d="M924 357l21 -21l21 21l-21 21z" fill="#47784e" stroke="#47784e" stroke-width="0.8"/>
<path d="M966 357l21 -21l21 21l-21 21z" fill="#3b8348" stroke="#3b8348" stroke-width="0.8"/>
<path d="M1008 357l21 -21l21 21l-21 21z" fill="#417f4b" stroke="#417f4b" stroke-width="0.8"/>
<path d="M1050 357l21 -21l21 21l-21 21z" fill="#42864d" stroke="#42864d" stroke-width="0.8"/>
<path d="M1092 357l21 -21l21 21l-21 21z" fill="#338743" stroke="#338743" stroke-width="0.8"/>
<path d="M1134 357l21 -21l21 21l-21 21z" fill="#3b8348" stroke="#3b8348" stroke-width="0.8"/>
<path d="M1176 357l21 -21l21 21l-21 21z" fill="#3f7e49" stroke="#3f7e49" stroke-width="0.8"/>
<path d="M1218 357l21 -21l21 21l-21 21z" fill="#4c8955" stroke="#4c8955" stroke-width="0.8"/>
<path d="M1260 357l21 -21l21 21l-21 21z" fill="#3f7d49" stroke="#3f7d49" stroke-width="0.8"/>
<path d="M1302 357l21 -21l21 21l-21 21z" fill="#338343" stroke="#338343" stroke-width="0.8"/>
<path d="M1344 357l21 -21l21 21l-21 21z" fill="#358144" stroke="#358144" stroke-width="0.8"/>
<path d="M-63 378l21 -21l21 21l-21 21z" fill="#368847" stroke="#368847" stroke-width="0.8"/>
<path d="M-21 378l21 -21l21 21l-21 21z" fill="#308542" stroke="#308542" stroke-width="0.8"/>
<path d="M21 378l21 -21l21 21l-21 21z" fill="#378245" stroke="#378245" stroke-width="0.8"/>
<path d="M63 378l21 -21l21 21l-21 21z" fill="#308442" stroke="#308442" stroke-width="0.8"/>
<path d="M105 378l21 -21l21 21l-21 21z" fill="#308642" stroke="#308642" stroke-width="0.8"/>
<path d="M147 378l21 -21l21 21l-21 21z" fill="#308642" stroke="#308642" stroke-width="0.8"/>
<path d="M189 378l21 -21l21 21l-21 21z" fill="#398748" stroke="#398748" stroke-width="0.8"/>
<path d="M231 378l21 -21l21 21l-21 21z" fill="#3b8148" stroke="#3b8148" stroke-width="0.8"/>
<path d="M273 378l21 -21l21 21l-21 21z" fill="#348044" stroke="#348044" stroke-width="0.8"/>
<path d="M315 378l21 -21l21 21l-21 21z" fill="#318643" stroke="#318643" stroke-width="0.8"/>
<path d="M357 378l21 -21l21 21l-21 21z" fill="#377f45" stroke="#377f45" stroke-width="0.8"/>
<path d="M399 378l21 -21l21 21l-21 21z" fill="#348344" stroke="#348344" stroke-width="0.8"/>
<path d="M441 378l21 -21l21 21l-21 21z" fill="#3e894c" stroke="#3e894c" stroke-width="0.8"/>
<path d="M483 378l21 -21l21 21l-21 21z" fill="#317f42" stroke="#317f42" stroke-width="0.8"/>
<path d="M525 378l21 -21l21 21l-21 21z" fill="#428b4e" stroke="#428b4e" stroke-width="0.8"/>
<path d="M567 378l21 -21l21 21l-21 21z" fill="#308642" stroke="#308642" stroke-width="0.8"/>
<path d="M609 378l21 -21l21 21l-21 21z" fill="#4d8554" stroke="#4d8554" stroke-width="0.8"/>
<path d="M651 378l21 -21l21 21l-21 21z" fill="#308442" stroke="#308442" stroke-width="0.8"/>
<path d="M693 378l21 -21l21 21l-21 21z" fill="#43884f" stroke="#43884f" stroke-width="0.8"/>
<path d="M735 378l21 -21l21 21l-21 21z" fill="#40834b" stroke="#40834b" stroke-width="0.8"/>
<path d="M777 378l21 -21l21 21l-21 21z" fill="#437f4d" stroke="#437f4d" stroke-width="0.8"/>
<path d="M819 378l21 -21l21 21l-21 21z" fill="#518857" stroke="#518857" stroke-width="0.8"/>
<path d="M861 378l21 -21l21 21l-21 21z" fill="#497e4f" stroke="#497e4f" stroke-width="0.8"/>
<path d="M903 378l21 -21l21 21l-21 21z" fill="#47814e" stroke="#47814e" stroke-width="0.8"/>
<path d="M945 378l21 -21l21 21l-21 21z" fill="#427c4b" stroke="#427c4b" stroke-width="0.8"/>
<path d="M987 378l21 -21l21 21l-21 21z" fill="#4c8252" stroke="#4c8252" stroke-width="0.8"/>
<path d="M1029 378l21 -21l21 21l-21 21z" fill="#40814b" stroke="#40814b" stroke-width="0.8"/>
<path d="M1071 378l21 -21l21 21l-21 21z" fill="#407e4a" stroke="#407e4a" stroke-width="0.8"/>
<path d="M1113 378l21 -21l21 21l-21 21z" fill="#478450" stroke="#478450" stroke-width="0.8"/>
<path d="M1155 378l21 -21l21 21l-21 21z" fill="#318442" stroke="#318442" stroke-width="0.8"/>
<path d="M1197 378l21 -21l21 21l-21 21z" fill="#368445" stroke="#368445" stroke-width="0.8"/>
<path d="M1239 378l21 -21l21 21l-21 21z" fill="#398046" stroke="#398046" stroke-width="0.8"/>
<path d="M1281 378l21 -21l21 21l-21 21z" fill="#3e884b" stroke="#3e884b" stroke-width="0.8"/>
<path d="M1323 378l21 -21l21 21l-21 21z" fill="#3e894b" stroke="#3e894b" stroke-width="0.8"/></g>
</g>
<text x="76.0" y="108.0" font-size="56" fill="#e8efe2" textLength="234.0" lengthAdjust="spacingAndGlyphs" letter-spacing="8">GITHUB</text>
<text x="76.0" y="188.0" font-size="56" fill="#e8efe2" textLength="334.0" lengthAdjust="spacingAndGlyphs" letter-spacing="8">FLAVORED</text>
<text x="76.0" y="268.0" font-size="56" fill="#e8efe2" textLength="410.0" lengthAdjust="spacingAndGlyphs" letter-spacing="8">MARKDOWN</text>
<rect x="1029.7073933437568" y="67.00915791824883" width="105" height="63" fill="#ffffff" rx="8" fill-opacity="0.42"/>
<rect x="1044.2260442260442" y="80.96939915121733" width="30" height="34" fill="#3a8546"/>
<rect x="1088.8988161715436" y="80.96939915121733" width="22" height="34" fill="#3a8546"/>
<text x="1155.9" y="122.9" font-size="60" fill="#ffffff" fill-opacity="0.5">+</text>
<circle cx="1229" cy="101" r="30" fill="none" stroke="#ffffff" stroke-opacity="0.45" stroke-width="9"/>
<rect x="0" y="364" width="1329" height="184" fill="#6eb962"/>
<rect x="80" y="420" width="1120" height="12" fill="#a6d49d"/><rect x="80" y="460" width="728" height="12" fill="#a6d49d"/>
<rect x="80" y="610" width="330" height="14" fill="#86c97e"/>
<rect x="80" y="650" width="320" height="15" fill="#a9ad9d"/><rect x="80" y="680" width="320" height="15" fill="#a9ad9d"/><rect x="80" y="710" width="320" height="15" fill="#a9ad9d"/><rect x="80" y="740" width="320" height="15" fill="#a9ad9d"/><rect x="80" y="770" width="320" height="15" fill="#a9ad9d"/><rect x="80" y="800" width="320" height="15" fill="#a9ad9d"/><rect x="80" y="830" width="176" height="15" fill="#a9ad9d"/>
<rect x="80" y="925" width="260" height="14" fill="#86c97e"/>
<rect x="80" y="965" width="320" height="15" fill="#a9ad9d"/><rect x="80" y="995" width="320" height="15" fill="#a9ad9d"/><rect x="80" y="1025" width="160" height="15" fill="#a9ad9d"/>
<rect x="80" y="1055" width="330" height="110" fill="#f3f4ec"/>
<rect x="95" y="1080" width="285" height="8" fill="#c8c8c0"/><rect x="95" y="1105" width="285" height="8" fill="#c8c8c0"/><rect x="95" y="1130" width="228" height="8" fill="#c8c8c0"/>
<rect x="80" y="1220" width="110" height="14" fill="#86c97e"/>
<rect x="80" y="1260" width="320" height="15" fill="#7d8270"/><rect x="80" y="1290" width="320" height="15" fill="#7d8270"/><rect x="80" y="1320" width="192" height="15" fill="#7d8270"/>
<rect x="80" y="1300" width="330" height="120" fill="#f3f4ec"/>
<rect x="80" y="1420" width="330" height="80" fill="#ffffff"/>
<rect x="95" y="1325" width="265" height="8" fill="#c8c8c0"/><rect x="95" y="1350" width="212" height="8" fill="#c8c8c0"/>
<rect x="95" y="1460" width="160" height="20" fill="#e0b060"/>
<rect x="505" y="610" width="350" height="14" fill="#86c97e"/>
<rect x="505" y="650" width="725" height="15" fill="#a9ad9d"/><rect x="505" y="680" width="725" height="15" fill="#a9ad9d"/><rect x="505" y="710" width="435" height="15" fill="#a9ad9d"/>
<rect x="505" y="755" width="450" height="140" fill="#f3f4ec"/>
<rect x="520" y="780" width="380" height="8" fill="#c8c8c0"/><rect x="520" y="805" width="380" height="8" fill="#c8c8c0"/><rect x="520" y="830" width="380" height="8" fill="#c8c8c0"/><rect x="520" y="855" width="266" height="8" fill="#c8c8c0"/>
<rect x="980" y="755" width="330" height="120" fill="#ffffff"/>
<rect x="1000" y="800" width="280" height="25" fill="#f0c8c0"/>
<rect x="505" y="925" width="180" height="14" fill="#86c97e"/>
<rect x="505" y="965" width="350" height="200" fill="#f3f4ec"/>
<rect x="520" y="990" width="300" height="8" fill="#c8c8c0"/><rect x="520" y="1015" width="300" height="8" fill="#c8c8c0"/><rect x="520" y="1040" width="300" height="8" fill="#c8c8c0"/><rect x="520" y="1065" width="300" height="8" fill="#c8c8c0"/><rect x="520" y="1090" width="300" height="8" fill="#c8c8c0"/><rect x="520" y="1115" width="180" height="8" fill="#c8c8c0"/>
<rect x="505" y="1165" width="350" height="150" fill="#ffffff"/>
<rect x="520" y="1190" width="300" height="8" fill="#b8bcd0"/><rect x="520" y="1220" width="300" height="8" fill="#b8bcd0"/><rect x="520" y="1250" width="300" height="8" fill="#b8bcd0"/><rect x="520" y="1280" width="210" height="8" fill="#b8bcd0"/>
<rect x="915" y="925" width="140" height="14" fill="#86c97e"/>
<rect x="915" y="965" width="325" height="15" fill="#a9ad9d"/><rect x="915" y="995" width="325" height="15" fill="#a9ad9d"/><rect x="915" y="1025" width="325" height="15" fill="#a9ad9d"/><rect x="915" y="1055" width="325" height="15" fill="#a9ad9d"/><rect x="915" y="1085" width="130" height="15" fill="#a9ad9d"/>
<rect x="915" y="1120" width="340" height="120" fill="#f3f4ec"/>
<rect x="930" y="1145" width="290" height="8" fill="#c8c8c0"/><rect x="930" y="1173" width="290" height="8" fill="#c8c8c0"/><rect x="930" y="1201" width="261" height="8" fill="#c8c8c0"/>
<rect x="915" y="1240" width="340" height="140" fill="#ffffff"/>
<rect x="930" y="1270" width="290" height="8" fill="#d0d0c8"/><rect x="930" y="1305" width="290" height="8" fill="#d0d0c8"/><rect x="930" y="1340" width="290" height="8" fill="#d0d0c8"/></g></defs>
<rect x="94.5" y="19.5" width="2690" height="1757" rx="25" fill="#0c0c0c"/>
<rect x="96.5" y="21.5" width="2686" height="1753" rx="23" fill="#2a2a2a" stroke="#646464" stroke-width="2"/>
<circle cx="124" cy="49" r="12" fill="#f26c5f"/>
<circle cx="164" cy="49" r="12" fill="#f5bf4f"/>
<circle cx="204" cy="49" r="12" fill="#5ec347"/>
<text x="1199.0" y="57.0" font-size="28" fill="#a6a6a6" font-weight="bold" textLength="481.0" lengthAdjust="spacingAndGlyphs">PDF Auditor — markdown_syntax.pdf</text>
<rect x="116.5" y="98.5" width="327" height="1658" fill="#3e3e3e" stroke="#474747" stroke-width="1"/>
<rect x="141" y="122" width="250" height="364" fill="#ffffff" rx="11"/>
<text x="230.0" y="469.7" font-size="24" fill="#111111" textLength="72.7" lengthAdjust="spacingAndGlyphs" stroke="#111" stroke-width="0.7">Page 1</text>
<rect x="141" y="512" width="250" height="364" fill="#ffffff" rx="11"/>
<text x="228.6" y="860.0" font-size="24" fill="#111111" textLength="75.1" lengthAdjust="spacingAndGlyphs" stroke="#111" stroke-width="0.7">Page 2</text>
<g transform="translate(148,133) scale(0.17908)" filter="url(#thblur)"><use href="#pg1"/></g>
<g transform="translate(148,523) scale(0.17908)" filter="url(#thblur)"><use href="#pg2"/></g>
<rect x="414" y="98" width="27" height="1655" fill="#2a2a2a"/><rect x="415" y="99" width="25" height="25" fill="#242424"/><rect x="417" y="101" width="21" height="21" fill="#3d3d3d" stroke="#5a5a5a" stroke-width="2" rx="1"/><path d="M419.5 115.5L427.5 107.5L435.5 115.5z" fill="#bdbdbd"/><rect x="415" y="125" width="25" height="1601" fill="#3a3a3a"/><rect x="415" y="126" width="25" height="1600" fill="#242424"/><rect x="417" y="127" width="21" height="1597" fill="#3e3e3e" stroke="#5a5a5a" stroke-width="2" rx="1"/><rect x="415" y="1727" width="25" height="25" fill="#242424"/><rect x="417" y="1729" width="21" height="21" fill="#3d3d3d" stroke="#5a5a5a" stroke-width="2" rx="1"/><path d="M419.5 1735.5L427.5 1743.5L435.5 1735.5z" fill="#bdbdbd"/>
<rect x="466" y="99" width="1354" height="1586" fill="#3f3f3f"/>
<rect x="1813" y="118" width="7" height="1567" fill="#2b2b2b"/>
<g clip-path="url(#viewclip)"><g transform="translate(485,118)"><use href="#pg1"/></g></g>
<rect x="485" y="117" width="1330" height="2" fill="#c3c3c3"/>
<rect x="484" y="117" width="2" height="1568" fill="#c3c3c3"/>
<rect x="1813" y="117" width="2" height="1568" fill="#bdbdbd"/>
<rect x="1820" y="99" width="42" height="1586" fill="#3f3f3f"/>
<rect x="1834" y="98" width="27" height="1586" fill="#2a2a2a"/><rect x="1835" y="99" width="25" height="25" fill="#242424"/><rect x="1837" y="101" width="21" height="21" fill="#3d3d3d" stroke="#5a5a5a" stroke-width="2" rx="1"/><path d="M1839.5 115.5L1847.5 107.5L1855.5 115.5z" fill="#bdbdbd"/><rect x="1835" y="125" width="25" height="1532" fill="#3a3a3a"/><rect x="1835" y="126" width="25" height="694" fill="#242424"/><rect x="1837" y="127" width="21" height="691" fill="#3e3e3e" stroke="#5a5a5a" stroke-width="2" rx="1"/><rect x="1835" y="1658" width="25" height="25" fill="#242424"/><rect x="1837" y="1660" width="21" height="21" fill="#3d3d3d" stroke="#5a5a5a" stroke-width="2" rx="1"/><path d="M1839.5 1666.5L1847.5 1674.5L1855.5 1666.5z" fill="#bdbdbd"/>
<path fill="none" stroke="#e0e0e0" stroke-width="2.6" stroke-linecap="round" stroke-linejoin="round" d="M487 1732V1708H497L500 1712H514V1717"/>
<path fill="none" stroke="#e0e0e0" stroke-width="2.6" stroke-linecap="round" stroke-linejoin="round" d="M487 1732L493 1717H520L514 1732z"/>
<rect x="534.5" y="1695.5" width="51" height="49" rx="4" fill="#383838" stroke="#4c4c4c" stroke-width="1.5"/>
<path fill="none" stroke="#e0e0e0" stroke-width="2.6" stroke-linecap="round" stroke-linejoin="round" d="M545 1706H575V1732H545z"/>
<path fill="none" stroke="#e0e0e0" stroke-width="2.2" d="M553 1706V1732M547.5 1711H551M547.5 1715H551M547.5 1719H551"/>
<path fill="none" stroke="#e0e0e0" stroke-width="2.6" stroke-linecap="round" stroke-linejoin="round" d="M948 1706L934 1719L948 1732"/>
<path fill="none" stroke="#e0e0e0" stroke-width="2.6" stroke-linecap="round" stroke-linejoin="round" d="M1086 1706L1100 1719L1086 1732"/>
<rect x="973" y="1699" width="88" height="40" rx="4" fill="#161616"/>
<rect x="1033.5" y="1699.5" width="26" height="39" rx="3" fill="#3c3c3c" stroke="#4a4a4a" stroke-width="1"/>
<path d="M1040.5 1715.0L1046.5 1708.0L1052.5 1715.0z" fill="#a8a8a8"/>
<path d="M1040.5 1724.0L1046.5 1731.0L1052.5 1724.0z" fill="#8a8a8a"/>
<text x="996.0" y="1727.4" font-size="26" fill="#e6e6e6">1</text>
<rect x="1129" y="1705" width="2" height="28" fill="#3c3c3c"/>
<circle cx="1161" cy="1715.5" r="13" fill="none" stroke="#e0e0e0" stroke-width="2.6" stroke-linecap="round" stroke-linejoin="round"/>
<path fill="none" stroke="#e0e0e0" stroke-width="2.6" stroke-linecap="round" stroke-linejoin="round" d="M1155 1715.5H1167M1171 1725.5L1179 1733.5"/>
<rect x="1195" y="1697" width="160" height="44" rx="4" fill="#161616"/>
<rect x="1316.5" y="1697.5" width="38" height="43" rx="3" fill="#3d3d3d" stroke="#4a4a4a" stroke-width="1"/>
<path d="M1327.5 1715.0L1335.5 1723.0L1343.5 1715.0z" fill="#b0b0b0"/>
<text x="1202.0" y="1727.5" font-size="27" fill="#ececec" textLength="107.0" lengthAdjust="spacingAndGlyphs">Fit Width</text>
<circle cx="1385" cy="1715.5" r="13" fill="none" stroke="#e0e0e0" stroke-width="2.6" stroke-linecap="round" stroke-linejoin="round"/>
<path fill="none" stroke="#e0e0e0" stroke-width="2.6" stroke-linecap="round" stroke-linejoin="round" d="M1379 1715.5H1391M1385 1709.5V1721.5M1395 1725.5L1403 1733.5"/>
<circle cx="1768" cy="1718.5" r="15" fill="none" stroke="#e0e0e0" stroke-width="2.6" stroke-linecap="round" stroke-linejoin="round"/>
<path fill="none" stroke="#e0e0e0" stroke-width="2.6" stroke-linecap="round" stroke-linejoin="round" d="M1763 1714a5 5 0 1 1 7.5 4.3Q1768 1720 1768 1723"/>
<circle cx="1768" cy="1728" r="1.8" fill="#e0e0e0"/>
<path d="M1781.0 1733.0L1786 1739.0L1791.0 1733.0z" fill="#b0b0b0"/>
<path fill="none" stroke="#e0e0e0" stroke-width="2.6" stroke-linecap="round" stroke-linejoin="round" d="M1813 1707.5L1838 1731.5M1838 1707.5L1813 1731.5"/>
<path fill="none" stroke="#dcdcdc" stroke-width="2.6" stroke-linecap="round" stroke-linejoin="round" d="M1907 129.5V116.5H1924.5L1933 125V129.5M1924.5 117V124.5H1932.5"/>
<text x="1906" y="144.5" font-size="15" font-weight="bold" fill="#dcdcdc" textLength="29" lengthAdjust="spacingAndGlyphs">PDF</text>
<path fill="none" stroke="#dcdcdc" stroke-width="2.6" stroke-linecap="round" stroke-linejoin="round" d="M1964 121H1967M1973 121H1992"/>
<path fill="none" stroke="#dcdcdc" stroke-width="2.6" stroke-linecap="round" stroke-linejoin="round" d="M1964 131H1967M1973 131H1992"/>
<path fill="none" stroke="#dcdcdc" stroke-width="2.6" stroke-linecap="round" stroke-linejoin="round" d="M1964 141H1967M1973 141H1992"/>
<path fill="none" stroke="#dcdcdc" stroke-width="2.6" stroke-linecap="round" stroke-linejoin="round" d="M2030 121V118a3 3 0 0 1 3 -3H2042L2049 122V136a3 3 0 0 1 -3 3H2044"/>
<path fill="none" stroke="#dcdcdc" stroke-width="2.6" stroke-linecap="round" stroke-linejoin="round" d="M2026 122H2036L2043 129V143a3 3 0 0 1 -3 3H2026a3 3 0 0 1 -3 -3V125a3 3 0 0 1 3 -3z"/>
<path fill="none" stroke="#dcdcdc" stroke-width="2" d="M2029 135H2038M2029 140H2038"/>
<path fill="none" stroke="#dcdcdc" stroke-width="2.6" stroke-linecap="round" stroke-linejoin="round" d="M2084.5 116.5H2104V146L2094.2 138.5L2084.5 146z"/>
<g transform="translate(2152.5,131) scale(0.88) translate(-2152.5,-131)">
<path fill="none" stroke="#dcdcdc" stroke-width="2.6" stroke-linecap="round" stroke-linejoin="round" d="M2149 123L2156.5 115.5A8 8 0 0 1 2167.8 126.8L2160 134.5"/>
<path fill="none" stroke="#dcdcdc" stroke-width="2.6" stroke-linecap="round" stroke-linejoin="round" d="M2144.5 127.5L2137.2 134.8A8 8 0 0 0 2148.5 146.1L2155.5 139"/>
<path fill="none" stroke="#dcdcdc" stroke-width="2.6" stroke-linecap="round" stroke-linejoin="round" d="M2147 136L2157 126"/>
</g>
<path fill="none" stroke="#dcdcdc" stroke-width="2.6" stroke-linecap="round" stroke-linejoin="round" d="M2210.5 117.5H2197a1.5 1.5 0 0 0 -1.5 1.5V144a1.5 1.5 0 0 0 1.5 1.5H2223a1.5 1.5 0 0 0 1.5 -1.5V130.5"/>
<path fill="none" stroke="#dcdcdc" stroke-width="2.6" stroke-linecap="round" stroke-linejoin="round" d="M2204.5 131L2219.7 115.7L2225.5 121.5L2210 136.7H2204.5z M2216.5 119L2222.2 124.7"/>
<path fill="none" stroke="#dcdcdc" stroke-width="2.6" stroke-linecap="round" stroke-linejoin="round" d="M2263 121.5H2251.5a1.5 1.5 0 0 0 -1.5 1.5V139a1.5 1.5 0 0 0 1.5 1.5H2263"/>
<path fill="none" stroke="#dcdcdc" stroke-width="2.6" stroke-linecap="round" stroke-linejoin="round" d="M2265.5 117.5V144.5"/>
<path fill="none" stroke="#dcdcdc" stroke-width="2.6" stroke-linecap="round" stroke-linejoin="round" d="M2270 121.5H2285a1.5 1.5 0 0 1 1.5 1.5V139a1.5 1.5 0 0 1 -1.5 1.5H2270"/>
<path fill="none" stroke="#dcdcdc" stroke-width="2.2" d="M2254 128.8H2262M2258 128.8V135.5"/>
<path fill="none" stroke="#dcdcdc" stroke-width="2.6" stroke-linecap="round" stroke-linejoin="round" d="M2309.5 146L2314 134C2311 126 2311 116 2317 115.5C2323 115.5 2320 126 2315 134C2318 130 2320 127 2322 128.5C2324 130 2323 134 2325 134C2327 134 2328 129 2330 129C2332 129 2332 134 2335 134C2338 134 2341 133 2343 133.5"/>
<path fill="none" stroke="#dcdcdc" stroke-width="2.6" stroke-linecap="round" stroke-linejoin="round" d="M2310 138.5H2343"/>
<path fill="none" stroke="#dcdcdc" stroke-width="2.6" stroke-linecap="round" stroke-linejoin="round" d="M2386 126L2375 137a4 4 0 0 0 6 6L2396 128a7 7 0 0 0 -10 -10L2371 133a10 10 0 0 0 14 14L2394 138"/>
<path fill="none" stroke="#dcdcdc" stroke-width="2.6" stroke-linecap="round" stroke-linejoin="round" d="M2428 126.5H2456V145H2428z"/>
<path fill="none" stroke="#dcdcdc" stroke-width="2.6" stroke-linecap="round" stroke-linejoin="round" d="M2436 125V119a6 6 0 0 1 12 0V125"/>
<circle cx="2442" cy="135" r="2" fill="#dcdcdc"/>
<path fill="none" stroke="#dcdcdc" stroke-width="2.6" stroke-linecap="round" stroke-linejoin="round" d="M2492 120.5L2482 131L2492 137.5M2509 120.5L2518 131L2509 137.5M2506 116.5L2494 145.5"/>
<rect x="2532" y="107" width="52" height="49" rx="5" fill="#353535" stroke="#4c4c4c" stroke-width="1.5"/>
<path fill="none" stroke="#1b8fd2" stroke-width="2.6" stroke-linejoin="round" d="M2544 118H2572V131Q2572 142 2558 148Q2544 142 2544 131z"/>
<path fill="none" stroke="#1b8fd2" stroke-width="2.6" stroke-linecap="round" stroke-linejoin="round" d="M2551 132L2556 137L2565 127"/>
<path fill="none" stroke="#dcdcdc" stroke-width="2.6" stroke-linecap="round" stroke-linejoin="round" d="M2597.5 141.5L2608 119L2618.5 141.5M2601.5 134.5H2614.5M2632 127.5V141.5"/>
<circle cx="2625.3" cy="135" r="6.6" fill="none" stroke="#dcdcdc" stroke-width="2.6" stroke-linecap="round" stroke-linejoin="round"/>
<path fill="none" stroke="#dcdcdc" stroke-width="2.6" stroke-linecap="round" stroke-linejoin="round" d="M2659 118H2690V144H2659z"/>
<path fill="none" stroke="#dcdcdc" stroke-width="2.6" stroke-linecap="round" stroke-linejoin="round" d="M2660 139L2670 130L2681 141.5M2677 135.5L2682 132.5L2689 138.5"/>
<circle cx="2678.5" cy="124.5" r="2" fill="#dcdcdc"/>
<path d="M1939 182H1896a6 6 0 0 0 -6 6V258a6 6 0 0 0 6 6H1939z" fill="#363636" stroke="#4a4a4a" stroke-width="1.5"/>
<rect x="1902" y="217" width="7.5" height="7.5" rx="1.5" fill="none" stroke="#e0e0e0" stroke-width="2.2"/>
<rect x="1915" y="217" width="7.5" height="7.5" rx="1.5" fill="none" stroke="#e0e0e0" stroke-width="2.2"/>
<rect x="1902" y="230" width="7.5" height="7.5" rx="1.5" fill="none" stroke="#e0e0e0" stroke-width="2.2"/>
<rect x="1915" y="230" width="7.5" height="7.5" rx="1.5" fill="none" stroke="#e0e0e0" stroke-width="2.2"/>
<path d="M1939 270H1893a6 6 0 0 0 -6 6V462a6 6 0 0 0 6 6H1939z" fill="#3a3a3a" stroke="#4a4a4a" stroke-width="1.5"/>
<text transform="translate(1921.5,405) rotate(-90)" x="0" y="0" font-size="27" fill="#e0e0e0" textLength="112" lengthAdjust="spacingAndGlyphs">Forensics</text>
<path fill="none" stroke="#dedede" stroke-width="2.4" stroke-linecap="round" stroke-linejoin="round" d="M1900 420V443H1910Q1919 441 1923 431.5Q1919 422 1910 420z" transform="rotate(0)"/>
<path fill="none" stroke="#e0e0e0" stroke-width="2" stroke-linecap="round" d="M1907 426L1912 431L1907 436"/>
<rect x="1938.5" y="180.5" width="822" height="1572" fill="#3d3d3d" stroke="#4c4c4c" stroke-width="1"/>
<path fill="none" stroke="#dedede" stroke-width="2.2" stroke-linejoin="round" d="M1963 214.5H1989V227Q1989 236 1976 240.5Q1963 236 1963 227z"/>
<path fill="none" stroke="#dedede" stroke-width="2.2" stroke-linecap="round" stroke-linejoin="round" d="M1970 227L1974.5 231.5L1982 223"/>
<text x="2007.0" y="237.0" font-size="33" fill="#e8e8e8" font-weight="bold" textLength="392.0" lengthAdjust="spacingAndGlyphs" stroke="#e8e8e8" stroke-width="0.3">Deep PDF Forensic Analysis</text>
<path fill="none" stroke="#dedede" stroke-width="2.4" stroke-linecap="round" stroke-linejoin="round" d="M2637 214H2625.5V237.5H2649.5V226"/>
<path fill="none" stroke="#dedede" stroke-width="2.4" stroke-linecap="round" stroke-linejoin="round" d="M2638 225L2650.5 212.5M2641.5 212H2651V221.5"/>
<path fill="none" stroke="#dedede" stroke-width="2.4" stroke-linecap="round" stroke-linejoin="round" d="M2680 215L2700.5 235.5M2700.5 215L2680 235.5"/>
<text x="1959.0" y="308.4" font-size="26.5" fill="#e8e8e8" textLength="247.0" lengthAdjust="spacingAndGlyphs" stroke="#e8e8e8" stroke-width="0.4">Incremental Updates</text>
<rect x="1960.5" y="320.5" width="752" height="302" rx="5" fill="none" stroke="#474747" stroke-width="2"/>
<text x="1982.6" y="369.0" font-size="26.5" fill="#e8e8e8" textLength="151.0" lengthAdjust="spacingAndGlyphs" stroke="#e8e8e8" stroke-width="0.4">EOF Markers</text>
<circle cx="2153.5" cy="360" r="10.5" fill="none" stroke="#dedede" stroke-width="1.8"/>
<rect x="2152.3" y="357" width="2.4" height="9.5" fill="#dedede"/><circle cx="2153.5" cy="353.5" r="1.5" fill="#dedede"/>
<text x="2294.0" y="369.0" font-size="26.5" fill="#e2553f">2</text>
<path d="M1990 402H2006L1998 418z" fill="#e6e6e6"/>
<text x="2015.5" y="419.5" font-size="26.5" fill="#e8e8e8" textLength="206.0" lengthAdjust="spacingAndGlyphs" stroke="#e8e8e8" stroke-width="0.4">Save Versions (2)</text>
<rect x="1982.5" y="443.5" width="706" height="155" fill="#181818" stroke="#2e2e2e" stroke-width="1.5"/>
<rect x="1983" y="444" width="705" height="33" fill="#3d3d3d"/>
<rect x="1983" y="476" width="705" height="2" fill="#2a2a2a"/>
<rect x="2100.6" y="445" width="2" height="31" fill="#4e4e4e"/>
<rect x="2100.6" y="478" width="2" height="120" fill="#2c2c2c"/>
<rect x="2300.6" y="445" width="2" height="31" fill="#4e4e4e"/>
<rect x="2300.6" y="478" width="2" height="120" fill="#2c2c2c"/>
<rect x="2460.5" y="445" width="2" height="31" fill="#4e4e4e"/>
<rect x="2460.5" y="478" width="2" height="120" fill="#2c2c2c"/>
<rect x="1983" y="537" width="705" height="2" fill="#2c2c2c"/>
<text x="2005.0" y="470.0" font-size="24" fill="#e8e8e8" textLength="78.0" lengthAdjust="spacingAndGlyphs" stroke="#e8e8e8" stroke-width="0.4">Version</text>
<text x="2170.8" y="470.0" font-size="24" fill="#e8e8e8" textLength="66.0" lengthAdjust="spacingAndGlyphs" stroke="#e8e8e8" stroke-width="0.4">Offset</text>
<text x="2362.0" y="470.0" font-size="24" fill="#e8e8e8" textLength="44.0" lengthAdjust="spacingAndGlyphs" stroke="#e8e8e8" stroke-width="0.4">Size</text>
<text x="2545.0" y="470.0" font-size="24" fill="#e8e8e8" textLength="61.0" lengthAdjust="spacingAndGlyphs" stroke="#e8e8e8" stroke-width="0.4">Notes</text>
<text x="2043.0" y="516.4" font-size="28" fill="#e8e8e8" text-anchor="middle" stroke="#e8e8e8" stroke-width="0.4">1</text>
<text x="2296.0" y="516.4" font-size="28" fill="#e8e8e8" text-anchor="end" stroke="#e8e8e8" stroke-width="0.4">0</text>
<text x="2393.0" y="516.4" font-size="28" fill="#e8e8e8" textLength="63.0" lengthAdjust="spacingAndGlyphs" stroke="#e8e8e8" stroke-width="0.4">116 B</text>
<text x="2471.0" y="516.4" font-size="28" fill="#e8e8e8" textLength="91.0" lengthAdjust="spacingAndGlyphs" stroke="#e8e8e8" stroke-width="0.4">Original</text>
<text x="2043.0" y="575.7" font-size="28" fill="#e8e8e8" text-anchor="middle" stroke="#e8e8e8" stroke-width="0.4">2</text>
<text x="2256.5" y="575.7" font-size="28" fill="#e8e8e8" textLength="40.0" lengthAdjust="spacingAndGlyphs" stroke="#e8e8e8" stroke-width="0.4">116</text>
<text x="2375.0" y="575.7" font-size="28" fill="#e8e8e8" textLength="81.0" lengthAdjust="spacingAndGlyphs" stroke="#e8e8e8" stroke-width="0.4">1.8 MB</text>
<text x="2471.0" y="575.7" font-size="28" fill="#e8e8e8" textLength="90.0" lengthAdjust="spacingAndGlyphs" stroke="#e8e8e8" stroke-width="0.4">Current</text>
<text x="1959.0" y="704.3" font-size="26.5" fill="#e8e8e8" textLength="167.0" lengthAdjust="spacingAndGlyphs" stroke="#e8e8e8" stroke-width="0.4">Security Risks</text>
<rect x="1960.5" y="715.5" width="752" height="78" rx="5" fill="none" stroke="#474747" stroke-width="2"/>
<text x="1982.7" y="764.0" font-size="27" fill="#8c8c8c" textLength="319.0" lengthAdjust="spacingAndGlyphs">No security risks detected.</text>
<text x="1959.0" y="874.4" font-size="26.5" fill="#e8e8e8" textLength="255.0" lengthAdjust="spacingAndGlyphs" stroke="#e8e8e8" stroke-width="0.4">PDF Syntax Warnings</text>
<rect x="1960.5" y="885.5" width="752" height="543" rx="5" fill="none" stroke="#474747" stroke-width="2"/>
<text x="1982.7" y="935.0" font-size="27" fill="#e8e8e8" textLength="222.0" lengthAdjust="spacingAndGlyphs" stroke="#e8e8e8" stroke-width="0.4">68 warnings found</text>
<rect x="1983" y="963.5" width="266" height="46" rx="5" fill="#181818" stroke="#222" stroke-width="1"/><text x="1988.6" y="996.5" font-size="27" fill="#6e6e6e" textLength="196.0" lengthAdjust="spacingAndGlyphs">Filter warnings...</text>
<rect x="2531" y="964" width="158" height="45" rx="5" fill="#1e1e1e"/><rect x="2533" y="966" width="154" height="41" rx="4" fill="#3c3c3c" stroke="#4c4c4c" stroke-width="1"/><text x="2559.0" y="996.5" font-size="27" fill="#e8e8e8" textLength="77.0" lengthAdjust="spacingAndGlyphs" stroke="#e8e8e8" stroke-width="0.4">Export</text><path d="M2660.0 983.0L2666 989.0L2672.0 983.0z" fill="#c8c8c8"/>
<rect x="1982.5" y="1023.5" width="705" height="381" fill="#181818" stroke="#2e2e2e" stroke-width="1.5"/>
<rect x="1983" y="1024" width="677" height="33" fill="#3d3d3d"/>
<rect x="1983" y="1056" width="677" height="2" fill="#2a2a2a"/>
<text x="1989.0" y="1050.3" font-size="24" fill="#e8e8e8" font-weight="bold" textLength="92.0" lengthAdjust="spacingAndGlyphs" stroke="#e8e8e8" stroke-width="0.3">Warning</text>
<rect x="1983" y="1058" width="677" height="60" fill="#3a3a3a"/>
<rect x="1983" y="1117" width="677" height="2" fill="#2c2c2c"/>
<rect x="1983" y="1177" width="677" height="2" fill="#2c2c2c"/>
<rect x="1983" y="1236.5" width="677" height="2" fill="#2c2c2c"/>
<rect x="1983" y="1296.5" width="677" height="2" fill="#2c2c2c"/>
<rect x="1983" y="1357" width="677" height="2" fill="#2c2c2c"/>
<g clip-path="url(#warnclip)">
<text x="1990.6" y="1096.4" font-size="28" fill="#e8e8e8" textLength="583.0" lengthAdjust="spacingAndGlyphs" stroke="#e8e8e8" stroke-width="0.4">WARNING: part 8 is empty but nshared_total &gt; ...</text>
<text x="1990.6" y="1156.6" font-size="28" fill="#e8e8e8" textLength="676.0" lengthAdjust="spacingAndGlyphs" stroke="#e8e8e8" stroke-width="0.4">WARNING: page 1: shared object 828: in computed list b</text>
<text x="1990.6" y="1216.5" font-size="28" fill="#e8e8e8" textLength="676.0" lengthAdjust="spacingAndGlyphs" stroke="#e8e8e8" stroke-width="0.4">WARNING: page 1: shared object 827: in computed list b</text>
<text x="1990.6" y="1276.4" font-size="28" fill="#e8e8e8" textLength="676.0" lengthAdjust="spacingAndGlyphs" stroke="#e8e8e8" stroke-width="0.4">WARNING: page 1: shared object 826: in computed list b</text>
<text x="1990.6" y="1336.3" font-size="28" fill="#e8e8e8" textLength="676.0" lengthAdjust="spacingAndGlyphs" stroke="#e8e8e8" stroke-width="0.4">WARNING: page 1: shared object 825: in computed list b</text>
<text x="1990.6" y="1396.2" font-size="28" fill="#e8e8e8" textLength="676.0" lengthAdjust="spacingAndGlyphs" stroke="#e8e8e8" stroke-width="0.4">WARNING: page 1: shared object 824: in computed list b</text>
</g>
<rect x="2660" y="1024" width="28" height="380" fill="#2a2a2a"/><rect x="2661" y="1025" width="26" height="25" fill="#242424"/><rect x="2663" y="1027" width="22" height="21" fill="#3d3d3d" stroke="#5a5a5a" stroke-width="2" rx="1"/><path d="M2666.0 1041.5L2674.0 1033.5L2682.0 1041.5z" fill="#bdbdbd"/><rect x="2661" y="1051" width="26" height="326" fill="#3a3a3a"/><rect x="2661" y="1053" width="26" height="52" fill="#242424"/><rect x="2663" y="1054" width="22" height="49" fill="#3e3e3e" stroke="#5a5a5a" stroke-width="2" rx="1"/><rect x="2661" y="1378" width="26" height="25" fill="#242424"/><rect x="2663" y="1380" width="22" height="21" fill="#3d3d3d" stroke="#5a5a5a" stroke-width="2" rx="1"/><path d="M2666.0 1386.5L2674.0 1394.5L2682.0 1386.5z" fill="#bdbdbd"/>
<g clip-path="url(#panelclip)">
<text x="1959.0" y="1511.0" font-size="26.5" fill="#e8e8e8" textLength="149.0" lengthAdjust="spacingAndGlyphs" stroke="#e8e8e8" stroke-width="0.4">Integrity Log</text>
<rect x="1960.5" y="1522.5" width="752" height="277" rx="5" fill="none" stroke="#474747" stroke-width="2"/>
<text x="1982.7" y="1571.2" font-size="27" fill="#e8e8e8" textLength="170.0" lengthAdjust="spacingAndGlyphs" stroke="#e8e8e8" stroke-width="0.4">7 issues found</text>
<rect x="1983" y="1599.7" width="266" height="46" rx="5" fill="#181818" stroke="#222" stroke-width="1"/><text x="1988.6" y="1632.7" font-size="27" fill="#6e6e6e" textLength="163.0" lengthAdjust="spacingAndGlyphs">Filter issues...</text>
<rect x="2531" y="1600" width="158" height="45" rx="5" fill="#1e1e1e"/><rect x="2533" y="1602" width="154" height="41" rx="4" fill="#3c3c3c" stroke="#4c4c4c" stroke-width="1"/><text x="2559.0" y="1632.5" font-size="27" fill="#e8e8e8" textLength="77.0" lengthAdjust="spacingAndGlyphs" stroke="#e8e8e8" stroke-width="0.4">Export</text><path d="M2660.0 1619.0L2666 1625.0L2672.0 1619.0z" fill="#c8c8c8"/>
<rect x="1982.5" y="1659.5" width="705" height="100" fill="#181818" stroke="#2e2e2e" stroke-width="1.5"/>
<rect x="1983" y="1660" width="669" height="33" fill="#3d3d3d"/>
<rect x="1983" y="1693" width="669" height="60" fill="#2e2e2e"/>
<rect x="2119.5" y="1661" width="2" height="31" fill="#4e4e4e"/>
<rect x="2119.5" y="1694" width="2" height="60" fill="#242424"/>
<rect x="2287.8" y="1661" width="2" height="31" fill="#4e4e4e"/>
<rect x="2287.8" y="1694" width="2" height="60" fill="#242424"/>
<rect x="2652" y="1693" width="8" height="60" fill="#161616"/>
<text x="1988.6" y="1686.4" font-size="24" fill="#e8e8e8" font-weight="bold" textLength="92.0" lengthAdjust="spacingAndGlyphs" stroke="#e8e8e8" stroke-width="0.3">Severity</text>
<path d="M2101.0 1671.5L2108 1678.5L2115.0 1671.5z" fill="#d0d0d0"/>
<text x="2128.5" y="1686.4" font-size="24" fill="#e8e8e8" font-weight="bold" textLength="73.0" lengthAdjust="spacingAndGlyphs" stroke="#e8e8e8" stroke-width="0.3">Object</text>
<text x="2296.5" y="1686.4" font-size="24" fill="#e8e8e8" font-weight="bold" textLength="129.0" lengthAdjust="spacingAndGlyphs" stroke="#e8e8e8" stroke-width="0.3">Description</text>
<text x="1991.4" y="1731.6" font-size="28" fill="#e8e8e8" textLength="96.0" lengthAdjust="spacingAndGlyphs" stroke="#e8e8e8" stroke-width="0.4">Warning</text>
<text x="2131.0" y="1731.6" font-size="28" fill="#e8e8e8" textLength="152.0" lengthAdjust="spacingAndGlyphs" stroke="#e8e8e8" stroke-width="0.4">Linearization</text>
<text x="2298.5" y="1731.6" font-size="28" fill="#e8e8e8" textLength="270.0" lengthAdjust="spacingAndGlyphs" stroke="#e8e8e8" stroke-width="0.4">PDF is linearized but ...</text>
<rect x="2660" y="1660" width="28" height="141" fill="#2a2a2a"/><rect x="2661" y="1661" width="26" height="25" fill="#242424"/><rect x="2663" y="1663" width="22" height="21" fill="#3d3d3d" stroke="#5a5a5a" stroke-width="2" rx="1"/><path d="M2666.0 1677.5L2674.0 1669.5L2682.0 1677.5z" fill="#bdbdbd"/><rect x="2661" y="1687" width="26" height="87" fill="#3a3a3a"/><rect x="2661" y="1687" width="26" height="113" fill="#242424"/><rect x="2663" y="1688" width="22" height="110" fill="#3e3e3e" stroke="#5a5a5a" stroke-width="2" rx="1"/><rect x="2661" y="1775" width="26" height="25" fill="#242424"/><rect x="2663" y="1777" width="22" height="21" fill="#3d3d3d" stroke="#5a5a5a" stroke-width="2" rx="1"/><path d="M2666.0 1783.5L2674.0 1791.5L2682.0 1783.5z" fill="#bdbdbd"/>
</g>
<rect x="2732" y="183" width="27" height="1568" fill="#2a2a2a"/><rect x="2733" y="184" width="25" height="25" fill="#242424"/><rect x="2735" y="186" width="21" height="21" fill="#3d3d3d" stroke="#5a5a5a" stroke-width="2" rx="1"/><path d="M2737.5 200.5L2745.5 192.5L2753.5 200.5z" fill="#bdbdbd"/><rect x="2733" y="210" width="25" height="1514" fill="#3a3a3a"/><rect x="2733" y="211" width="25" height="1145" fill="#242424"/><rect x="2735" y="212" width="21" height="1142" fill="#3e3e3e" stroke="#5a5a5a" stroke-width="2" rx="1"/><rect x="2733" y="1725" width="25" height="25" fill="#242424"/><rect x="2735" y="1727" width="21" height="21" fill="#3d3d3d" stroke="#5a5a5a" stroke-width="2" rx="1"/><path d="M2737.5 1733.5L2745.5 1741.5L2753.5 1733.5z" fill="#bdbdbd"/>
</svg></body></html>
